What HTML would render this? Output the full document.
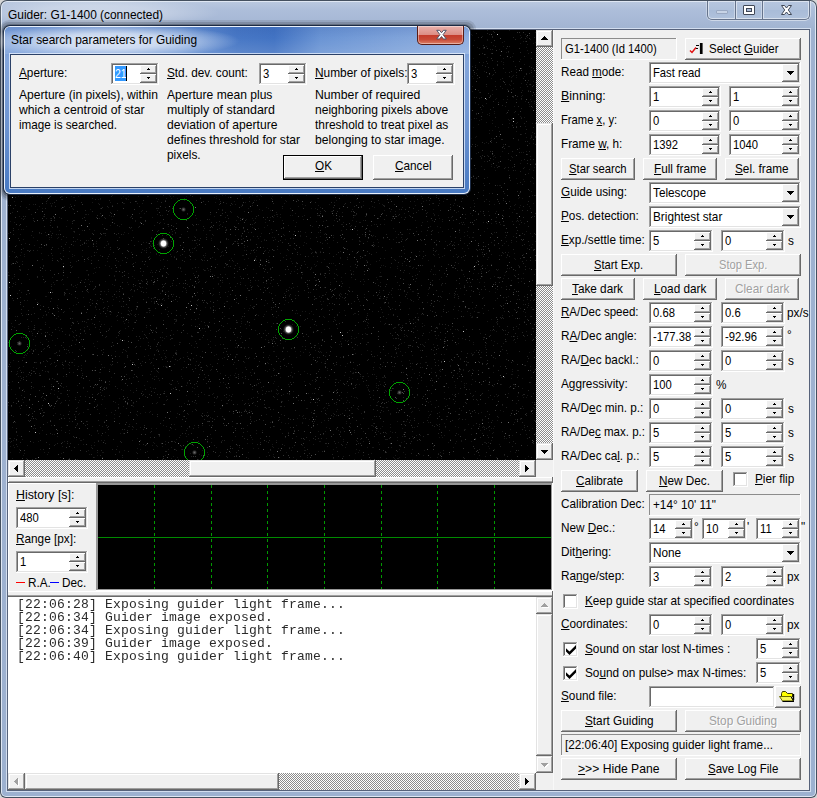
<!DOCTYPE html>
<html><head><meta charset="utf-8"><title>Guider</title>
<style>
html,body{margin:0;padding:0}
body{width:817px;height:798px;position:relative;overflow:hidden;background:#d6d6d6;font-family:"Liberation Sans",sans-serif;font-size:13px}
.a{position:absolute;box-sizing:border-box}
.t{position:absolute;white-space:nowrap;line-height:16px;transform-origin:0 0;font-family:"Liberation Sans",sans-serif}
.t u{text-decoration:underline;text-underline-offset:1px;text-decoration-thickness:1px}
.mono{font-family:"Liberation Mono",monospace}
.btn{background:#f0f0f0;box-shadow:inset -1px -1px #696969,inset 1px 1px #fff,inset -2px -2px #a0a0a0,inset 2px 2px #f0f0f0}
.sbb{background:#f0f0f0;box-shadow:inset -1px -1px #696969,inset 1px 1px #e3e3e3,inset -2px -2px #a0a0a0,inset 2px 2px #fff}
.sbtn{background:#f0f0f0;box-shadow:inset -1px -1px #696969,inset 1px 1px #fff,inset -2px -2px #a0a0a0}
.sunk{background:#fff;box-shadow:inset -1px -1px #fff,inset 1px 1px #a0a0a0,inset -2px -2px #e3e3e3,inset 2px 2px #696969}
.stat{background:#f0f0f0;box-shadow:inset -1px -1px #fff,inset 1px 1px #8c8c8c}
.track{background-color:#fff;background-image:conic-gradient(#8c8c8c 25%,#fff 0 50%,#8c8c8c 0 75%,#fff 0);background-size:2px 2px}
</style></head><body>
<div class="a " style="left:0px;top:0px;width:817px;height:798px;border-radius:7px 7px 6px 6px;background:#44505f"></div>
<div class="a " style="left:1px;top:1px;width:815px;height:796px;border-radius:6px 6px 5px 5px;background:#dfe7f3"></div>
<div class="a " style="left:2px;top:2px;width:813px;height:794px;border-radius:5px 5px 4px 4px;background:linear-gradient(180deg,#b9c8df 0,#adbeda 8px,#a6b8d5 20px,#9fb2d0 30px,#9db1d0 100%)"></div>
<div class="a " style="left:-30px;top:-2px;width:250px;height:30px;border-radius:50%;background:radial-gradient(ellipse closest-side,rgba(255,255,255,.42) 0,rgba(255,255,255,.3) 50%,rgba(255,255,255,0) 100%)"></div>
<div class="t " style="left:8px;top:7px;font-size:13px;color:#000;transform:scaleX(0.9166);">Guider: G1-1400 (connected)</div>
<div class="a " style="left:707px;top:1px;width:103px;height:19px;border:1px solid #66748c;border-top:none;border-radius:0 0 5px 5px;background:linear-gradient(180deg,#b7c7df 0,#afc1db 48%,#a9bcd8 52%,#b0c2dc 100%);box-shadow:inset 0 0 0 1px rgba(255,255,255,.5),0 1px 0 rgba(255,255,255,.45),1px 0 0 rgba(255,255,255,.45),-1px 0 0 rgba(255,255,255,.3)"></div>
<div class="a " style="left:735px;top:1px;width:1px;height:18px;background:#66748c"></div>
<div class="a " style="left:736px;top:2px;width:1px;height:16px;background:rgba(255,255,255,.5)"></div>
<div class="a " style="left:734px;top:2px;width:1px;height:16px;background:rgba(255,255,255,.35)"></div>
<div class="a " style="left:762px;top:1px;width:1px;height:18px;background:#66748c"></div>
<div class="a " style="left:763px;top:2px;width:1px;height:16px;background:rgba(255,255,255,.5)"></div>
<div class="a " style="left:761px;top:2px;width:1px;height:16px;background:rgba(255,255,255,.35)"></div>
<div class="a " style="left:716px;top:10px;width:12px;height:4px;background:#c8d4e6;border:1px solid #9aa9c2;border-radius:1px"></div>
<div class="a " style="left:743px;top:5px;width:12px;height:10px;background:#fff;border:1px solid #3f4756;border-radius:1px"></div>
<div class="a " style="left:746px;top:8px;width:6px;height:4px;background:#a9bad6;border:1px solid #3f4756"></div>
<svg class="a" style="left:780px;top:4px" width="13" height="12" viewBox="0 0 13 12"><path d="M1.5 1.5h3L6.5 4l2-2.5h3L8.3 6l3.2 4.5h-3L6.5 8l-2 2.5h-3L4.7 6z" fill="#fff" stroke="#3f4756" stroke-width="1" stroke-linejoin="round"/></svg>
<div class="a " style="left:6px;top:28px;width:805px;height:764px;background:#d3deef"></div>
<div class="a " style="left:7px;top:29px;width:803px;height:762px;background:#56627a"></div>
<div class="a " style="left:8px;top:30px;width:801px;height:760px;background:#f0f0f0"></div>
<div class="a " style="left:553px;top:30px;width:1px;height:760px;background:#f8f8f8"></div>
<div class="a " style="left:554px;top:30px;width:1px;height:760px;background:#f0f0f0"></div>
<div class="a stat" style="left:561px;top:38px;width:116px;height:22px;"></div>
<div class="t " style="left:565px;top:41px;font-size:13px;color:#000;transform:scaleX(0.8641);">G1-1400 (Id 1400)</div>
<div class="a btn" style="left:685px;top:38px;width:116px;height:22px;"></div>
<div class="t " style="left:709px;top:41px;font-size:13px;color:#000;transform:scaleX(0.8824);">Select <u>G</u>uider</div>
<svg class="a" style="left:689px;top:42px" width="16" height="14" viewBox="0 0 16 14"><path d="M1 8.5l2 2 4-5" stroke="#e01010" stroke-width="1.5" fill="none"/><path d="M7 3.5h3M7 6.5h2" stroke="#000" stroke-width="1"/><rect x="10" y="1" width="1" height="11" fill="#d8d8d8"/><rect x="11" y="1" width="2.6" height="11" fill="#000"/></svg>
<div class="t " style="left:561px;top:64px;font-size:13px;color:#000;transform:scaleX(0.8966);">Read <u>m</u>ode:</div>
<div class="a sunk" style="left:649px;top:62px;width:152px;height:22px;"></div>
<div class="a btn" style="left:782px;top:64px;width:17px;height:18px;"></div>
<div class="a " style="left:787px;top:71px;width:7px;height:1px;background:#000"></div>
<div class="a " style="left:788px;top:72px;width:5px;height:1px;background:#000"></div>
<div class="a " style="left:789px;top:73px;width:3px;height:1px;background:#000"></div>
<div class="a " style="left:790px;top:74px;width:1px;height:1px;background:#000"></div>
<div class="t " style="left:653px;top:65px;font-size:13px;color:#000;transform:scaleX(0.8650);">Fast read</div>
<div class="t " style="left:561px;top:88px;font-size:13px;color:#000;transform:scaleX(0.9515);"><u>B</u>inning:</div>
<div class="a sunk" style="left:649px;top:86px;width:72px;height:22px;"></div>
<div class="a sbtn" style="left:702px;top:88px;width:17px;height:9px;"></div>
<div class="a sbtn" style="left:702px;top:97px;width:17px;height:9px;"></div>
<div class="a " style="left:710px;top:91px;width:1px;height:1px;background:#000"></div>
<div class="a " style="left:709px;top:92px;width:3px;height:1px;background:#000"></div>
<div class="a " style="left:709px;top:100px;width:3px;height:1px;background:#000"></div>
<div class="a " style="left:710px;top:101px;width:1px;height:1px;background:#000"></div>
<div class="t " style="left:652.5px;top:89px;font-size:13px;color:#000;transform:scaleX(0.8650);">1</div>
<div class="a sunk" style="left:729px;top:86px;width:72px;height:22px;"></div>
<div class="a sbtn" style="left:782px;top:88px;width:17px;height:9px;"></div>
<div class="a sbtn" style="left:782px;top:97px;width:17px;height:9px;"></div>
<div class="a " style="left:790px;top:91px;width:1px;height:1px;background:#000"></div>
<div class="a " style="left:789px;top:92px;width:3px;height:1px;background:#000"></div>
<div class="a " style="left:789px;top:100px;width:3px;height:1px;background:#000"></div>
<div class="a " style="left:790px;top:101px;width:1px;height:1px;background:#000"></div>
<div class="t " style="left:732.5px;top:89px;font-size:13px;color:#000;transform:scaleX(0.8650);">1</div>
<div class="t " style="left:561px;top:112px;font-size:13px;color:#000;transform:scaleX(0.8645);">Frame <u>x</u>, y:</div>
<div class="a sunk" style="left:649px;top:110px;width:72px;height:22px;"></div>
<div class="a sbtn" style="left:702px;top:112px;width:17px;height:9px;"></div>
<div class="a sbtn" style="left:702px;top:121px;width:17px;height:9px;"></div>
<div class="a " style="left:710px;top:115px;width:1px;height:1px;background:#000"></div>
<div class="a " style="left:709px;top:116px;width:3px;height:1px;background:#000"></div>
<div class="a " style="left:709px;top:124px;width:3px;height:1px;background:#000"></div>
<div class="a " style="left:710px;top:125px;width:1px;height:1px;background:#000"></div>
<div class="t " style="left:652.5px;top:113px;font-size:13px;color:#000;transform:scaleX(0.8650);">0</div>
<div class="a sunk" style="left:729px;top:110px;width:72px;height:22px;"></div>
<div class="a sbtn" style="left:782px;top:112px;width:17px;height:9px;"></div>
<div class="a sbtn" style="left:782px;top:121px;width:17px;height:9px;"></div>
<div class="a " style="left:790px;top:115px;width:1px;height:1px;background:#000"></div>
<div class="a " style="left:789px;top:116px;width:3px;height:1px;background:#000"></div>
<div class="a " style="left:789px;top:124px;width:3px;height:1px;background:#000"></div>
<div class="a " style="left:790px;top:125px;width:1px;height:1px;background:#000"></div>
<div class="t " style="left:732.5px;top:113px;font-size:13px;color:#000;transform:scaleX(0.8650);">0</div>
<div class="t " style="left:561px;top:136px;font-size:13px;color:#000;transform:scaleX(0.9027);">Frame <u>w</u>, h:</div>
<div class="a sunk" style="left:649px;top:134px;width:72px;height:22px;"></div>
<div class="a sbtn" style="left:702px;top:136px;width:17px;height:9px;"></div>
<div class="a sbtn" style="left:702px;top:145px;width:17px;height:9px;"></div>
<div class="a " style="left:710px;top:139px;width:1px;height:1px;background:#000"></div>
<div class="a " style="left:709px;top:140px;width:3px;height:1px;background:#000"></div>
<div class="a " style="left:709px;top:148px;width:3px;height:1px;background:#000"></div>
<div class="a " style="left:710px;top:149px;width:1px;height:1px;background:#000"></div>
<div class="t " style="left:652.5px;top:137px;font-size:13px;color:#000;transform:scaleX(0.8650);">1392</div>
<div class="a sunk" style="left:729px;top:134px;width:72px;height:22px;"></div>
<div class="a sbtn" style="left:782px;top:136px;width:17px;height:9px;"></div>
<div class="a sbtn" style="left:782px;top:145px;width:17px;height:9px;"></div>
<div class="a " style="left:790px;top:139px;width:1px;height:1px;background:#000"></div>
<div class="a " style="left:789px;top:140px;width:3px;height:1px;background:#000"></div>
<div class="a " style="left:789px;top:148px;width:3px;height:1px;background:#000"></div>
<div class="a " style="left:790px;top:149px;width:1px;height:1px;background:#000"></div>
<div class="t " style="left:732.5px;top:137px;font-size:13px;color:#000;transform:scaleX(0.8650);">1040</div>
<div class="a btn" style="left:561px;top:158px;width:74px;height:22px;"></div>
<div class="t " style="left:569px;top:161px;font-size:13px;color:#000;transform:scaleX(0.8665);"><u>S</u>tar search</div>
<div class="a btn" style="left:643px;top:158px;width:74px;height:22px;"></div>
<div class="t " style="left:654px;top:161px;font-size:13px;color:#000;transform:scaleX(0.9050);"><u>F</u>ull frame</div>
<div class="a btn" style="left:725px;top:158px;width:74px;height:22px;"></div>
<div class="t " style="left:735px;top:161px;font-size:13px;color:#000;transform:scaleX(0.9050);"><u>S</u>el. frame</div>
<div class="t " style="left:561px;top:184px;font-size:13px;color:#000;transform:scaleX(0.9050);"><u>G</u>uide using:</div>
<div class="a sunk" style="left:649px;top:182px;width:152px;height:22px;"></div>
<div class="a btn" style="left:782px;top:184px;width:17px;height:18px;"></div>
<div class="a " style="left:787px;top:191px;width:7px;height:1px;background:#000"></div>
<div class="a " style="left:788px;top:192px;width:5px;height:1px;background:#000"></div>
<div class="a " style="left:789px;top:193px;width:3px;height:1px;background:#000"></div>
<div class="a " style="left:790px;top:194px;width:1px;height:1px;background:#000"></div>
<div class="t " style="left:653px;top:185px;font-size:13px;color:#000;transform:scaleX(0.9050);">Telescope</div>
<div class="t " style="left:561px;top:208px;font-size:13px;color:#000;transform:scaleX(0.9050);"><u>P</u>os. detection:</div>
<div class="a sunk" style="left:649px;top:206px;width:152px;height:22px;"></div>
<div class="a btn" style="left:782px;top:208px;width:17px;height:18px;"></div>
<div class="a " style="left:787px;top:215px;width:7px;height:1px;background:#000"></div>
<div class="a " style="left:788px;top:216px;width:5px;height:1px;background:#000"></div>
<div class="a " style="left:789px;top:217px;width:3px;height:1px;background:#000"></div>
<div class="a " style="left:790px;top:218px;width:1px;height:1px;background:#000"></div>
<div class="t " style="left:653px;top:209px;font-size:13px;color:#000;transform:scaleX(0.9050);">Brightest star</div>
<div class="t " style="left:561px;top:232px;font-size:13px;color:#000;transform:scaleX(0.9050);"><u>E</u>xp./settle time:</div>
<div class="a sunk" style="left:649px;top:230px;width:64px;height:22px;"></div>
<div class="a sbtn" style="left:694px;top:232px;width:17px;height:9px;"></div>
<div class="a sbtn" style="left:694px;top:241px;width:17px;height:9px;"></div>
<div class="a " style="left:702px;top:235px;width:1px;height:1px;background:#000"></div>
<div class="a " style="left:701px;top:236px;width:3px;height:1px;background:#000"></div>
<div class="a " style="left:701px;top:244px;width:3px;height:1px;background:#000"></div>
<div class="a " style="left:702px;top:245px;width:1px;height:1px;background:#000"></div>
<div class="t " style="left:652.5px;top:233px;font-size:13px;color:#000;transform:scaleX(0.8650);">5</div>
<div class="a sunk" style="left:721px;top:230px;width:64px;height:22px;"></div>
<div class="a sbtn" style="left:766px;top:232px;width:17px;height:9px;"></div>
<div class="a sbtn" style="left:766px;top:241px;width:17px;height:9px;"></div>
<div class="a " style="left:774px;top:235px;width:1px;height:1px;background:#000"></div>
<div class="a " style="left:773px;top:236px;width:3px;height:1px;background:#000"></div>
<div class="a " style="left:773px;top:244px;width:3px;height:1px;background:#000"></div>
<div class="a " style="left:774px;top:245px;width:1px;height:1px;background:#000"></div>
<div class="t " style="left:724.5px;top:233px;font-size:13px;color:#000;transform:scaleX(0.8650);">0</div>
<div class="t " style="left:788px;top:233px;font-size:13px;color:#000;transform:scaleX(0.9050);">s</div>
<div class="a btn" style="left:561px;top:254px;width:116px;height:22px;"></div>
<div class="t " style="left:594px;top:257px;font-size:13px;color:#000;transform:scaleX(0.8584);"><u>S</u>tart Exp.</div>
<div class="a btn" style="left:685px;top:254px;width:116px;height:22px;"></div>
<div class="t " style="left:720px;top:258px;font-size:13px;color:#fff;transform:scaleX(0.8569);">Stop Exp.</div>
<div class="t " style="left:719px;top:257px;font-size:13px;color:#a0a0a0;transform:scaleX(0.8569);">Stop Exp.</div>
<div class="a btn" style="left:561px;top:278px;width:74px;height:22px;"></div>
<div class="t " style="left:572px;top:281px;font-size:13px;color:#000;transform:scaleX(0.9050);"><u>T</u>ake dark</div>
<div class="a btn" style="left:643px;top:278px;width:74px;height:22px;"></div>
<div class="t " style="left:654px;top:281px;font-size:13px;color:#000;transform:scaleX(0.9050);"><u>L</u>oad dark</div>
<div class="a btn" style="left:725px;top:278px;width:74px;height:22px;"></div>
<div class="t " style="left:736px;top:282px;font-size:13px;color:#fff;transform:scaleX(0.9050);">Clear dark</div>
<div class="t " style="left:735px;top:281px;font-size:13px;color:#a0a0a0;transform:scaleX(0.9050);">Clear dark</div>
<div class="t " style="left:561px;top:304px;font-size:13px;color:#000;transform:scaleX(0.8864);"><u>R</u>A/Dec speed:</div>
<div class="a sunk" style="left:649px;top:302px;width:64px;height:22px;"></div>
<div class="a sbtn" style="left:694px;top:304px;width:17px;height:9px;"></div>
<div class="a sbtn" style="left:694px;top:313px;width:17px;height:9px;"></div>
<div class="a " style="left:702px;top:307px;width:1px;height:1px;background:#000"></div>
<div class="a " style="left:701px;top:308px;width:3px;height:1px;background:#000"></div>
<div class="a " style="left:701px;top:316px;width:3px;height:1px;background:#000"></div>
<div class="a " style="left:702px;top:317px;width:1px;height:1px;background:#000"></div>
<div class="t " style="left:652.5px;top:305px;font-size:13px;color:#000;transform:scaleX(0.8650);">0.68</div>
<div class="a sunk" style="left:721px;top:302px;width:64px;height:22px;"></div>
<div class="a sbtn" style="left:766px;top:304px;width:17px;height:9px;"></div>
<div class="a sbtn" style="left:766px;top:313px;width:17px;height:9px;"></div>
<div class="a " style="left:774px;top:307px;width:1px;height:1px;background:#000"></div>
<div class="a " style="left:773px;top:308px;width:3px;height:1px;background:#000"></div>
<div class="a " style="left:773px;top:316px;width:3px;height:1px;background:#000"></div>
<div class="a " style="left:774px;top:317px;width:1px;height:1px;background:#000"></div>
<div class="t " style="left:724.5px;top:305px;font-size:13px;color:#000;transform:scaleX(0.8650);">0.6</div>
<div class="t " style="left:787px;top:305px;font-size:13px;color:#000;transform:scaleX(0.9050);">px/s</div>
<div class="t " style="left:561px;top:328px;font-size:13px;color:#000;transform:scaleX(0.9050);">R<u>A</u>/Dec angle:</div>
<div class="a sunk" style="left:649px;top:326px;width:64px;height:22px;"></div>
<div class="a sbtn" style="left:694px;top:328px;width:17px;height:9px;"></div>
<div class="a sbtn" style="left:694px;top:337px;width:17px;height:9px;"></div>
<div class="a " style="left:702px;top:331px;width:1px;height:1px;background:#000"></div>
<div class="a " style="left:701px;top:332px;width:3px;height:1px;background:#000"></div>
<div class="a " style="left:701px;top:340px;width:3px;height:1px;background:#000"></div>
<div class="a " style="left:702px;top:341px;width:1px;height:1px;background:#000"></div>
<div class="t " style="left:652.5px;top:329px;font-size:13px;color:#000;transform:scaleX(0.8650);">-177.38</div>
<div class="a sunk" style="left:721px;top:326px;width:64px;height:22px;"></div>
<div class="a sbtn" style="left:766px;top:328px;width:17px;height:9px;"></div>
<div class="a sbtn" style="left:766px;top:337px;width:17px;height:9px;"></div>
<div class="a " style="left:774px;top:331px;width:1px;height:1px;background:#000"></div>
<div class="a " style="left:773px;top:332px;width:3px;height:1px;background:#000"></div>
<div class="a " style="left:773px;top:340px;width:3px;height:1px;background:#000"></div>
<div class="a " style="left:774px;top:341px;width:1px;height:1px;background:#000"></div>
<div class="t " style="left:724.5px;top:329px;font-size:13px;color:#000;transform:scaleX(0.8650);">-92.96</div>
<div class="t " style="left:787px;top:327px;font-size:13px;color:#000;transform:scaleX(0.9050);">°</div>
<div class="t " style="left:561px;top:352px;font-size:13px;color:#000;transform:scaleX(0.9050);">RA/<u>D</u>ec backl.:</div>
<div class="a sunk" style="left:649px;top:350px;width:64px;height:22px;"></div>
<div class="a sbtn" style="left:694px;top:352px;width:17px;height:9px;"></div>
<div class="a sbtn" style="left:694px;top:361px;width:17px;height:9px;"></div>
<div class="a " style="left:702px;top:355px;width:1px;height:1px;background:#000"></div>
<div class="a " style="left:701px;top:356px;width:3px;height:1px;background:#000"></div>
<div class="a " style="left:701px;top:364px;width:3px;height:1px;background:#000"></div>
<div class="a " style="left:702px;top:365px;width:1px;height:1px;background:#000"></div>
<div class="t " style="left:652.5px;top:353px;font-size:13px;color:#000;transform:scaleX(0.8650);">0</div>
<div class="a sunk" style="left:721px;top:350px;width:64px;height:22px;"></div>
<div class="a sbtn" style="left:766px;top:352px;width:17px;height:9px;"></div>
<div class="a sbtn" style="left:766px;top:361px;width:17px;height:9px;"></div>
<div class="a " style="left:774px;top:355px;width:1px;height:1px;background:#000"></div>
<div class="a " style="left:773px;top:356px;width:3px;height:1px;background:#000"></div>
<div class="a " style="left:773px;top:364px;width:3px;height:1px;background:#000"></div>
<div class="a " style="left:774px;top:365px;width:1px;height:1px;background:#000"></div>
<div class="t " style="left:724.5px;top:353px;font-size:13px;color:#000;transform:scaleX(0.8650);">0</div>
<div class="t " style="left:788px;top:353px;font-size:13px;color:#000;transform:scaleX(0.9050);">s</div>
<div class="t " style="left:561px;top:376px;font-size:13px;color:#000;transform:scaleX(0.9050);">A<u>g</u>gressivity:</div>
<div class="a sunk" style="left:649px;top:374px;width:64px;height:22px;"></div>
<div class="a sbtn" style="left:694px;top:376px;width:17px;height:9px;"></div>
<div class="a sbtn" style="left:694px;top:385px;width:17px;height:9px;"></div>
<div class="a " style="left:702px;top:379px;width:1px;height:1px;background:#000"></div>
<div class="a " style="left:701px;top:380px;width:3px;height:1px;background:#000"></div>
<div class="a " style="left:701px;top:388px;width:3px;height:1px;background:#000"></div>
<div class="a " style="left:702px;top:389px;width:1px;height:1px;background:#000"></div>
<div class="t " style="left:652.5px;top:377px;font-size:13px;color:#000;transform:scaleX(0.8650);">100</div>
<div class="t " style="left:716px;top:377px;font-size:13px;color:#000;transform:scaleX(0.9050);">%</div>
<div class="t " style="left:561px;top:400px;font-size:13px;color:#000;transform:scaleX(0.9050);">RA/D<u>e</u>c min. p.:</div>
<div class="a sunk" style="left:649px;top:398px;width:64px;height:22px;"></div>
<div class="a sbtn" style="left:694px;top:400px;width:17px;height:9px;"></div>
<div class="a sbtn" style="left:694px;top:409px;width:17px;height:9px;"></div>
<div class="a " style="left:702px;top:403px;width:1px;height:1px;background:#000"></div>
<div class="a " style="left:701px;top:404px;width:3px;height:1px;background:#000"></div>
<div class="a " style="left:701px;top:412px;width:3px;height:1px;background:#000"></div>
<div class="a " style="left:702px;top:413px;width:1px;height:1px;background:#000"></div>
<div class="t " style="left:652.5px;top:401px;font-size:13px;color:#000;transform:scaleX(0.8650);">0</div>
<div class="a sunk" style="left:721px;top:398px;width:64px;height:22px;"></div>
<div class="a sbtn" style="left:766px;top:400px;width:17px;height:9px;"></div>
<div class="a sbtn" style="left:766px;top:409px;width:17px;height:9px;"></div>
<div class="a " style="left:774px;top:403px;width:1px;height:1px;background:#000"></div>
<div class="a " style="left:773px;top:404px;width:3px;height:1px;background:#000"></div>
<div class="a " style="left:773px;top:412px;width:3px;height:1px;background:#000"></div>
<div class="a " style="left:774px;top:413px;width:1px;height:1px;background:#000"></div>
<div class="t " style="left:724.5px;top:401px;font-size:13px;color:#000;transform:scaleX(0.8650);">0</div>
<div class="t " style="left:788px;top:401px;font-size:13px;color:#000;transform:scaleX(0.9050);">s</div>
<div class="t " style="left:561px;top:424px;font-size:13px;color:#000;transform:scaleX(0.8876);">RA/De<u>c</u> max. p.:</div>
<div class="a sunk" style="left:649px;top:422px;width:64px;height:22px;"></div>
<div class="a sbtn" style="left:694px;top:424px;width:17px;height:9px;"></div>
<div class="a sbtn" style="left:694px;top:433px;width:17px;height:9px;"></div>
<div class="a " style="left:702px;top:427px;width:1px;height:1px;background:#000"></div>
<div class="a " style="left:701px;top:428px;width:3px;height:1px;background:#000"></div>
<div class="a " style="left:701px;top:436px;width:3px;height:1px;background:#000"></div>
<div class="a " style="left:702px;top:437px;width:1px;height:1px;background:#000"></div>
<div class="t " style="left:652.5px;top:425px;font-size:13px;color:#000;transform:scaleX(0.8650);">5</div>
<div class="a sunk" style="left:721px;top:422px;width:64px;height:22px;"></div>
<div class="a sbtn" style="left:766px;top:424px;width:17px;height:9px;"></div>
<div class="a sbtn" style="left:766px;top:433px;width:17px;height:9px;"></div>
<div class="a " style="left:774px;top:427px;width:1px;height:1px;background:#000"></div>
<div class="a " style="left:773px;top:428px;width:3px;height:1px;background:#000"></div>
<div class="a " style="left:773px;top:436px;width:3px;height:1px;background:#000"></div>
<div class="a " style="left:774px;top:437px;width:1px;height:1px;background:#000"></div>
<div class="t " style="left:724.5px;top:425px;font-size:13px;color:#000;transform:scaleX(0.8650);">5</div>
<div class="t " style="left:788px;top:425px;font-size:13px;color:#000;transform:scaleX(0.9050);">s</div>
<div class="t " style="left:561px;top:448px;font-size:13px;color:#000;transform:scaleX(0.9050);">RA/Dec ca<u>l</u>. p.:</div>
<div class="a sunk" style="left:649px;top:446px;width:64px;height:22px;"></div>
<div class="a sbtn" style="left:694px;top:448px;width:17px;height:9px;"></div>
<div class="a sbtn" style="left:694px;top:457px;width:17px;height:9px;"></div>
<div class="a " style="left:702px;top:451px;width:1px;height:1px;background:#000"></div>
<div class="a " style="left:701px;top:452px;width:3px;height:1px;background:#000"></div>
<div class="a " style="left:701px;top:460px;width:3px;height:1px;background:#000"></div>
<div class="a " style="left:702px;top:461px;width:1px;height:1px;background:#000"></div>
<div class="t " style="left:652.5px;top:449px;font-size:13px;color:#000;transform:scaleX(0.8650);">5</div>
<div class="a sunk" style="left:721px;top:446px;width:64px;height:22px;"></div>
<div class="a sbtn" style="left:766px;top:448px;width:17px;height:9px;"></div>
<div class="a sbtn" style="left:766px;top:457px;width:17px;height:9px;"></div>
<div class="a " style="left:774px;top:451px;width:1px;height:1px;background:#000"></div>
<div class="a " style="left:773px;top:452px;width:3px;height:1px;background:#000"></div>
<div class="a " style="left:773px;top:460px;width:3px;height:1px;background:#000"></div>
<div class="a " style="left:774px;top:461px;width:1px;height:1px;background:#000"></div>
<div class="t " style="left:724.5px;top:449px;font-size:13px;color:#000;transform:scaleX(0.8650);">5</div>
<div class="t " style="left:788px;top:449px;font-size:13px;color:#000;transform:scaleX(0.9050);">s</div>
<div class="a btn" style="left:561px;top:470px;width:77px;height:22px;"></div>
<div class="t " style="left:576px;top:473px;font-size:13px;color:#000;transform:scaleX(0.9050);"><u>C</u>alibrate</div>
<div class="a btn" style="left:646px;top:470px;width:77px;height:22px;"></div>
<div class="t " style="left:659px;top:473px;font-size:13px;color:#000;transform:scaleX(0.9050);"><u>N</u>ew Dec.</div>
<div class="a sunk" style="left:733px;top:472px;width:15px;height:15px;background:#fff"></div>
<div class="t " style="left:755px;top:471px;font-size:13px;color:#000;transform:scaleX(0.9050);"><u>P</u>ier flip</div>
<div class="t " style="left:561px;top:496px;font-size:13px;color:#000;transform:scaleX(0.9050);">Calibration Dec:</div>
<div class="a stat" style="left:649px;top:494px;width:152px;height:22px;"></div>
<div class="t " style="left:653px;top:497px;font-size:13px;color:#000;transform:scaleX(0.9050);">+14° 10' 11"</div>
<div class="t " style="left:561px;top:520px;font-size:13px;color:#000;transform:scaleX(0.9050);">New <u>D</u>ec.:</div>
<div class="a sunk" style="left:649px;top:518px;width:45px;height:22px;"></div>
<div class="a sbtn" style="left:675px;top:520px;width:17px;height:9px;"></div>
<div class="a sbtn" style="left:675px;top:529px;width:17px;height:9px;"></div>
<div class="a " style="left:683px;top:523px;width:1px;height:1px;background:#000"></div>
<div class="a " style="left:682px;top:524px;width:3px;height:1px;background:#000"></div>
<div class="a " style="left:682px;top:532px;width:3px;height:1px;background:#000"></div>
<div class="a " style="left:683px;top:533px;width:1px;height:1px;background:#000"></div>
<div class="t " style="left:652.5px;top:521px;font-size:13px;color:#000;transform:scaleX(0.8650);">14</div>
<div class="t " style="left:694px;top:519px;font-size:13px;color:#000;transform:scaleX(0.9050);">°</div>
<div class="a sunk" style="left:702px;top:518px;width:45px;height:22px;"></div>
<div class="a sbtn" style="left:728px;top:520px;width:17px;height:9px;"></div>
<div class="a sbtn" style="left:728px;top:529px;width:17px;height:9px;"></div>
<div class="a " style="left:736px;top:523px;width:1px;height:1px;background:#000"></div>
<div class="a " style="left:735px;top:524px;width:3px;height:1px;background:#000"></div>
<div class="a " style="left:735px;top:532px;width:3px;height:1px;background:#000"></div>
<div class="a " style="left:736px;top:533px;width:1px;height:1px;background:#000"></div>
<div class="t " style="left:705.5px;top:521px;font-size:13px;color:#000;transform:scaleX(0.8650);">10</div>
<div class="t " style="left:747px;top:519px;font-size:13px;color:#000;transform:scaleX(0.9050);">'</div>
<div class="a sunk" style="left:756px;top:518px;width:45px;height:22px;"></div>
<div class="a sbtn" style="left:782px;top:520px;width:17px;height:9px;"></div>
<div class="a sbtn" style="left:782px;top:529px;width:17px;height:9px;"></div>
<div class="a " style="left:790px;top:523px;width:1px;height:1px;background:#000"></div>
<div class="a " style="left:789px;top:524px;width:3px;height:1px;background:#000"></div>
<div class="a " style="left:789px;top:532px;width:3px;height:1px;background:#000"></div>
<div class="a " style="left:790px;top:533px;width:1px;height:1px;background:#000"></div>
<div class="t " style="left:759.5px;top:521px;font-size:13px;color:#000;transform:scaleX(0.8650);">11</div>
<div class="t " style="left:801px;top:519px;font-size:13px;color:#000;transform:scaleX(0.9050);">"</div>
<div class="t " style="left:561px;top:544px;font-size:13px;color:#000;transform:scaleX(0.9050);">Dit<u>h</u>ering:</div>
<div class="a sunk" style="left:649px;top:542px;width:152px;height:22px;"></div>
<div class="a btn" style="left:782px;top:544px;width:17px;height:18px;"></div>
<div class="a " style="left:787px;top:551px;width:7px;height:1px;background:#000"></div>
<div class="a " style="left:788px;top:552px;width:5px;height:1px;background:#000"></div>
<div class="a " style="left:789px;top:553px;width:3px;height:1px;background:#000"></div>
<div class="a " style="left:790px;top:554px;width:1px;height:1px;background:#000"></div>
<div class="t " style="left:653px;top:545px;font-size:13px;color:#000;transform:scaleX(0.9050);">None</div>
<div class="t " style="left:561px;top:568px;font-size:13px;color:#000;transform:scaleX(0.9050);">Ra<u>n</u>ge/step:</div>
<div class="a sunk" style="left:649px;top:566px;width:64px;height:22px;"></div>
<div class="a sbtn" style="left:694px;top:568px;width:17px;height:9px;"></div>
<div class="a sbtn" style="left:694px;top:577px;width:17px;height:9px;"></div>
<div class="a " style="left:702px;top:571px;width:1px;height:1px;background:#000"></div>
<div class="a " style="left:701px;top:572px;width:3px;height:1px;background:#000"></div>
<div class="a " style="left:701px;top:580px;width:3px;height:1px;background:#000"></div>
<div class="a " style="left:702px;top:581px;width:1px;height:1px;background:#000"></div>
<div class="t " style="left:652.5px;top:569px;font-size:13px;color:#000;transform:scaleX(0.8650);">3</div>
<div class="a sunk" style="left:721px;top:566px;width:64px;height:22px;"></div>
<div class="a sbtn" style="left:766px;top:568px;width:17px;height:9px;"></div>
<div class="a sbtn" style="left:766px;top:577px;width:17px;height:9px;"></div>
<div class="a " style="left:774px;top:571px;width:1px;height:1px;background:#000"></div>
<div class="a " style="left:773px;top:572px;width:3px;height:1px;background:#000"></div>
<div class="a " style="left:773px;top:580px;width:3px;height:1px;background:#000"></div>
<div class="a " style="left:774px;top:581px;width:1px;height:1px;background:#000"></div>
<div class="t " style="left:724.5px;top:569px;font-size:13px;color:#000;transform:scaleX(0.8650);">2</div>
<div class="t " style="left:787px;top:569px;font-size:13px;color:#000;transform:scaleX(0.9050);">px</div>
<div class="a sunk" style="left:563px;top:594px;width:15px;height:15px;background:#fff"></div>
<div class="t " style="left:585px;top:593px;font-size:13px;color:#000;transform:scaleX(0.9038);"><u>K</u>eep guide star at specified coordinates</div>
<div class="t " style="left:561px;top:616px;font-size:13px;color:#000;transform:scaleX(0.9050);"><u>C</u>oordinates:</div>
<div class="a sunk" style="left:649px;top:614px;width:64px;height:22px;"></div>
<div class="a sbtn" style="left:694px;top:616px;width:17px;height:9px;"></div>
<div class="a sbtn" style="left:694px;top:625px;width:17px;height:9px;"></div>
<div class="a " style="left:702px;top:619px;width:1px;height:1px;background:#000"></div>
<div class="a " style="left:701px;top:620px;width:3px;height:1px;background:#000"></div>
<div class="a " style="left:701px;top:628px;width:3px;height:1px;background:#000"></div>
<div class="a " style="left:702px;top:629px;width:1px;height:1px;background:#000"></div>
<div class="t " style="left:652.5px;top:617px;font-size:13px;color:#000;transform:scaleX(0.8650);">0</div>
<div class="a sunk" style="left:721px;top:614px;width:64px;height:22px;"></div>
<div class="a sbtn" style="left:766px;top:616px;width:17px;height:9px;"></div>
<div class="a sbtn" style="left:766px;top:625px;width:17px;height:9px;"></div>
<div class="a " style="left:774px;top:619px;width:1px;height:1px;background:#000"></div>
<div class="a " style="left:773px;top:620px;width:3px;height:1px;background:#000"></div>
<div class="a " style="left:773px;top:628px;width:3px;height:1px;background:#000"></div>
<div class="a " style="left:774px;top:629px;width:1px;height:1px;background:#000"></div>
<div class="t " style="left:724.5px;top:617px;font-size:13px;color:#000;transform:scaleX(0.8650);">0</div>
<div class="t " style="left:787px;top:617px;font-size:13px;color:#000;transform:scaleX(0.9050);">px</div>
<div class="a sunk" style="left:563px;top:642px;width:15px;height:15px;background:#fff"></div>
<svg class="a" style="left:563px;top:642px" width="15" height="15" viewBox="0 0 15 15"><path d="M3 6.2L6.5 9.6 13 3.1V6.5L6.5 13 3 9.6Z" fill="#000"/></svg>
<div class="t " style="left:585px;top:641px;font-size:13px;color:#000;transform:scaleX(0.9050);"><u>S</u>ound on star lost N-times :</div>
<div class="a sunk" style="left:756px;top:638px;width:45px;height:22px;"></div>
<div class="a sbtn" style="left:782px;top:640px;width:17px;height:9px;"></div>
<div class="a sbtn" style="left:782px;top:649px;width:17px;height:9px;"></div>
<div class="a " style="left:790px;top:643px;width:1px;height:1px;background:#000"></div>
<div class="a " style="left:789px;top:644px;width:3px;height:1px;background:#000"></div>
<div class="a " style="left:789px;top:652px;width:3px;height:1px;background:#000"></div>
<div class="a " style="left:790px;top:653px;width:1px;height:1px;background:#000"></div>
<div class="t " style="left:759.5px;top:641px;font-size:13px;color:#000;transform:scaleX(0.8650);">5</div>
<div class="a sunk" style="left:563px;top:666px;width:15px;height:15px;background:#fff"></div>
<svg class="a" style="left:563px;top:666px" width="15" height="15" viewBox="0 0 15 15"><path d="M3 6.2L6.5 9.6 13 3.1V6.5L6.5 13 3 9.6Z" fill="#000"/></svg>
<div class="t " style="left:585px;top:665px;font-size:13px;color:#000;transform:scaleX(0.9050);">So<u>u</u>nd on pulse> max N-times:</div>
<div class="a sunk" style="left:756px;top:662px;width:45px;height:22px;"></div>
<div class="a sbtn" style="left:782px;top:664px;width:17px;height:9px;"></div>
<div class="a sbtn" style="left:782px;top:673px;width:17px;height:9px;"></div>
<div class="a " style="left:790px;top:667px;width:1px;height:1px;background:#000"></div>
<div class="a " style="left:789px;top:668px;width:3px;height:1px;background:#000"></div>
<div class="a " style="left:789px;top:676px;width:3px;height:1px;background:#000"></div>
<div class="a " style="left:790px;top:677px;width:1px;height:1px;background:#000"></div>
<div class="t " style="left:759.5px;top:665px;font-size:13px;color:#000;transform:scaleX(0.8650);">5</div>
<div class="t " style="left:561px;top:688px;font-size:13px;color:#000;transform:scaleX(0.9050);"><u>S</u>ound file:</div>
<div class="a sunk" style="left:649px;top:686px;width:126px;height:22px;"></div>
<div class="a btn" style="left:775px;top:686px;width:26px;height:22px;"></div>
<svg class="a" style="left:779px;top:691px" width="16" height="11" viewBox="0 0 16 11"><path d="M2.5 6V2.5L3.5 0.5H6.5L8.5 2.5H13.5V6" fill="#ff0" stroke="#3a3a00" stroke-width="1"/><path d="M14.5 3V9" stroke="#000" stroke-width="1.4"/><path d="M0.5 5.5H12L14.5 10H3.5Z" fill="#f6f65a" stroke="#6a6a00" stroke-width="1"/><path d="M3.5 10.5H15" stroke="#000" stroke-width="1.2"/><path d="M12 5.5L14.5 10" stroke="#000" stroke-width="1"/></svg>
<div class="a btn" style="left:561px;top:710px;width:116px;height:22px;"></div>
<div class="t " style="left:585px;top:713px;font-size:13px;color:#000;transform:scaleX(0.9050);"><u>S</u>tart Guiding</div>
<div class="a btn" style="left:685px;top:710px;width:116px;height:22px;"></div>
<div class="t " style="left:710px;top:714px;font-size:13px;color:#fff;transform:scaleX(0.9050);">Stop Guiding</div>
<div class="t " style="left:709px;top:713px;font-size:13px;color:#a0a0a0;transform:scaleX(0.9050);">Stop Guiding</div>
<div class="a stat" style="left:561px;top:734px;width:240px;height:22px;"></div>
<div class="t " style="left:565px;top:737px;font-size:13px;color:#000;transform:scaleX(0.9050);">[22:06:40] Exposing guider light frame...</div>
<div class="a btn" style="left:561px;top:758px;width:116px;height:22px;"></div>
<div class="t " style="left:578px;top:761px;font-size:13px;color:#000;transform:scaleX(0.9358);"><u>></u>>> Hide Pane</div>
<div class="a btn" style="left:685px;top:758px;width:116px;height:22px;"></div>
<div class="t " style="left:708px;top:761px;font-size:13px;color:#000;transform:scaleX(0.8844);"><u>S</u>ave Log File</div>
<svg class="a" style="left:8px;top:30px;background:#000" width="528" height="430" viewBox="0 0 528 430" shape-rendering="crispEdges"><defs><radialGradient id="g"><stop offset="0" stop-color="#fff"/><stop offset=".45" stop-color="#aaa"/><stop offset="1" stop-color="#000" stop-opacity="0"/></radialGradient><radialGradient id="f"><stop offset="0" stop-color="#6a6a6a"/><stop offset=".5" stop-color="#333"/><stop offset="1" stop-color="#000" stop-opacity="0"/></radialGradient></defs><g transform="translate(0,.5)" stroke-width="1" fill="none"><path d="M331 77h1M404 333h1M49 37h1M96 187h1M59 259h1M219 19h1M88 222h1M428 35h1M246 46h1M434 30h1M126 114h1M63 295h1M406 25h1M226 23h1M136 148h1M429 73h1M120 292h1M315 286h1M185 52h1M192 190h1M99 280h1M64 288h1M61 316h1M210 254h1M437 397h1M321 238h1M464 185h1M306 127h1M184 357h1M249 41h1M307 268h1M506 175h1M459 147h1M74 60h1M524 214h1M168 387h1M350 77h1M500 215h1M40 342h1M79 391h1M321 174h1M358 304h1M508 296h1M467 35h1M95 138h1M485 356h1M66 31h1M317 331h1M456 145h1M395 342h1M355 11h1M472 181h1M172 312h1M119 252h1M60 111h1M294 66h1M253 203h1M400 254h1M82 85h1M459 205h1M284 70h1M440 281h1M285 361h1M425 183h1M389 118h1M154 42h1M180 77h1M237 337h1M238 6h1M496 425h1M186 134h1M288 2h1M149 214h1M378 312h1M326 64h1M527 316h1M55 233h1M401 203h1M408 201h1M106 246h1M410 31h1M195 34h1M213 225h1M166 56h1M348 307h1M53 52h1M0 290h1M154 274h1M103 186h1M26 36h1M212 314h1M385 76h1M258 177h1M372 242h1M125 59h1M499 238h1M491 247h1M319 43h1M147 52h1M350 379h1M271 245h1M165 264h1M23 105h1M370 75h1M27 388h1M305 329h1M93 356h1M267 265h1M375 85h1M364 395h1M228 272h1M514 168h1M228 313h1M199 412h1M245 418h1M410 378h1M232 102h1M504 182h1M29 14h1M286 241h1M265 99h1M352 228h1M357 186h1M82 112h1M104 116h1M481 100h1M345 104h1M494 319h1M1 245h1M352 409h1M86 427h1M122 198h1M204 244h1M182 222h1M340 44h1M405 237h1M411 380h1M86 371h1M162 87h1M130 14h1M154 302h1M476 412h1M149 313h1M485 336h1M358 79h1M134 10h1M14 409h1M105 269h1M142 222h1M199 422h1M216 14h1M257 108h1M299 256h1M246 391h1M333 132h1M429 427h1M134 31h1M362 234h1M430 423h1M513 66h1M155 268h1M522 9h1M450 397h1M187 311h1M4 397h1M153 88h1M144 242h1M123 284h1M63 166h1M494 401h1M108 286h1M58 127h1M195 141h1M43 395h1M100 259h1M463 287h1M28 389h1M64 226h1M333 313h1M517 310h1M524 102h1M283 231h1M520 273h1M489 259h1M253 357h1M265 286h1M207 229h1M140 213h1M124 200h1M452 161h1M74 343h1M246 219h1M74 108h1M310 401h1M125 397h1M158 366h1M374 73h1M259 70h1M478 112h1M96 203h1M498 83h1M229 82h1M441 263h1M413 173h1M431 100h1M365 163h1M94 369h1M374 9h1M346 283h1M469 225h1M18 196h1M339 264h1M302 262h1M65 57h1M234 53h1M86 135h1M278 20h1M185 138h1M132 419h1M432 346h1M264 207h1M152 274h1M527 292h1M506 358h1M334 45h1M285 29h1M187 217h1M74 137h1M17 324h1M90 410h1M266 42h1M227 34h1M270 62h1M464 5h1M347 283h1M427 137h1M132 22h1M244 56h1M165 134h1M51 92h1M206 159h1M312 271h1M210 148h1M456 256h1M182 138h1M355 411h1M18 128h1M37 7h1M18 375h1M517 282h1M194 263h1M486 125h1M457 54h1M442 336h1M506 279h1M402 259h1M315 352h1M220 117h1M350 101h1M143 207h1M355 27h1M132 7h1M72 320h1M261 220h1M167 28h1M86 340h1M390 259h1M288 306h1M248 354h1M300 23h1M470 94h1M161 137h1M456 1h1M269 186h1M336 280h1M331 125h1M35 158h1M223 182h1M187 0h1M343 195h1M85 243h1M285 257h1M205 127h1M516 397h1M5 46h1M270 418h1M91 73h1M409 300h1M42 201h1M23 153h1M311 322h1M238 43h1M158 336h1M398 391h1M333 368h1M506 76h1M290 370h1M148 22h1M525 321h1M439 375h1M517 71h1M516 291h1M16 423h1M235 43h1M31 21h1M136 326h1M369 53h1M385 427h1M462 285h1M51 321h1M19 320h1M250 250h1M270 1h1M467 408h1M71 383h1M515 274h1M94 337h1M67 381h1M485 129h1M76 135h1M240 373h1M210 118h1M471 252h1M391 39h1M490 350h1M294 392h1M47 315h1M203 39h1M150 169h1M260 333h1M311 318h1M136 6h1M493 31h1M497 137h1M101 354h1M222 345h1M501 148h1M292 237h1M477 238h1M121 281h1M204 159h1M87 242h1M17 148h1M469 39h1M518 230h1M275 198h1M214 107h1M76 297h1M92 72h1M268 184h1M135 308h1M520 143h1M115 360h1M373 118h1M509 248h1M403 12h1M162 1h1M503 348h1M461 207h1M309 372h1M144 213h1M352 192h1M323 61h1M339 0h1M332 384h1M346 429h1M407 61h1M200 365h1M12 378h1M296 129h1M381 33h1M402 199h1M78 184h1M438 386h1M281 24h1M287 52h1M52 427h1M292 325h1M152 127h1M272 223h1M523 161h1M194 395h1M382 401h1M438 14h1M409 283h1M208 368h1M82 25h1M420 230h1M141 329h1M293 248h1M50 281h1M130 87h1M483 212h1M351 144h1M304 130h1M266 207h1M244 154h1M494 285h1M403 61h1M171 329h1M165 38h1M212 256h1M509 281h1M225 231h1M340 388h1M460 218h1M142 280h1M197 124h1M92 89h1M350 284h1M93 163h1M244 188h1M264 414h1M206 10h1M422 196h1M423 381h1M215 192h1M276 173h1M63 255h1M284 294h1M368 64h1M515 270h1M221 47h1M277 127h1M393 204h1M456 221h1M319 416h1M22 65h1M33 217h1M484 300h1M501 0h1M74 200h1M479 229h1M254 400h1M111 114h1M158 77h1M111 422h1M468 43h1M40 0h1M128 119h1M38 330h1M311 65h1M257 270h1M447 357h1M114 50h1M72 153h1M196 198h1M267 114h1M1 5h1M308 235h1M285 161h1M248 243h1M240 280h1M252 14h1M421 360h1M314 28h1M22 99h1M510 345h1M430 41h1M263 116h1M434 189h1M232 252h1M34 356h1M346 367h1M430 185h1M405 101h1M6 408h1M299 378h1M516 34h1M210 253h1M205 159h1M198 118h1M476 113h1M271 389h1M302 55h1M507 312h1M191 114h1M496 213h1M57 304h1M149 201h1M55 109h1M24 305h1M145 212h1M53 363h1M61 94h1M402 230h1M321 375h1M115 40h1M169 168h1M195 94h1M478 16h1M319 340h1M387 429h1M382 169h1M453 86h1M111 1h1M80 143h1M82 179h1M430 63h1M212 194h1M365 393h1M316 420h1M442 44h1M50 361h1M484 100h1M381 277h1M457 98h1M331 186h1M485 15h1M420 126h1M414 20h1M384 17h1M475 32h1M63 131h1M199 382h1M64 310h1M347 185h1M278 171h1M44 134h1M324 141h1M304 1h1M66 12h1M239 54h1M486 366h1M476 397h1M395 404h1M257 220h1M505 67h1M508 93h1M8 410h1M310 421h1M154 310h1M241 167h1M327 235h1M370 401h1M80 262h1M202 200h1M163 126h1M417 33h1M34 246h1M333 82h1M436 53h1M73 135h1M86 106h1M98 215h1M510 363h1M457 88h1M239 68h1M426 235h1M240 382h1M124 399h1M300 150h1M286 290h1M274 190h1M260 377h1M266 101h1M449 126h1M190 125h1M241 78h1M288 296h1M192 167h1M66 202h1M257 125h1M519 269h1M236 332h1M102 334h1M475 18h1M104 2h1M486 419h1M236 229h1M382 20h1M300 119h1M122 25h1M194 307h1M198 38h1M381 262h1M182 229h1M266 396h1M6 54h1M358 111h1M38 188h1M348 72h1M45 104h1M261 19h1M208 417h1M11 419h1M335 209h1M380 94h1M319 39h1M208 16h1M507 280h1M495 32h1M417 51h1M404 339h1M158 327h1M93 334h1M167 203h1M277 209h1M290 341h1M314 213h1M52 159h1M365 212h1M426 9h1M372 329h1M201 200h1M414 104h1M6 222h1M160 216h1M116 420h1M92 207h1M373 235h1M166 66h1M15 26h1M145 328h1M406 45h1M379 377h1M516 87h1M149 178h1M290 82h1M175 34h1M111 196h1M502 385h1M202 154h1M129 428h1M44 247h1M322 27h1M397 44h1M164 327h1M227 317h1M414 314h1M200 424h1M484 93h1M223 21h1M409 265h1M160 196h1M367 63h1M153 126h1M197 21h1M39 341h1M331 60h1M399 306h1M466 281h1M313 332h1M430 157h1M255 217h1M398 337h1M376 228h1M515 224h1M183 11h1M3 316h1M501 238h1M240 228h1M469 428h1M183 414h1M484 204h1M109 34h1M131 183h1M440 187h1M93 410h1M452 258h1M522 336h1M41 20h1M133 42h1M321 398h1M523 40h1M55 385h1M516 193h1M139 13h1M67 314h1M112 99h1M134 251h1M294 415h1M169 351h1M226 33h1M359 312h1M258 81h1M331 314h1M281 417h1M467 73h1M260 257h1M491 106h1M269 315h1M518 121h1M326 190h1M37 101h1M186 206h1M165 325h1M284 347h1M335 192h1M172 405h1M270 58h1M49 325h1M368 231h1M107 129h1M403 377h1M380 135h1M384 188h1M149 184h1M338 391h1M83 226h1M235 90h1M49 151h1M259 158h1M320 375h1M1 382h1M34 113h1M152 148h1M442 213h1M524 186h1M48 67h1M500 116h1M46 11h1M55 1h1M363 155h1M108 267h1M365 273h1M229 211h1M308 301h1M136 104h1M375 319h1M486 81h1M137 7h1M249 362h1M152 230h1M98 32h1M148 340h1M276 205h1M270 5h1M57 330h1M454 308h1M504 127h1M169 0h1M45 31h1M25 207h1M190 121h1M163 29h1M107 6h1M201 72h1M423 102h1M519 331h1M425 416h1M178 260h1M316 32h1M307 320h1M49 370h1M489 366h1M6 192h1M447 381h1M476 41h1M463 89h1M231 53h1M267 118h1M39 63h1M343 383h1M269 364h1M53 136h1M446 351h1M271 151h1M222 43h1M519 7h1M173 133h1M241 380h1M207 81h1M334 98h1M398 168h1M244 194h1M480 241h1M6 13h1M447 371h1M239 292h1M315 404h1M217 200h1M79 289h1M175 74h1M33 13h1M114 54h1M165 176h1M145 358h1M29 15h1M42 70h1M43 356h1M69 377h1M47 33h1M372 102h1M67 386h1M393 54h1M252 105h1M208 57h1M34 17h1M89 422h1M294 244h1M102 67h1M100 405h1M209 150h1M326 172h1M433 133h1M21 179h1M262 144h1M49 366h1M376 164h1M515 243h1M294 316h1M31 403h1M422 15h1M446 265h1M100 177h1M480 360h1M49 275h1M221 365h1M93 294h1M294 87h1M446 0h1M206 147h1M55 2h1M356 251h1M97 251h1M188 253h1M355 425h1M527 133h1M162 145h1M219 358h1M237 255h1M169 56h1M82 251h1M107 321h1M334 182h1M97 205h1M404 381h1M88 216h1M25 190h1M211 155h1M269 219h1M513 87h1M388 322h1M239 235h1M129 272h1M34 178h1M334 267h1M159 230h1M331 86h1M474 224h1M263 296h1M236 64h1M342 236h1M243 259h1M196 136h1M308 386h1M158 370h1M159 126h1M334 308h1M356 82h1M193 132h1M104 84h1M104 100h1M393 77h1M151 406h1M309 375h1M304 222h1M280 100h1M111 326h1M109 143h1M211 198h1M475 17h1M12 204h1M447 355h1M227 256h1M303 237h1M22 72h1M263 309h1M414 2h1M248 220h1M431 117h1M234 347h1M185 328h1M127 232h1M442 160h1M266 321h1M100 214h1M248 400h1M409 365h1M160 128h1M433 247h1M466 10h1M419 265h1M187 335h1M335 398h1M10 199h1M501 54h1M39 128h1M223 82h1M204 265h1M356 51h1M467 277h1M209 367h1M487 262h1M16 327h1M378 267h1M351 210h1M467 107h1M188 200h1M526 390h1M125 373h1M364 326h1M57 129h1M280 195h1M409 31h1M13 38h1M428 215h1M360 297h1M271 55h1M229 155h1M410 269h1M224 410h1M401 236h1M217 84h1M132 397h1M70 414h1M197 240h1M231 417h1M149 180h1M423 239h1M301 389h1M128 399h1M480 181h1M235 136h1M385 351h1M259 218h1M190 246h1M2 412h1M287 183h1M250 335h1M309 164h1M491 248h1M438 319h1M87 337h1M371 78h1M310 197h1M58 43h1M332 401h1M143 271h1M353 324h1M15 336h1M11 107h1M73 335h1M300 128h1M103 296h1M146 119h1M190 397h1M462 177h1M156 106h1M412 405h1M171 312h1M92 342h1M304 101h1M506 354h1M218 271h1M80 379h1M449 343h1M119 284h1M121 135h1M429 119h1M142 242h1M504 285h1M59 247h1M478 73h1M503 126h1M510 84h1M6 82h1M328 239h1M509 340h1M303 238h1M383 218h1M428 346h1M77 92h1M369 325h1M29 10h1M46 349h1M338 414h1M96 261h1M495 248h1M147 17h1M218 367h1M425 320h1M129 173h1M96 337h1M374 174h1M485 398h1M215 145h1M445 175h1M432 128h1M53 423h1M296 149h1M363 423h1M505 206h1M341 257h1M278 259h1M353 104h1M504 405h1M120 169h1M196 162h1M306 65h1M89 401h1M41 204h1M415 279h1M50 204h1M307 55h1M6 23h1M194 420h1M486 311h1M61 403h1M512 278h1M385 315h1M150 320h1M84 108h1M40 341h1M468 320h1M178 51h1M185 18h1M431 396h1M103 335h1M13 188h1M142 402h1M316 287h1M264 154h1M189 215h1M35 163h1M20 220h1M55 254h1M40 422h1M121 396h1M431 294h1M414 228h1M68 7h1M396 304h1M159 243h1M422 280h1M104 42h1M483 108h1M155 320h1M15 218h1M4 4h1M124 45h1M223 62h1M132 241h1M18 141h1M248 230h1M191 25h1M374 396h1M148 373h1M86 150h1M510 235h1M260 26h1M32 5h1M62 7h1M81 199h1M318 159h1M169 427h1M498 311h1M61 161h1M376 294h1M449 240h1M170 74h1M119 185h1M167 322h1M427 244h1M394 398h1M463 139h1M341 149h1M286 31h1M340 310h1M15 425h1M154 307h1M316 299h1M438 126h1M385 198h1M385 308h1M239 413h1M462 145h1M1 164h1M269 137h1M432 80h1M43 147h1M144 415h1M150 140h1M511 177h1M87 276h1M496 408h1M390 102h1M239 158h1M58 346h1M404 238h1M211 130h1M9 405h1M394 235h1M89 274h1M363 395h1M64 119h1M407 296h1M265 426h1M328 244h1M518 301h1M206 96h1M217 98h1M94 92h1M296 185h1M367 206h1M152 126h1M45 252h1M383 54h1M380 323h1M474 403h1M83 79h1M323 305h1M31 176h1M287 265h1M21 48h1M34 104h1M497 300h1M218 133h1M286 218h1M99 228h1M134 130h1M38 173h1M205 92h1M387 42h1M28 26h1M35 285h1M378 361h1M469 249h1M65 306h1M406 61h1M92 131h1M326 289h1M238 328h1M91 342h1M518 201h1M187 229h1M163 189h1M240 369h1M227 88h1M39 131h1M360 30h1M28 428h1M48 132h1M525 363h1M495 28h1M103 74h1M325 386h1M5 101h1M305 301h1M451 388h1M107 241h1M331 190h1M263 199h1M127 191h1M492 194h1M172 225h1M244 413h1M146 346h1M12 239h1M199 409h1M36 80h1M225 39h1M382 383h1M143 398h1M457 49h1M394 11h1M76 231h1M347 165h1M239 244h1M118 321h1M339 113h1M58 92h1M462 283h1M148 224h1M152 136h1M428 210h1M252 79h1M26 138h1M303 171h1M171 133h1M502 55h1M325 233h1M494 58h1M157 262h1M58 323h1M216 286h1M488 427h1M293 61h1M263 386h1M206 186h1M442 133h1M244 121h1M99 199h1M296 212h1M166 29h1M300 73h1M16 226h1M519 174h1M523 71h1M453 0h1M293 95h1M368 222h1M41 209h1M223 141h1M185 70h1M184 267h1M235 364h1M179 100h1M81 424h1M89 311h1M507 389h1M280 89h1M210 70h1M196 298h1M315 103h1M10 33h1M417 369h1M56 265h1M355 171h1M288 327h1M504 46h1M15 209h1M488 68h1M272 127h1M190 288h1M375 18h1M167 359h1M380 294h1M4 182h1M456 264h1M73 61h1M365 365h1M250 418h1M328 398h1M390 295h1M62 149h1M110 374h1M506 228h1M525 13h1M137 10h1M249 45h1M229 316h1M186 85h1M105 159h1M256 284h1M30 9h1M98 357h1M199 133h1M18 428h1M475 267h1M244 359h1M454 52h1M359 48h1M183 23h1M279 63h1M476 252h1M512 389h1M286 56h1M124 62h1M415 70h1M232 116h1M150 342h1M473 382h1M406 84h1M18 325h1M398 355h1M430 305h1M37 202h1M53 397h1M371 173h1M410 123h1M343 366h1M446 288h1M328 417h1M410 287h1M54 166h1M150 348h1M361 127h1M432 339h1M11 186h1M111 271h1M191 35h1M332 221h1M205 258h1M21 115h1M142 215h1M406 397h1M464 324h1M47 414h1M41 17h1M272 347h1M279 321h1M36 318h1M102 128h1M124 266h1M13 222h1M242 20h1M294 57h1M312 177h1M170 61h1M61 304h1M526 137h1M86 238h1M151 225h1M126 261h1M134 150h1M416 295h1M295 140h1M249 376h1M89 379h1M294 429h1M465 312h1M226 332h1M395 103h1M375 235h1M310 313h1M489 240h1M317 15h1M248 170h1M226 96h1M524 279h1M392 299h1M405 6h1M361 83h1M244 165h1M333 251h1M276 145h1M221 151h1M58 395h1M22 81h1M68 310h1M356 225h1M63 264h1M397 427h1M450 181h1M111 266h1M230 346h1M158 213h1M345 342h1M360 71h1M207 315h1M283 420h1M97 378h1M486 137h1M130 211h1M105 2h1M420 392h1M120 254h1M407 292h1M153 213h1M286 318h1M113 194h1M463 354h1M468 147h1M361 149h1M361 200h1M393 331h1M329 3h1M511 194h1M454 153h1M188 274h1M311 411h1M148 223h1M386 297h1M237 45h1M338 165h1M248 166h1M209 218h1M10 13h1M48 131h1M509 153h1M319 275h1M447 264h1M440 199h1M475 183h1M41 304h1M359 231h1M10 346h1M69 268h1M234 50h1M419 191h1M512 205h1M157 96h1M431 249h1M411 225h1M351 354h1M94 87h1M371 162h1M375 38h1M318 262h1M179 56h1M301 353h1M351 420h1M521 215h1M160 268h1M296 417h1M523 106h1M517 96h1M422 93h1M61 322h1M109 180h1M43 354h1M421 5h1M2 157h1M4 155h1M407 50h1M15 342h1M30 100h1M179 254h1M272 331h1M526 73h1M203 210h1M124 74h1M160 265h1M521 54h1M29 51h1M77 87h1M502 421h1M478 313h1M440 412h1M63 332h1M12 350h1M330 73h1M243 181h1M282 86h1M33 136h1M101 298h1M64 178h1M196 230h1M394 10h1M55 112h1M405 298h1M44 225h1M55 317h1M244 127h1M228 22h1M163 300h1M177 161h1M6 417h1M466 155h1M428 308h1M258 253h1M69 124h1M399 345h1M226 211h1M316 204h1M496 11h1M249 44h1M177 87h1M366 194h1M191 3h1M297 202h1M371 58h1M343 273h1M394 171h1M412 333h1M67 63h1M432 422h1M359 283h1M250 198h1M195 239h1M290 176h1M242 223h1M35 142h1M25 174h1M159 123h1M132 47h1M201 138h1M130 284h1M453 239h1M245 81h1M376 180h1M221 369h1M414 192h1M213 152h1M487 258h1M209 116h1M463 345h1M134 361h1M267 305h1M450 300h1M376 273h1M252 206h1M522 108h1M128 384h1M125 347h1M525 46h1M276 376h1M394 14h1M148 159h1M15 199h1M88 355h1M181 397h1M237 164h1M192 339h1M111 34h1M370 412h1M512 388h1M304 98h1M67 367h1M318 45h1M231 147h1M129 418h1M408 144h1M364 206h1M475 396h1M135 141h1M180 15h1M375 347h1M359 211h1M25 337h1M473 127h1M410 180h1M100 93h1M298 58h1M277 311h1M224 364h1M41 207h1M40 311h1M165 220h1M202 387h1M310 79h1M389 378h1M40 282h1M318 322h1M183 289h1M233 291h1M509 366h1M260 222h1M357 0h1M114 427h1M293 21h1M48 125h1M113 19h1M326 107h1M353 383h1M88 213h1M403 382h1M226 143h1M92 178h1M434 226h1M348 354h1M515 378h1M463 260h1M55 346h1M210 219h1M524 398h1M130 250h1M193 22h1M267 89h1M167 399h1M241 278h1M266 127h1M60 86h1M366 177h1M421 47h1M206 325h1M318 70h1M139 351h1M498 343h1M494 121h1M247 3h1M527 354h1M455 68h1M359 357h1M306 68h1M145 300h1M246 170h1M120 280h1M434 389h1M173 346h1M158 306h1M472 429h1M415 425h1M211 58h1M296 6h1M369 249h1M211 22h1M61 143h1M311 100h1M113 359h1M316 229h1M115 82h1M332 227h1M479 291h1M371 148h1M172 285h1M73 23h1M11 239h1M497 42h1M339 378h1M270 55h1M500 222h1M500 97h1M329 4h1M367 46h1M292 321h1M257 334h1M251 40h1M141 382h1M28 12h1M404 429h1M148 151h1M376 95h1M172 52h1M317 380h1M334 194h1M188 331h1M364 163h1M235 188h1M139 282h1M378 428h1M259 122h1M59 21h1M109 290h1M412 25h1M221 253h1M433 255h1M161 153h1M82 72h1M232 83h1M141 226h1M411 45h1M40 225h1M490 97h1M223 370h1M381 1h1M32 312h1M523 217h1M146 145h1M73 338h1M56 263h1M431 173h1M64 224h1M9 341h1M180 371h1M168 193h1M302 2h1M453 411h1M356 290h1M200 240h1M87 277h1M331 264h1M471 219h1M158 205h1M83 415h1M61 370h1M339 311h1M304 289h1M431 188h1M492 336h1M140 153h1M351 271h1M28 96h1M227 347h1M458 353h1M87 75h1M380 284h1M426 184h1M246 289h1M451 202h1M267 58h1M232 92h1M207 280h1M114 113h1M259 332h1M97 96h1M257 363h1M501 116h1M469 115h1M115 376h1M525 301h1M82 208h1M75 409h1M450 68h1M515 281h1M519 365h1M117 320h1M527 52h1M471 425h1M401 278h1M175 98h1M486 396h1M95 70h1M382 397h1M58 207h1M242 24h1M381 21h1M15 359h1M218 235h1M307 61h1M138 218h1M89 318h1M206 288h1M117 372h1M363 86h1M375 381h1M349 411h1M11 422h1M261 62h1M245 190h1M525 377h1M365 369h1M500 22h1M361 51h1M364 281h1M335 411h1M115 17h1M248 130h1M362 98h1M457 10h1M450 58h1M21 249h1M113 37h1M264 94h1M153 283h1M296 351h1M389 428h1M147 301h1M256 275h1M275 227h1M14 12h1M498 256h1M495 16h1M36 38h1M186 317h1M401 243h1M162 354h1M459 201h1M234 312h1M77 184h1M337 270h1M221 159h1M134 301h1M44 108h1M173 419h1M369 372h1M478 169h1M479 198h1M362 160h1M6 171h1M495 170h1M232 10h1M254 235h1M46 323h1M149 372h1M147 139h1M393 139h1M65 256h1M268 182h1M142 357h1M34 287h1M97 102h1M436 324h1M101 185h1M288 406h1M243 407h1M144 348h1M73 155h1M349 378h1M371 260h1M251 179h1M415 171h1M61 360h1M345 343h1M330 400h1M493 257h1M376 124h1M240 178h1M154 69h1M210 3h1M464 207h1M456 202h1M309 86h1M67 73h1M308 368h1M315 129h1M348 37h1M194 298h1M81 299h1M183 155h1M361 239h1M365 396h1M438 369h1M69 429h1M496 163h1M179 141h1M263 279h1M23 388h1M168 320h1M274 121h1M20 111h1M48 204h1M458 102h1M289 256h1M101 100h1M247 375h1M58 66h1M49 40h1M75 414h1M349 368h1M139 2h1M192 138h1M15 327h1M330 14h1M217 164h1M334 383h1M27 332h1M497 207h1M345 89h1M58 212h1M46 44h1M342 397h1M506 306h1M409 131h1M474 6h1M26 162h1M320 28h1M425 314h1M337 80h1M95 9h1M159 107h1M146 271h1M92 183h1M370 216h1M352 275h1M157 336h1M338 117h1M264 416h1M489 390h1M32 397h1M316 333h1M464 286h1M284 185h1M280 67h1M258 4h1M487 51h1M371 77h1M233 205h1M92 14h1M137 62h1M61 278h1M513 104h1M186 132h1M374 377h1M152 90h1M165 270h1M29 179h1M248 226h1M510 109h1M398 235h1M217 165h1M27 55h1M15 33h1M411 345h1M359 30h1M233 288h1M385 209h1M384 336h1M229 15h1M257 10h1M268 363h1M444 123h1M236 181h1M208 166h1M435 329h1M285 152h1M510 110h1M160 244h1M273 384h1M139 421h1M307 144h1M90 169h1M4 248h1M255 82h1M327 349h1M463 108h1M53 400h1M214 376h1M369 23h1M449 93h1M445 71h1M304 350h1M25 412h1M114 77h1M9 68h1M309 77h1M514 376h1M360 49h1M172 237h1M406 46h1M424 173h1M406 171h1M33 299h1M240 103h1M15 19h1M138 258h1M237 294h1M440 357h1M107 372h1M20 24h1M324 33h1M112 61h1M499 69h1M438 1h1M183 114h1M151 324h1M512 57h1M362 429h1M508 39h1M357 110h1M229 374h1M74 139h1M181 7h1M270 137h1M70 22h1M201 260h1M49 208h1M371 136h1M10 166h1M42 334h1M464 278h1M288 280h1M338 353h1M420 381h1M275 204h1M432 162h1M429 196h1M154 198h1M394 209h1M146 325h1M5 122h1M513 130h1M386 123h1M203 339h1M118 44h1M34 366h1M50 207h1M332 350h1M453 281h1M323 233h1M0 242h1M481 261h1M350 303h1M389 120h1M387 181h1M65 201h1M272 313h1M329 36h1M271 134h1M484 369h1M356 267h1M488 292h1M226 72h1M67 387h1M372 268h1M209 270h1M173 416h1M374 122h1M176 78h1M471 90h1M44 164h1M390 185h1M438 62h1M419 78h1M257 192h1M105 186h1M365 339h1M309 231h1M90 140h1M405 148h1M456 355h1M114 230h1M489 374h1M178 388h1M153 3h1M133 187h1M500 266h1M243 318h1M379 267h1M348 410h1M390 129h1M18 284h1M205 0h1M265 29h1M182 156h1M281 165h1M261 123h1M271 427h1M448 46h1M505 45h1M206 65h1M433 405h1M297 316h1M380 22h1M453 192h1M375 21h1M302 208h1M441 331h1M262 180h1M244 197h1M132 316h1M196 364h1M381 32h1M208 168h1M72 40h1M456 194h1M402 269h1M424 254h1M26 55h1M473 236h1M446 212h1M484 90h1M66 225h1M407 251h1M138 262h1M9 343h1M237 379h1M205 205h1M41 348h1M301 283h1M338 393h1M396 394h1M470 60h1M92 113h1M78 292h1M15 52h1M508 45h1M220 288h1M465 28h1M204 364h1M343 247h1M56 281h1M427 298h1M143 208h1M51 320h1M149 164h1M342 97h1M6 95h1M281 266h1M268 44h1M320 196h1M261 339h1M305 284h1M404 261h1M430 348h1M52 157h1M311 127h1M389 410h1M446 276h1M263 156h1M206 67h1M53 106h1M382 237h1M500 363h1M144 187h1M349 102h1M467 361h1M52 373h1M321 4h1M69 209h1M331 18h1M280 112h1M449 149h1M205 363h1M214 410h1M465 207h1M455 104h1M208 29h1M184 222h1M127 25h1M140 36h1M509 92h1M14 369h1M168 255h1M226 345h1M301 410h1M216 273h1M162 74h1M211 264h1M103 238h1M97 103h1M93 25h1M424 114h1M263 361h1M453 351h1M434 79h1M58 356h1M136 21h1M163 428h1M457 150h1M238 298h1M326 361h1M157 158h1M264 166h1M219 77h1M236 200h1M33 167h1M389 79h1M298 114h1M95 101h1M475 76h1M188 220h1M341 347h1M411 58h1M39 424h1M360 62h1M215 335h1M74 148h1M501 178h1M18 384h1M508 47h1M205 248h1M286 155h1M90 103h1M143 240h1M277 393h1M232 296h1M307 16h1M103 0h1M352 99h1M155 336h1M307 25h1M176 170h1M358 230h1M492 126h1M337 380h1M372 91h1M112 403h1M305 414h1M71 370h1M465 48h1M115 403h1M165 304h1M402 236h1M36 17h1M40 262h1M99 211h1M135 212h1M361 39h1M383 372h1M167 184h1M173 339h1M92 169h1M5 330h1M491 155h1M152 133h1M96 54h1M244 59h1M156 254h1M276 274h1M120 166h1M479 125h1M167 291h1M43 259h1M262 187h1M202 145h1M413 284h1M208 65h1M245 372h1M513 122h1M97 7h1M108 27h1M500 405h1M215 352h1M234 44h1M175 78h1M270 15h1M434 201h1M112 149h1M123 43h1M222 119h1M249 304h1M63 420h1M251 37h1M345 50h1M42 110h1M178 417h1M310 175h1M86 415h1M472 303h1M187 5h1M325 210h1M416 16h1M90 403h1M250 75h1M523 347h1M171 77h1M352 394h1M143 104h1M202 112h1M339 362h1M68 1h1M491 19h1M509 269h1M337 35h1M64 101h1M51 187h1M357 298h1M166 411h1M504 344h1M508 69h1M265 424h1M310 27h1M477 426h1M168 222h1M395 422h1M525 153h1M118 34h1M258 384h1M237 122h1M202 300h1M468 287h1M242 252h1M51 200h1M404 406h1M350 422h1M388 207h1M89 116h1M347 339h1M436 405h1M312 2h1M307 250h1M16 56h1M486 214h1M420 309h1M306 234h1M149 171h1M218 42h1M362 201h1M477 317h1M33 149h1M343 45h1M277 95h1M452 208h1M247 61h1M221 349h1M42 192h1M188 199h1M277 170h1M154 185h1M171 114h1M359 417h1M403 157h1M511 163h1M518 404h1M193 425h1M166 200h1M9 0h1M179 53h1M251 232h1M256 377h1M360 346h1M103 282h1M526 341h1M385 69h1M259 341h1M426 38h1M526 319h1M339 227h1M272 151h1M370 156h1M384 267h1M61 335h1M510 252h1M372 354h1M18 29h1M121 285h1M386 229h1M318 384h1M524 77h1M469 17h1M333 247h1M140 3h1M277 73h1M192 300h1M520 23h1M401 88h1M287 321h1M247 149h1M26 215h1M417 332h1M86 412h1M389 252h1M368 353h1M284 165h1M165 426h1M507 422h1M49 406h1M355 71h1M205 264h1M63 83h1M315 378h1M174 348h1M319 27h1M304 196h1M368 355h1M191 139h1M316 243h1M202 317h1M328 224h1M412 55h1M266 185h1M403 163h1M394 406h1M483 136h1M115 104h1M461 256h1M418 326h1M163 398h1M322 22h1M155 142h1M481 338h1M421 385h1M78 140h1M401 185h1M405 271h1M295 322h1M124 132h1M460 394h1M12 21h1M312 181h1M368 135h1M249 35h1M98 385h1M422 427h1M113 157h1M169 330h1M180 370h1M120 396h1M413 201h1M349 204h1M401 255h1M344 179h1M190 364h1M146 272h1M423 342h1M295 68h1M218 173h1M67 211h1M68 257h1M3 293h1M241 295h1M442 206h1M219 293h1M280 402h1M135 77h1M227 343h1M244 256h1M127 144h1M34 380h1M390 147h1M134 331h1M393 313h1M281 364h1M68 395h1M521 139h1M218 114h1M316 48h1M368 346h1M80 184h1M23 358h1M73 62h1M332 111h1M3 234h1M142 228h1M281 257h1M60 228h1M33 20h1M478 56h1M495 114h1M301 322h1M348 169h1M235 111h1M213 144h1M31 114h1M177 14h1M516 137h1M434 191h1M64 322h1M280 370h1M91 299h1M115 204h1M399 262h1M418 115h1M56 411h1M380 272h1M337 336h1M257 36h1M489 294h1M136 220h1M464 349h1M465 97h1M349 315h1M194 57h1M412 84h1M289 388h1M198 39h1M16 224h1M202 404h1M201 395h1M271 103h1M303 382h1M23 378h1M16 32h1M362 105h1M427 6h1M270 285h1M363 321h1M167 289h1M323 181h1M313 53h1M45 378h1M179 353h1M363 215h1M30 411h1M465 395h1M104 175h1M109 78h1M372 398h1M482 248h1M84 172h1M326 243h1M131 55h1M257 260h1M398 107h1M362 128h1M21 98h1M284 417h1M447 396h1M393 82h1M447 68h1M141 6h1M113 109h1M388 14h1M9 416h1M88 237h1M44 104h1M72 165h1M346 319h1M472 248h1M249 104h1M363 195h1M106 50h1M129 102h1M450 233h1M450 389h1M69 291h1M55 240h1M173 204h1M245 367h1M480 354h1M483 310h1M145 60h1M509 306h1M390 32h1M244 409h1M234 2h1M401 289h1M229 324h1M39 124h1M96 102h1M0 19h1M477 24h1M411 123h1M224 396h1M45 284h1M423 134h1M42 78h1M479 9h1M490 387h1M106 388h1M98 95h1M146 413h1M166 315h1M524 165h1M108 261h1M390 1h1M73 15h1M87 257h1M79 361h1M55 338h1M297 234h1M406 343h1M7 286h1M213 12h1M191 424h1M519 415h1M468 106h1M125 362h1M212 343h1M439 56h1M88 279h1M96 44h1M244 51h1M91 188h1M280 154h1M316 390h1M302 75h1M505 310h1M342 393h1M196 3h1M80 38h1M44 58h1M219 266h1M394 233h1M417 312h1M215 388h1M81 11h1M60 366h1M31 343h1M138 220h1M56 92h1M300 226h1M261 361h1M137 129h1M307 178h1M29 166h1M391 48h1M166 226h1M166 334h1M484 390h1M333 140h1M255 6h1M422 275h1M21 174h1M236 278h1M365 417h1M336 0h1M244 175h1M81 272h1M165 53h1M36 422h1M321 217h1M345 187h1M65 275h1M124 234h1M164 108h1M54 332h1M250 208h1M91 331h1M217 111h1M294 386h1M13 365h1M266 220h1M121 90h1M448 314h1M170 353h1M291 385h1M400 127h1M349 131h1M28 46h1M214 328h1M265 316h1M145 335h1M71 306h1M69 355h1M400 155h1M79 32h1M68 274h1M14 37h1M370 38h1M145 285h1M115 369h1M505 331h1M522 352h1M280 393h1M460 91h1M102 130h1M310 202h1M418 356h1M177 227h1M97 235h1M350 165h1M210 15h1M397 424h1M231 54h1M213 411h1M359 343h1M343 142h1M10 97h1M74 45h1M161 400h1M319 338h1M269 92h1M46 73h1M492 49h1M58 196h1M91 291h1M228 31h1M66 151h1M15 137h1M133 181h1M372 277h1M180 70h1M378 403h1M257 189h1M114 127h1M169 146h1M389 391h1M30 114h1M198 112h1M393 187h1M246 328h1M483 134h1M7 25h1M101 339h1M386 428h1M378 120h1M288 15h1M483 224h1M499 59h1M112 235h1M503 47h1M414 60h1M496 245h1M177 118h1M436 225h1M62 60h1M272 184h1M454 240h1M244 173h1M58 36h1M521 113h1M495 381h1M221 288h1M385 56h1M61 221h1M57 122h1M174 261h1M323 108h1M103 42h1M488 135h1M479 235h1M134 38h1M463 323h1M325 50h1M210 143h1M369 34h1M122 360h1M486 246h1M263 92h1M521 5h1M527 12h1M481 351h1M32 275h1M239 395h1M510 340h1M142 333h1M373 74h1M396 411h1M329 379h1M42 188h1M186 358h1M232 8h1M469 370h1M83 230h1M222 18h1M292 224h1M143 429h1M196 155h1M321 298h1M204 33h1M411 12h1M169 6h1M368 247h1M238 33h1M488 191h1M523 380h1M503 344h1M217 318h1M221 98h1M481 103h1M317 401h1M467 138h1M231 386h1M329 16h1M416 90h1M351 211h1M23 291h1M382 394h1M165 122h1M0 79h1M264 310h1M465 243h1M395 70h1M267 123h1M123 140h1M426 76h1M140 267h1M138 297h1M328 385h1M58 85h1M239 216h1M171 41h1M463 404h1M418 129h1M228 77h1M275 364h1M417 48h1M52 223h1M106 8h1M296 36h1M295 385h1M179 70h1M430 37h1M385 153h1M525 298h1M119 228h1M249 255h1M197 223h1M77 303h1M259 292h1M391 92h1M261 329h1M242 210h1M375 268h1M263 346h1M75 358h1M58 319h1M335 409h1M9 227h1M486 174h1M184 238h1M332 402h1M238 220h1M91 106h1M418 205h1M137 382h1M238 189h1M368 194h1M506 392h1M373 65h1M227 327h1M220 136h1M115 18h1M522 69h1M415 315h1M430 330h1M79 240h1M465 170h1M364 176h1M447 161h1M179 415h1M493 354h1M18 346h1M164 201h1M378 59h1M299 427h1M208 324h1M254 360h1M201 189h1M308 332h1M261 83h1M66 307h1M465 340h1M46 101h1M15 304h1M422 371h1M278 14h1M71 408h1M4 428h1M177 43h1M254 2h1M177 117h1M178 135h1M242 9h1M24 58h1M84 45h1M203 76h1M481 171h1M75 267h1M357 163h1M298 213h1M490 132h1M341 28h1M85 135h1M166 135h1M93 32h1M53 356h1M269 67h1M336 174h1M513 251h1M144 96h1M52 384h1M157 429h1M432 197h1M302 367h1M17 117h1M318 408h1M73 410h1M483 48h1M67 300h1M155 97h1M463 411h1M479 405h1M236 318h1M95 422h1M483 289h1M445 70h1M13 98h1M220 55h1M468 123h1M264 256h1M433 267h1M339 370h1M58 15h1M234 370h1M24 113h1M525 148h1M216 327h1M465 314h1M196 94h1M209 159h1M267 67h1M161 31h1M231 237h1M347 423h1M317 203h1M323 267h1M313 28h1M323 45h1M300 25h1M332 263h1M242 77h1M179 322h1M251 236h1M30 101h1M328 61h1M518 367h1M371 351h1M487 270h1M318 397h1M76 54h1M71 319h1M396 223h1M495 34h1M258 411h1M525 113h1M460 162h1M488 364h1M428 394h1M380 273h1M457 399h1M322 316h1M52 53h1M466 44h1M285 68h1M38 285h1M132 32h1M477 350h1M35 153h1M70 384h1M348 223h1M87 74h1M403 357h1M96 366h1M52 16h1M294 393h1M138 271h1M109 358h1M72 161h1M167 419h1M416 86h1M245 88h1M396 391h1M436 362h1M346 185h1M126 124h1M469 282h1M119 46h1M265 379h1M395 242h1M231 94h1M295 388h1M476 201h1M206 375h1M132 383h1M198 251h1M109 416h1M525 173h1M253 14h1M261 262h1M480 416h1M152 315h1M328 160h1M176 373h1M349 349h1M192 337h1M428 28h1M0 118h1M352 5h1M260 310h1M40 19h1M334 116h1M325 419h1M272 187h1M308 191h1M361 201h1M387 145h1M112 116h1M12 346h1M420 387h1M53 372h1M175 386h1M154 416h1M314 129h1M516 335h1M333 194h1M447 429h1M314 68h1M245 276h1M344 343h1M56 176h1M176 163h1M142 381h1M466 173h1M481 400h1M472 400h1M219 373h1M348 184h1M255 32h1M102 60h1M334 13h1M26 116h1M378 36h1M69 254h1M53 101h1M473 327h1M411 159h1M488 193h1M317 326h1M481 163h1M353 375h1M319 378h1M360 293h1M108 307h1M70 247h1M456 213h1M12 340h1M232 106h1M213 185h1M371 337h1M127 335h1M35 236h1M442 12h1M134 219h1M94 94h1M297 420h1M527 403h1M365 51h1M227 406h1M59 112h1M375 377h1M443 80h1M389 326h1M78 213h1M206 167h1M309 168h1M527 374h1M191 251h1M512 5h1M146 309h1M387 425h1M168 93h1M17 332h1M115 291h1M370 27h1M56 106h1M517 11h1M514 365h1M220 261h1M473 79h1M218 73h1M156 323h1M448 411h1M31 217h1M139 308h1M265 309h1M282 119h1M430 110h1M479 27h1M94 396h1M5 410h1M348 367h1M169 383h1M242 275h1M261 118h1M179 118h1M179 103h1M112 383h1M473 364h1M221 139h1M434 261h1M53 250h1M1 226h1M88 35h1M425 72h1M175 327h1M221 278h1M344 209h1M251 101h1M233 82h1M419 182h1M446 155h1M317 82h1M223 228h1M87 72h1M197 301h1M323 63h1M516 151h1M188 213h1M491 225h1M497 242h1M283 241h1M202 241h1M521 74h1M512 86h1M238 37h1M360 359h1M392 35h1M413 51h1M362 375h1M435 171h1M360 360h1M401 330h1M155 238h1M6 21h1M488 181h1M521 322h1M411 221h1M305 80h1M4 351h1M148 320h1M374 347h1M408 405h1M334 302h1M224 174h1M160 281h1M186 146h1M118 69h1M27 315h1M330 412h1M507 140h1M372 266h1M20 179h1M332 327h1M488 59h1M340 130h1M396 312h1M266 8h1M379 409h1M397 34h1M371 414h1M12 141h1M340 147h1M506 82h1M386 11h1M77 98h1M214 30h1M143 75h1M318 116h1M224 29h1M447 135h1M124 375h1M109 73h1M91 395h1M152 222h1M197 20h1M508 373h1M395 216h1M95 322h1M183 305h1M129 154h1M39 43h1M57 82h1M127 19h1M22 167h1M172 57h1M474 82h1M109 92h1M202 311h1M366 344h1M202 184h1M123 222h1M333 200h1M456 119h1M494 12h1M179 84h1M184 77h1M359 320h1M34 400h1M450 280h1M14 231h1M449 11h1M345 338h1M405 261h1M151 24h1M145 254h1M179 352h1M392 80h1M4 256h1M527 2h1M370 212h1M193 291h1M389 372h1M418 170h1M491 296h1M165 161h1M385 97h1M275 108h1M4 296h1M334 162h1M268 410h1M344 81h1M500 140h1M84 251h1M47 76h1M438 389h1M84 293h1M424 150h1M519 218h1M4 44h1M136 52h1M385 141h1M116 310h1M445 226h1M262 41h1M459 332h1M377 49h1M36 252h1M306 109h1M66 335h1M264 142h1M379 105h1M520 256h1M436 393h1M284 233h1M325 205h1M484 60h1M47 383h1M148 415h1M302 27h1M134 180h1M385 127h1M265 417h1M518 17h1M455 244h1M26 44h1M83 405h1M35 110h1M475 307h1M480 367h1M82 373h1M297 175h1M189 69h1M122 330h1M190 429h1M512 133h1M344 84h1M167 114h1M485 402h1M229 128h1M265 31h1M226 82h1M309 394h1M392 272h1M454 108h1M100 213h1M480 412h1M320 349h1M61 381h1M392 118h1M474 246h1M200 132h1M164 266h1M122 283h1M325 207h1M171 70h1M481 240h1M504 137h1M376 50h1M509 390h1M336 83h1M351 48h1M376 194h1M114 71h1M510 298h1M289 169h1M394 295h1M182 160h1M29 162h1M209 234h1M126 145h1M466 322h1M378 288h1M371 246h1M202 278h1M179 184h1M192 309h1M194 153h1M300 363h1M250 363h1M65 215h1M10 107h1M72 105h1M527 259h1M120 385h1M242 342h1M113 350h1M293 51h1M197 347h1M1 136h1M50 218h1M89 143h1M320 291h1M9 263h1M425 179h1M185 6h1M207 91h1M229 52h1M215 62h1M273 299h1M527 165h1M393 207h1M27 34h1M434 56h1M276 263h1M151 219h1M372 338h1M22 13h1M55 218h1M394 82h1M380 371h1M374 282h1M136 183h1M378 130h1M145 83h1M161 77h1M152 56h1M127 81h1M316 257h1M98 286h1M508 211h1M474 278h1M15 372h1M59 120h1M432 71h1M242 387h1M5 123h1M365 123h1M94 427h1M488 301h1M396 219h1M343 243h1M42 113h1M50 231h1M515 122h1M38 309h1M185 101h1M71 133h1M84 396h1M339 386h1M90 173h1M80 216h1M315 37h1M457 125h1M158 88h1M312 221h1M332 54h1M525 219h1M169 300h1M46 254h1M125 376h1M160 419h1M59 145h1M519 20h1M343 24h1M104 266h1M195 261h1M414 86h1M234 342h1M214 221h1M265 338h1M464 46h1M245 239h1M3 359h1M228 338h1M407 51h1M203 208h1M294 186h1M343 127h1M272 338h1M338 113h1M38 205h1M426 352h1M441 35h1M159 43h1M72 29h1M196 134h1M102 195h1M514 348h1M500 129h1M198 50h1M507 288h1M458 149h1M64 301h1M484 64h1M144 34h1M495 223h1M130 337h1M25 357h1M189 296h1M46 404h1M76 57h1M329 122h1M55 113h1M274 178h1M174 356h1M375 208h1M283 82h1M448 224h1M183 1h1M135 46h1M441 120h1M159 337h1M266 367h1M119 58h1M389 47h1M226 1h1M156 21h1M362 43h1M313 302h1M325 383h1M452 329h1M201 159h1M209 247h1M345 64h1M382 181h1M522 286h1M284 337h1M514 65h1M515 11h1M428 220h1M189 22h1M300 141h1M121 394h1M456 399h1M383 264h1M487 127h1M523 277h1M384 278h1M297 150h1M411 424h1M32 419h1M262 247h1M328 374h1M218 373h1M462 183h1M313 232h1M368 44h1M369 375h1M212 422h1M239 401h1M442 335h1M261 325h1M375 355h1M17 139h1M62 174h1M369 209h1M33 223h1M312 411h1M234 174h1M345 241h1M111 368h1M190 249h1M104 189h1M498 22h1M134 173h1M430 224h1M295 215h1M159 160h1M157 328h1M187 364h1M161 180h1M287 31h1M251 169h1M37 88h1M434 98h1M155 395h1M383 260h1M122 57h1M278 225h1M522 203h1M261 10h1M401 199h1M190 194h1M11 376h1M380 58h1M328 170h1M129 347h1M35 319h1M192 105h1M20 296h1M237 150h1M100 102h1M246 119h1M482 300h1M329 62h1M37 292h1M333 264h1M92 261h1M471 62h1M243 108h1M451 159h1M426 185h1M15 116h1M118 169h1M409 123h1M432 124h1M341 300h1M246 193h1M38 266h1M311 137h1M480 397h1M490 239h1M13 27h1M389 236h1M233 306h1M179 398h1M480 280h1M396 81h1M107 133h1M450 46h1M318 236h1M217 354h1M2 34h1M95 46h1M188 188h1M4 221h1M420 259h1M466 148h1M356 264h1M377 365h1M173 51h1M522 270h1M505 58h1M380 148h1M214 112h1M396 183h1M343 308h1M280 145h1M86 316h1M378 58h1M374 336h1M335 70h1M336 345h1M116 173h1M165 213h1M23 184h1M227 205h1M3 82h1M202 340h1M457 184h1M415 132h1M238 88h1M468 84h1M383 417h1M59 14h1M385 112h1M328 349h1M43 254h1M483 410h1M202 277h1M177 34h1M178 355h1M190 132h1M513 69h1M175 337h1M521 160h1M297 281h1M137 366h1M494 375h1M113 68h1M280 158h1M308 347h1M205 279h1M453 380h1M327 290h1M129 385h1M372 252h1M459 281h1M168 420h1M60 334h1M109 41h1M33 303h1M524 372h1M151 136h1M71 90h1M23 8h1M235 225h1M89 425h1M464 272h1M244 93h1M207 160h1M346 308h1M26 67h1M344 190h1M67 36h1M23 319h1M123 25h1M163 359h1M299 343h1M285 153h1M89 104h1M450 308h1M287 283h1M5 415h1M60 374h1M293 116h1M315 46h1M495 313h1M146 195h1M475 192h1M466 424h1M201 112h1M287 138h1M522 126h1M136 355h1M312 202h1M46 114h1M97 111h1M450 404h1M377 236h1M522 178h1M513 248h1M27 319h1M365 205h1M214 81h1M355 254h1M415 80h1M157 217h1M188 241h1M518 107h1M202 334h1M254 180h1M96 135h1M282 178h1M124 246h1M288 192h1M222 161h1M447 413h1M1 408h1M309 130h1M141 282h1M128 358h1M174 149h1M97 402h1M445 417h1M478 223h1M447 96h1M103 79h1M421 88h1M521 76h1M325 113h1M444 198h1M284 76h1M102 93h1M194 82h1M486 300h1M197 225h1M515 248h1M101 8h1M204 227h1M39 392h1M104 275h1M445 111h1M313 322h1M233 293h1M176 331h1M355 190h1M106 245h1M66 329h1M161 353h1M314 78h1M258 281h1M103 30h1M51 101h1M254 105h1M86 130h1M258 426h1M88 134h1M501 93h1M256 0h1M307 236h1M228 190h1M248 403h1M423 58h1M228 4h1M117 168h1M110 231h1M502 399h1M23 115h1M214 179h1M37 160h1M397 210h1M401 114h1M319 213h1M74 316h1M524 383h1M451 346h1M447 299h1M487 140h1M182 423h1M416 420h1M417 108h1M50 286h1M220 236h1M250 285h1M520 60h1M81 350h1M377 220h1M9 6h1M265 321h1M499 323h1M161 98h1M481 418h1M134 153h1M444 364h1M209 73h1M402 336h1M2 336h1M303 11h1M391 226h1M332 266h1M237 172h1M69 65h1M49 343h1M80 146h1M44 404h1M302 156h1M166 59h1M93 374h1M69 153h1M25 398h1M377 360h1M183 315h1M404 325h1M513 378h1M424 62h1M120 267h1M475 153h1M498 227h1M392 54h1M445 116h1M389 102h1M329 245h1M387 201h1M285 427h1M112 300h1M43 333h1M459 134h1M207 78h1M451 199h1M282 185h1M156 308h1M175 217h1M152 139h1M243 62h1M17 213h1M83 17h1M455 339h1M310 300h1M450 363h1M64 52h1M111 207h1M308 259h1M19 415h1M384 186h1M129 408h1M484 45h1M16 13h1M154 257h1M227 326h1M83 417h1M92 283h1M199 309h1M72 70h1M296 420h1M426 225h1M257 300h1M246 160h1M48 288h1M99 278h1M418 156h1M59 57h1M102 219h1M65 292h1M220 300h1M284 346h1M508 148h1M191 294h1M447 10h1M288 233h1M333 153h1M281 326h1M521 43h1M96 410h1M507 174h1M234 188h1M117 162h1M520 426h1M515 149h1M315 191h1M253 211h1M525 140h1M246 222h1M476 131h1M208 69h1M131 414h1M15 40h1M263 360h1M265 353h1M198 204h1M473 89h1M98 153h1M106 94h1M487 328h1M429 22h1M195 200h1M400 350h1M435 100h1M383 341h1M292 206h1M409 263h1M405 96h1M399 72h1M345 284h1M476 18h1M83 123h1M77 366h1M176 426h1M368 400h1M274 403h1M470 243h1M340 159h1M377 409h1M188 279h1M181 87h1M90 79h1M217 244h1M344 52h1M158 73h1M229 415h1M336 147h1M309 42h1M273 105h1M404 6h1M445 112h1M389 238h1M12 225h1M384 402h1M0 48h1M233 206h1M259 123h1M24 303h1M101 236h1M429 297h1M516 46h1M252 229h1M293 109h1M59 190h1M32 63h1M21 321h1M496 281h1M149 416h1M408 79h1M473 136h1M354 204h1M164 97h1M92 362h1M343 306h1M444 99h1M296 290h1M333 24h1M512 190h1M519 52h1M39 170h1M260 361h1M266 339h1M280 220h1M456 230h1M472 239h1M325 56h1M179 414h1M116 127h1M130 107h1M138 107h1M504 341h1M342 96h1M341 372h1M456 246h1M47 323h1M177 416h1M59 89h1M456 38h1M68 231h1M31 9h1M492 380h1M421 258h1M88 211h1M237 70h1M51 300h1M420 121h1M347 156h1M503 212h1M404 29h1M517 4h1M330 19h1M441 103h1M226 171h1M12 13h1M96 28h1M433 428h1M501 357h1M504 191h1M101 299h1M387 297h1M323 6h1M392 321h1M267 209h1M67 255h1M384 53h1M503 50h1M414 337h1M104 254h1M442 409h1M516 306h1M25 59h1M480 392h1M311 23h1M431 340h1M283 342h1M2 422h1M485 126h1M359 295h1M479 193h1M105 151h1M53 169h1M314 278h1M240 422h1M409 289h1M29 220h1M471 282h1M149 319h1M489 155h1M46 360h1M296 341h1M14 75h1M328 363h1M61 391h1M250 15h1M168 409h1M268 121h1M390 428h1M231 381h1M333 314h1M145 412h1M103 126h1M449 264h1M394 177h1M157 411h1M459 89h1M295 189h1M19 270h1M277 407h1M504 26h1M125 83h1M0 203h1M65 167h1M337 36h1M159 194h1M137 155h1M41 297h1M124 410h1M470 259h1M146 249h1M123 110h1M157 414h1M314 117h1M1 27h1M264 49h1M186 395h1M448 324h1M335 426h1M132 94h1M321 361h1M402 350h1M148 346h1M458 141h1M257 309h1M187 69h1M380 77h1M248 355h1M20 344h1M124 103h1M313 392h1M6 156h1M330 50h1M288 395h1M477 412h1M163 226h1M109 47h1M357 205h1M184 82h1M212 37h1M6 46h1M410 42h1M128 126h1M464 339h1M53 209h1M460 59h1M31 203h1M348 102h1M247 300h1M446 365h1M355 401h1M370 358h1M130 197h1M68 149h1M428 144h1M298 378h1M120 109h1M447 166h1M455 144h1M192 326h1M492 155h1M388 318h1M91 60h1M460 32h1M454 218h1M262 253h1M264 202h1M105 118h1M514 358h1M160 261h1M442 97h1M6 246h1M391 427h1M351 192h1M126 285h1M86 200h1M159 157h1M420 263h1M131 147h1M332 228h1M479 147h1M489 313h1M142 88h1M260 327h1M512 8h1M423 363h1M25 140h1M508 191h1M218 218h1M20 239h1M420 372h1M201 357h1M94 45h1M226 158h1M384 103h1M424 190h1M465 324h1M443 187h1M398 55h1M231 35h1M315 265h1M117 298h1M457 389h1M423 338h1M359 292h1M428 323h1M175 122h1M519 277h1M436 168h1M256 197h1M322 252h1M456 19h1M511 288h1M523 105h1M54 416h1M162 28h1M354 152h1M80 110h1M242 255h1M305 226h1M419 272h1M78 21h1M67 88h1M212 352h1M94 194h1M156 270h1M309 185h1M68 72h1M332 335h1M438 114h1M127 22h1M80 249h1M332 17h1M412 320h1M285 190h1M273 95h1M478 92h1M163 417h1M464 366h1M355 388h1M137 305h1M402 390h1M66 97h1M310 185h1M280 272h1M241 327h1M102 284h1M342 196h1M236 317h1M326 6h1M441 400h1M380 154h1M511 118h1M225 152h1M213 370h1M358 287h1M489 293h1M364 417h1M10 294h1M30 301h1M397 322h1M322 254h1M213 222h1M214 250h1M37 240h1M223 167h1M483 398h1M0 355h1M265 149h1M140 325h1M453 410h1M210 145h1M503 306h1M188 373h1M202 159h1M407 175h1M22 49h1M303 178h1M197 295h1M150 88h1M423 374h1M292 59h1M382 384h1M151 49h1M310 128h1M527 211h1M276 328h1M465 145h1M351 130h1M13 113h1M328 399h1M203 408h1M440 134h1M350 12h1M316 144h1M13 262h1M278 70h1M217 187h1M119 326h1M376 175h1M122 260h1M184 218h1M256 44h1M456 255h1M312 187h1M43 175h1M430 318h1M268 287h1M185 243h1M510 168h1M137 125h1M264 311h1M100 120h1M253 126h1M34 100h1M243 66h1M506 179h1M510 191h1M59 98h1M236 217h1M487 96h1M46 364h1M351 21h1M87 140h1M357 60h1M497 76h1M525 270h1M178 406h1M98 264h1M152 192h1M129 155h1M222 298h1M342 240h1M80 245h1M346 402h1M407 106h1M352 10h1M503 250h1M205 101h1M514 60h1M471 396h1M229 307h1M102 172h1M153 52h1M195 401h1M325 185h1M80 210h1M106 384h1M44 152h1M393 412h1M473 241h1M276 415h1M350 154h1M25 96h1M501 90h1M81 104h1M352 346h1M435 96h1M65 342h1M84 270h1M44 310h1M129 8h1M499 224h1M259 140h1M29 210h1M277 270h1M42 138h1M139 236h1M212 378h1M214 124h1M150 14h1M276 67h1M498 211h1M370 1h1M445 214h1M58 259h1M106 255h1M43 207h1M139 252h1M503 89h1M148 398h1M524 206h1M134 257h1M430 142h1M272 43h1M470 331h1M372 291h1M100 261h1M524 93h1M220 70h1M16 47h1M336 118h1M320 116h1M126 24h1M428 92h1M35 47h1M489 247h1M216 388h1M417 154h1M211 73h1M474 397h1M481 85h1M43 176h1M342 60h1M215 225h1M109 60h1M342 331h1M151 350h1M48 335h1M275 301h1M7 252h1M431 293h1M54 66h1M337 218h1M431 34h1M442 122h1M370 264h1M400 75h1M437 133h1M380 152h1M92 225h1M17 165h1M116 202h1M507 229h1M179 303h1M122 187h1M37 122h1M15 77h1M52 363h1M292 238h1M331 29h1M240 428h1M246 229h1M260 422h1M480 227h1M396 59h1M239 95h1M374 58h1M357 303h1M470 74h1M61 217h1M220 35h1M455 340h1M484 403h1M133 51h1M8 215h1M418 127h1M515 367h1M124 300h1M234 225h1M350 111h1M332 46h1M450 313h1M186 372h1M338 372h1M66 167h1M19 56h1M256 210h1M179 326h1M512 175h1M34 229h1M127 164h1M210 87h1M313 274h1M152 263h1M273 130h1M282 228h1M159 150h1M268 359h1M449 108h1M196 227h1M134 109h1M340 88h1M404 419h1M312 206h1M486 202h1M158 396h1M373 24h1M435 423h1M256 90h1M341 349h1M211 195h1M278 422h1M138 65h1M368 357h1M471 262h1M211 70h1M181 329h1M344 348h1M271 1h1M443 95h1M70 133h1M93 108h1M111 421h1M303 281h1M511 167h1M254 149h1M286 403h1M354 346h1M55 357h1M116 293h1M45 11h1M168 289h1M264 270h1M80 420h1M440 98h1M247 250h1M349 232h1M47 156h1M262 392h1M120 203h1M364 400h1M304 363h1M103 382h1M203 412h1M331 144h1M280 139h1M88 119h1M44 43h1M391 179h1M191 334h1M446 173h1M275 126h1M168 322h1M522 151h1M183 295h1M113 283h1M178 15h1M247 188h1M526 263h1M487 69h1M479 84h1M42 190h1M88 9h1M325 428h1M146 13h1M61 400h1M188 65h1M311 150h1M111 259h1M161 406h1M418 332h1M159 277h1M302 163h1M179 68h1M459 84h1M456 206h1M184 64h1M138 282h1M331 282h1M245 206h1M378 409h1M89 270h1M337 310h1M467 382h1M96 391h1M120 290h1M261 312h1M99 77h1M336 164h1M417 9h1M100 51h1M184 361h1M431 407h1M266 162h1M56 74h1M280 354h1M127 190h1M355 175h1M157 425h1M467 235h1M44 173h1M311 164h1M525 51h1M322 28h1M361 364h1M413 350h1M364 389h1M371 230h1M280 70h1M72 410h1M312 321h1M86 355h1M199 336h1M440 20h1M41 414h1M289 283h1M184 210h1M92 68h1M255 52h1M142 344h1M452 328h1M1 121h1M52 115h1M10 370h1M242 386h1M156 193h1M152 80h1M407 245h1M284 2h1M237 348h1M323 155h1M498 408h1M35 186h1M446 64h1M461 66h1M339 333h1M7 364h1M501 282h1M152 4h1M345 244h1M407 190h1M28 332h1M505 23h1M126 240h1M78 45h1M409 164h1M238 133h1M458 331h1M80 227h1M455 296h1M315 271h1M355 249h1M222 422h1M441 38h1M423 63h1M521 176h1M129 277h1M432 341h1M213 122h1M226 123h1M227 174h1M23 205h1M280 146h1M57 7h1M428 153h1M398 305h1M307 389h1M173 241h1M465 237h1M292 205h1M41 49h1M477 315h1M330 95h1M519 14h1M500 89h1M236 138h1M378 377h1M113 168h1M6 297h1M361 178h1M396 306h1M115 173h1M338 367h1M337 417h1M312 72h1M180 404h1M23 301h1M64 236h1M321 112h1M513 53h1M2 191h1M220 209h1M264 169h1M259 273h1M26 38h1M270 356h1M369 37h1M391 294h1M262 420h1M18 177h1M426 12h1M302 130h1M16 188h1M50 297h1M60 121h1M469 48h1M346 36h1M260 178h1M100 73h1M79 379h1M469 230h1M241 91h1M281 265h1M348 419h1M485 342h1M256 209h1M203 43h1M25 277h1M58 74h1M449 175h1M189 209h1M421 302h1M303 219h1M197 1h1M94 422h1M135 65h1M261 226h1M178 365h1M5 386h1M27 306h1M373 163h1M18 30h1M441 134h1M242 123h1M108 230h1M214 38h1M235 55h1M235 114h1M101 224h1M115 166h1M445 161h1M486 83h1M411 241h1M161 165h1M389 407h1M458 94h1M103 347h1M99 231h1M505 53h1M75 382h1M246 342h1M379 65h1M85 313h1M422 241h1M483 193h1M140 312h1M433 254h1M190 237h1M294 281h1M97 307h1M163 168h1M381 114h1M242 126h1M456 353h1M400 257h1M506 223h1M146 104h1M233 176h1M339 33h1M72 156h1M120 243h1M184 381h1M473 322h1M479 0h1M412 36h1M37 266h1M442 96h1M27 269h1M129 103h1M352 211h1M333 107h1M366 332h1M197 277h1M269 103h1M4 127h1M328 381h1M512 29h1M37 341h1M306 7h1M111 12h1M399 268h1M431 382h1M448 182h1M16 325h1M462 72h1M475 160h1M273 392h1M479 10h1M294 174h1M357 9h1M69 394h1M74 226h1M4 268h1M427 57h1M491 414h1M93 405h1M123 137h1M13 199h1M95 272h1M240 202h1M226 61h1M332 311h1M1 352h1M424 355h1M169 271h1M8 42h1M180 384h1M238 115h1M178 166h1M349 200h1M61 177h1M445 340h1M131 256h1M508 101h1M311 266h1M7 392h1M207 172h1M423 105h1M461 359h1M237 158h1M42 173h1M397 293h1M235 208h1M394 39h1M93 49h1M108 159h1M126 248h1M49 367h1M89 374h1M32 105h1M37 369h1M128 422h1M232 317h1M430 202h1M244 137h1M353 76h1M347 323h1M468 88h1M459 135h1M521 238h1M60 154h1M223 276h1M232 246h1M308 295h1M375 332h1M0 375h1M129 37h1M164 253h1M164 3h1M265 187h1M391 419h1M210 247h1M2 416h1M266 351h1M249 166h1M138 212h1M269 184h1M334 165h1M150 9h1M517 428h1M316 377h1M504 339h1M2 332h1M238 41h1M483 234h1M210 426h1M495 69h1M125 256h1M464 287h1M120 2h1M327 94h1M194 321h1M387 271h1M70 336h1M16 100h1M304 38h1M118 87h1M454 177h1M118 102h1M390 142h1M202 133h1M414 293h1M118 344h1M426 119h1M259 195h1M420 51h1M434 407h1M188 83h1M139 142h1M153 327h1M145 268h1M214 252h1M173 105h1M247 94h1M150 200h1M78 240h1M358 355h1M326 335h1M89 112h1M65 302h1M18 13h1M96 294h1M82 53h1M378 123h1M431 271h1M348 191h1M405 289h1M433 286h1M166 394h1M45 153h1M209 110h1M168 291h1M407 225h1M236 220h1M480 113h1M73 250h1M437 211h1M274 371h1M308 223h1M270 363h1M507 356h1M44 228h1M509 183h1M512 13h1M481 83h1M315 152h1" stroke="#161616"/><path d="M107 250h1M495 38h1M72 87h1M449 227h1M356 244h1M512 141h1M346 198h1M136 234h1M18 320h1M88 187h1M288 76h1M360 398h1M327 164h1M422 252h1M5 76h1M135 105h1M377 115h1M409 169h1M394 66h1M449 299h1M41 328h1M241 171h1M36 368h1M146 273h1M68 381h1M426 329h1M501 145h1M384 258h1M377 103h1M282 264h1M238 113h1M496 138h1M182 249h1M118 107h1M480 407h1M76 212h1M517 400h1M261 406h1M72 60h1M102 182h1M504 416h1M229 241h1M80 244h1M377 131h1M154 254h1M129 25h1M167 357h1M206 293h1M509 308h1M154 114h1M491 136h1M479 3h1M110 203h1M269 369h1M240 260h1M291 54h1M298 304h1M51 128h1M168 122h1M140 315h1M524 298h1M471 68h1M481 4h1M144 107h1M352 158h1M292 426h1M52 162h1M474 35h1M235 198h1M260 230h1M159 131h1M116 70h1M252 259h1M221 230h1M171 53h1M321 233h1M331 265h1M387 402h1M185 95h1M156 143h1M412 6h1M494 48h1M66 384h1M85 216h1M164 114h1M107 116h1M240 24h1M331 44h1M77 395h1M397 266h1M363 50h1M35 419h1M128 276h1M520 50h1M485 296h1M456 428h1M335 47h1M335 353h1M88 61h1M409 54h1M345 26h1M241 134h1M48 170h1M361 63h1M484 124h1M500 60h1M219 110h1M132 2h1M137 319h1M10 5h1M79 89h1M268 293h1M270 107h1M114 48h1M344 122h1M6 92h1M200 314h1M431 394h1M519 264h1M37 58h1M103 113h1M182 334h1M50 40h1M109 147h1M256 374h1M387 279h1M408 182h1M487 16h1M244 35h1M462 29h1M377 347h1M444 237h1M390 308h1M433 92h1M53 298h1M329 298h1M484 6h1M153 10h1M519 133h1M321 273h1M510 420h1M478 322h1M94 147h1M117 131h1M133 261h1M29 272h1M228 197h1M511 122h1M364 168h1M259 69h1M380 126h1M316 36h1M25 13h1M307 172h1M452 134h1M305 82h1M387 186h1M235 402h1M91 348h1M471 299h1M105 59h1M222 264h1M262 16h1M309 327h1M500 248h1M431 240h1M18 264h1M360 144h1M32 237h1M54 249h1M402 1h1M329 181h1M202 44h1M19 260h1M487 183h1M255 390h1M164 44h1M400 15h1M382 358h1M390 305h1M104 334h1M512 22h1M36 196h1M462 266h1M18 308h1M150 22h1M353 63h1M91 279h1M168 98h1M89 137h1M474 414h1M421 174h1M147 93h1M367 3h1M121 32h1M451 53h1M335 93h1M339 76h1M474 363h1M47 336h1M221 72h1M107 38h1M387 184h1M503 41h1M328 360h1M177 403h1M146 252h1M334 130h1M306 363h1M227 235h1M282 215h1M314 365h1M161 151h1M495 186h1M388 34h1M277 244h1M60 136h1M312 54h1M87 48h1M328 24h1M438 246h1M212 267h1M187 37h1M482 65h1M317 149h1M117 290h1M523 427h1M131 196h1M22 345h1M359 195h1M40 131h1M521 36h1M378 81h1M500 123h1M289 224h1M116 333h1M162 309h1M273 150h1M228 130h1M11 210h1M378 185h1M78 391h1M272 250h1M445 279h1M522 230h1M71 27h1M366 37h1M149 273h1M63 254h1M264 114h1M347 141h1M526 103h1M367 148h1M76 276h1M513 62h1M474 390h1M248 186h1M282 26h1M250 35h1M218 199h1M435 158h1M378 269h1M373 279h1M334 108h1M8 402h1M76 252h1M77 96h1M372 256h1M484 7h1M199 295h1M212 31h1M326 287h1M526 378h1M161 66h1M378 422h1M138 181h1M192 280h1M478 422h1M182 173h1M70 166h1M204 148h1M492 275h1M60 26h1M63 237h1M335 373h1M79 296h1M179 183h1M397 187h1M70 272h1M215 322h1M471 419h1M283 334h1M490 72h1M210 74h1M518 43h1M415 221h1M44 30h1M417 70h1M46 332h1M149 133h1M514 215h1M111 386h1M474 222h1M428 167h1M412 410h1M525 97h1M135 399h1M359 99h1M355 20h1M355 346h1M373 92h1M307 221h1M219 162h1M123 143h1M503 210h1M338 149h1M229 233h1M362 367h1M439 215h1M87 151h1M114 246h1M150 178h1M188 313h1M187 338h1M349 119h1M239 409h1M251 427h1M187 237h1M147 358h1M257 42h1M74 345h1M505 219h1M451 378h1M93 186h1M487 191h1M119 327h1M75 45h1M409 396h1M64 191h1M318 190h1M525 129h1M21 107h1M131 33h1M521 121h1M383 233h1M170 429h1M443 12h1M132 98h1M383 146h1M275 317h1M321 223h1M141 217h1M149 341h1M505 140h1M207 62h1M287 219h1M301 423h1M283 21h1M76 107h1M159 284h1M333 29h1M81 79h1M498 267h1M208 192h1M189 262h1M312 99h1M49 118h1M222 324h1M141 16h1M523 42h1M508 183h1M115 263h1M484 163h1M400 360h1M38 215h1M44 197h1M355 22h1M291 95h1M387 308h1M55 282h1M205 276h1M34 68h1M166 289h1M517 8h1M398 11h1M168 113h1M115 287h1M446 267h1M180 6h1M419 404h1M500 21h1M219 427h1M487 42h1M221 62h1M415 406h1M76 300h1M474 112h1M43 359h1M466 88h1M399 353h1M493 316h1M84 364h1M437 294h1M302 239h1M44 203h1M377 256h1M244 133h1M505 31h1M120 74h1M346 271h1M15 347h1M497 429h1M465 202h1M298 407h1M221 16h1M13 123h1M475 309h1M99 271h1M130 45h1M37 302h1M230 47h1M137 191h1M420 404h1M26 283h1M368 375h1M519 56h1M426 236h1M191 210h1M188 353h1M114 399h1M453 321h1M95 278h1M495 180h1M381 49h1M94 269h1M187 185h1M478 413h1M206 245h1M148 240h1M191 105h1M343 312h1M526 372h1M247 229h1M424 154h1M509 200h1M13 214h1M408 114h1M494 222h1M481 185h1M505 394h1M12 109h1M356 147h1M295 84h1M211 32h1M94 105h1M364 78h1M92 264h1M147 21h1M278 261h1M331 89h1M313 96h1M455 286h1M238 427h1M113 57h1M10 331h1M90 411h1M456 158h1M185 398h1M187 210h1M189 43h1M154 32h1M426 19h1M289 239h1M523 286h1M21 391h1M284 35h1M384 135h1M485 38h1M155 86h1M489 429h1M164 5h1M320 373h1M375 286h1M38 412h1M132 102h1M75 17h1M198 385h1M270 3h1M126 108h1M366 160h1M86 258h1M482 66h1M354 227h1M114 252h1M523 37h1M175 253h1M66 120h1M160 87h1M222 164h1M126 112h1M200 171h1M24 166h1M69 393h1M377 293h1M370 44h1M368 146h1M519 180h1M244 356h1M415 303h1M268 71h1M230 153h1M16 76h1M273 365h1M84 168h1M6 244h1M526 244h1M74 261h1M159 132h1M265 249h1M211 82h1M237 238h1M372 382h1M3 376h1M275 136h1M8 373h1M507 240h1M296 260h1M456 37h1M174 419h1M509 66h1M311 135h1M113 204h1M21 36h1M261 127h1M32 410h1M199 238h1M403 411h1M331 293h1M171 376h1M409 316h1M510 265h1M520 275h1M220 133h1M507 81h1M347 357h1M282 352h1M79 261h1M185 341h1M7 227h1M303 223h1M210 179h1M478 31h1M79 146h1M261 232h1M153 16h1M305 408h1M421 65h1M263 263h1M445 190h1M461 340h1M354 348h1M10 56h1M89 2h1M270 211h1M108 39h1M255 286h1M196 385h1M325 427h1M77 371h1M42 403h1M87 297h1M250 353h1M348 116h1M130 166h1M449 288h1M181 68h1M94 123h1M486 40h1M14 285h1M45 59h1M460 341h1M137 136h1M131 176h1M323 385h1M53 315h1M396 261h1M317 336h1M431 161h1M122 93h1M518 54h1M295 306h1M377 402h1M364 344h1M64 54h1M489 137h1M406 166h1M466 67h1M289 140h1M188 325h1M115 276h1M28 123h1M128 360h1M368 8h1M327 147h1M310 255h1M68 127h1M222 257h1M15 307h1M259 242h1M158 421h1M126 260h1M338 46h1M140 62h1M105 409h1M43 305h1M504 121h1M307 56h1M410 41h1M483 23h1M123 186h1M226 64h1M47 299h1M96 217h1M149 384h1M302 344h1M496 118h1M409 244h1M217 197h1M176 31h1M344 317h1M527 106h1M504 380h1M271 142h1M218 234h1M5 200h1M153 107h1M520 360h1M62 235h1M521 352h1M468 3h1M8 401h1M44 348h1M438 61h1M265 210h1M321 146h1M362 110h1M502 150h1M474 125h1M512 162h1M163 394h1M299 425h1M112 411h1M327 355h1M147 242h1M425 224h1M358 185h1M474 389h1M424 200h1M514 392h1M368 90h1M378 71h1M7 28h1M205 162h1M348 90h1M487 252h1M134 365h1M420 115h1M252 162h1M7 167h1M283 12h1M214 386h1M300 135h1M255 356h1M414 74h1M1 334h1M20 280h1M235 26h1M83 145h1M433 324h1M148 316h1M79 394h1M233 382h1M161 92h1M255 123h1M75 20h1M83 108h1M192 89h1M38 404h1M89 146h1M156 34h1M163 340h1M143 44h1M390 318h1M309 50h1M1 278h1M293 408h1M344 383h1M43 19h1M101 281h1M129 259h1M203 192h1M285 352h1M216 410h1M117 79h1M128 371h1M39 302h1M477 373h1M263 81h1M24 101h1M259 21h1M485 327h1M370 355h1M463 4h1M167 429h1M369 265h1M132 333h1M427 332h1M468 393h1M501 16h1M212 171h1M403 15h1M226 159h1M220 347h1M467 114h1M526 64h1M87 264h1M221 381h1M100 399h1M396 231h1M171 360h1M509 334h1M94 177h1M115 15h1M187 207h1M311 339h1M149 386h1M137 415h1M148 297h1M135 97h1M93 135h1M260 249h1M311 327h1M410 45h1M305 396h1M56 6h1M324 273h1M75 144h1M428 370h1M84 418h1M78 260h1M119 325h1M350 269h1M213 412h1M148 90h1M224 214h1M146 362h1M359 285h1M185 195h1M437 376h1M0 40h1M428 31h1M23 59h1M135 414h1M191 58h1M306 294h1M331 268h1M245 15h1M113 98h1M198 207h1M41 47h1M490 365h1M381 408h1M49 308h1M184 40h1M76 301h1M27 398h1M402 57h1M246 276h1M527 183h1M258 361h1M25 309h1M479 131h1M447 153h1M387 28h1M403 46h1M430 67h1M108 204h1M518 294h1M286 415h1M406 377h1M11 195h1M59 364h1M204 124h1M236 8h1M197 89h1M316 180h1M121 10h1M93 50h1M358 314h1M68 309h1M458 14h1M35 96h1M334 397h1M327 76h1M10 42h1M12 267h1M405 310h1M428 91h1M259 95h1M341 385h1M450 214h1M478 319h1M127 119h1M76 291h1M286 400h1M177 244h1M370 281h1M495 288h1M459 252h1M249 2h1M319 105h1M43 205h1M347 134h1M430 376h1M151 269h1M365 214h1M149 269h1M367 101h1M497 171h1M423 319h1M347 355h1M37 281h1M217 67h1M470 340h1M63 46h1M184 194h1M138 222h1M370 30h1M222 120h1M332 406h1M13 279h1M107 249h1M431 170h1M11 357h1M360 208h1M501 171h1M197 174h1M185 415h1M234 406h1M328 251h1M370 255h1M120 214h1M230 420h1M13 348h1M503 59h1M464 325h1M415 284h1M507 36h1M107 356h1M365 265h1M171 314h1M43 223h1M197 139h1M488 187h1M272 399h1M323 172h1M336 9h1M243 45h1M317 347h1M334 52h1M200 345h1M252 412h1M51 389h1M494 215h1M223 92h1M124 227h1M248 214h1M133 48h1M292 68h1M67 369h1M483 12h1M155 229h1M211 356h1M260 97h1M310 321h1M477 304h1M202 271h1M51 161h1M4 25h1M497 54h1M142 316h1M181 220h1M24 429h1M61 342h1M258 99h1M505 411h1M346 176h1M105 140h1M349 32h1M61 338h1M524 310h1M243 381h1M61 305h1M366 113h1M155 40h1M296 231h1M480 63h1M9 286h1M115 135h1M461 134h1M348 183h1M447 130h1M462 363h1M442 117h1M366 172h1M63 198h1M305 393h1M220 103h1M8 89h1M282 397h1M158 168h1M471 32h1M328 332h1M143 250h1M133 222h1M280 333h1M386 336h1M154 269h1M301 52h1M61 388h1M95 203h1M458 8h1M144 66h1M18 127h1M277 267h1M173 116h1M485 1h1M498 18h1M497 311h1M71 204h1M520 171h1M236 408h1M146 349h1M443 59h1M157 421h1M121 163h1M274 212h1M400 28h1M227 400h1M59 164h1M33 367h1M350 292h1M325 195h1M307 349h1M15 189h1M167 269h1M495 195h1M276 385h1M292 201h1M401 315h1M482 79h1M351 117h1M515 48h1M155 211h1M27 136h1M394 325h1M92 149h1M210 300h1M470 162h1M29 35h1M252 352h1M345 332h1M151 89h1M233 248h1M139 138h1M330 352h1M326 265h1M144 384h1M283 318h1M85 213h1M495 275h1M317 197h1M360 329h1M21 117h1M503 332h1M5 253h1M168 228h1M465 369h1M509 190h1M113 117h1M473 354h1M218 321h1M339 27h1M300 138h1M400 317h1M289 243h1M300 36h1M46 190h1M161 202h1M132 187h1M230 193h1M175 257h1M455 145h1M73 347h1M26 9h1M114 223h1M317 247h1M137 72h1M442 118h1M372 237h1M72 215h1M135 241h1M155 10h1M288 71h1M170 77h1M42 390h1M68 378h1M302 11h1M110 377h1M307 406h1M329 162h1M2 149h1M95 358h1M302 187h1M336 113h1M402 186h1M226 101h1M437 303h1M453 240h1M318 413h1M154 429h1M269 216h1M368 386h1M382 360h1M144 373h1M397 92h1M7 175h1M317 181h1M38 157h1M468 148h1M16 361h1M368 404h1M8 344h1M347 249h1M93 79h1M489 386h1M164 411h1M434 253h1M321 243h1M496 347h1M490 171h1M386 2h1M109 195h1M359 221h1M34 386h1M290 265h1M65 406h1M219 185h1M414 368h1M45 385h1M459 215h1M120 99h1M159 369h1M222 310h1M511 236h1M526 186h1M501 412h1M468 219h1M498 320h1M243 368h1M181 122h1M42 195h1M334 153h1M199 189h1M505 299h1M107 143h1M235 2h1M317 10h1M77 330h1M228 425h1M395 249h1M399 199h1M457 372h1M250 185h1M429 147h1M375 175h1M157 210h1M209 341h1M62 93h1M81 404h1M520 328h1M306 391h1M138 414h1M391 255h1M224 391h1M256 63h1M512 228h1M189 1h1M365 360h1M287 94h1M49 277h1M53 166h1M268 308h1M369 380h1M194 383h1M384 100h1M32 299h1M78 282h1M424 350h1M433 4h1M429 315h1M417 180h1M242 209h1M179 4h1M163 211h1M134 245h1M219 159h1M199 128h1M109 19h1M109 155h1M274 162h1M176 231h1M295 32h1M381 38h1M324 181h1M153 149h1M44 217h1M510 370h1M107 68h1M49 163h1M343 33h1M280 79h1M100 82h1M412 209h1M57 44h1M360 17h1M464 299h1M323 261h1M517 335h1M508 203h1M308 207h1M353 176h1M344 221h1M411 107h1M84 181h1M192 332h1M488 112h1M290 56h1M249 59h1M498 329h1M192 122h1M226 247h1M236 286h1M310 168h1M286 201h1M468 369h1M206 372h1M471 320h1M501 46h1M403 270h1M200 391h1M308 268h1M499 296h1M53 96h1M526 203h1M510 381h1M269 253h1M256 145h1M50 368h1M255 252h1M370 39h1M101 351h1M481 384h1M467 210h1M104 312h1M329 105h1M90 230h1M104 419h1M258 229h1M516 26h1M16 117h1M193 229h1M162 46h1M127 284h1M118 378h1M219 318h1M57 38h1M341 83h1M391 112h1M28 51h1M139 89h1M348 237h1M518 6h1M259 187h1M93 420h1M58 2h1M154 205h1M170 237h1M167 59h1M526 165h1M73 43h1M143 332h1M494 75h1M446 16h1M524 250h1M135 194h1M51 130h1M101 16h1M261 104h1M526 71h1M173 158h1M214 180h1M235 353h1M86 222h1M107 380h1M374 145h1M297 388h1M146 215h1M515 138h1M48 322h1M303 38h1M136 304h1M55 145h1M372 427h1M439 60h1M329 285h1M289 54h1M385 284h1M119 372h1M458 335h1M23 352h1M406 390h1M179 99h1M97 203h1M69 156h1M108 161h1M390 212h1M216 395h1M438 10h1M186 218h1M354 308h1M332 23h1M23 340h1M307 351h1M39 331h1M158 320h1M284 64h1M96 161h1M172 328h1M93 156h1M285 208h1M497 304h1M515 233h1M55 155h1M489 291h1M305 103h1M44 112h1M32 333h1M435 59h1M154 329h1M355 81h1M396 6h1M408 425h1M79 228h1M517 274h1M118 349h1M80 289h1M46 376h1M119 367h1M369 100h1M467 351h1M114 84h1M143 341h1M294 242h1M435 356h1M85 259h1M381 209h1M78 85h1M467 72h1M485 278h1M101 170h1M40 109h1M446 373h1M109 75h1M200 101h1M400 315h1M189 317h1M488 202h1M249 414h1M342 199h1M54 301h1M489 268h1M525 220h1M2 54h1M465 365h1M298 206h1M462 252h1M53 216h1M83 424h1M406 388h1M329 100h1M325 72h1M78 132h1M325 177h1M518 99h1M329 369h1M44 302h1M137 359h1M499 66h1M401 386h1M55 312h1M56 388h1M282 208h1M191 284h1M519 305h1M310 60h1M13 171h1M74 188h1M427 377h1M346 400h1M340 355h1M96 92h1M472 407h1M262 89h1M148 178h1M25 188h1M472 62h1M98 306h1M436 162h1M431 386h1M475 212h1M155 390h1M162 381h1M51 125h1M153 413h1M272 376h1M321 345h1M88 376h1M379 132h1M469 168h1M268 412h1M426 67h1M186 110h1M432 266h1M148 87h1M180 148h1M13 24h1M497 202h1M337 10h1M163 283h1M367 69h1M110 305h1M151 193h1M352 344h1M496 424h1M83 289h1M204 204h1M360 249h1M387 142h1M336 268h1M316 50h1M258 305h1M111 303h1M10 208h1M390 315h1M415 366h1M455 226h1M101 365h1M89 9h1M344 154h1M198 73h1M65 207h1M82 115h1M12 116h1M438 110h1M55 77h1M11 294h1M294 109h1M262 239h1M413 88h1M426 301h1M185 145h1M363 224h1M515 364h1M242 389h1M439 134h1M516 93h1M57 90h1M357 291h1M48 118h1M396 240h1M36 186h1M159 33h1M272 119h1M97 413h1M198 209h1M206 381h1M326 411h1M204 37h1M357 199h1M475 165h1M244 155h1M164 204h1M351 343h1M477 259h1M464 56h1M337 243h1M72 152h1M504 95h1M430 137h1M409 364h1M491 218h1M423 348h1M66 175h1M180 131h1M448 250h1M453 227h1M31 116h1M24 383h1M414 235h1M317 413h1M517 286h1M2 156h1M410 290h1M449 27h1M40 78h1M153 53h1M277 265h1M390 382h1M476 148h1M450 87h1M451 341h1M82 6h1M433 54h1M228 5h1M288 1h1M373 380h1M502 176h1M103 52h1M95 319h1M263 277h1M363 34h1M455 192h1M101 245h1M273 35h1M214 183h1M224 418h1M289 222h1M400 374h1M105 20h1M130 351h1M115 107h1M427 342h1M333 134h1M42 271h1M353 177h1M419 200h1M376 176h1M240 317h1M453 171h1M172 238h1M515 187h1M376 345h1M181 219h1M456 138h1M375 260h1M168 290h1M386 174h1M205 282h1M89 420h1M228 422h1M228 290h1M404 316h1M136 71h1M92 425h1M46 155h1M444 390h1M238 269h1M328 188h1M516 395h1M124 396h1M49 196h1M336 7h1M416 343h1M445 306h1M512 152h1M46 188h1M211 425h1M354 304h1M477 216h1M136 10h1M256 221h1M362 151h1M413 210h1M2 58h1M130 6h1M455 427h1M488 239h1M452 149h1M30 52h1M0 245h1M48 250h1M329 359h1M484 30h1M227 380h1M305 327h1M243 220h1M95 151h1M105 222h1M296 119h1M218 426h1M31 345h1M287 140h1M171 407h1M25 341h1M55 237h1M435 54h1M84 273h1M77 180h1M334 253h1M482 305h1M191 344h1M85 427h1M478 334h1M30 5h1M180 207h1M422 392h1M473 67h1M517 236h1M438 169h1M152 8h1M185 85h1M43 268h1M296 370h1M114 258h1M36 382h1M339 94h1M387 85h1M96 357h1M233 209h1M448 59h1M478 54h1M155 374h1M370 170h1M226 74h1M271 63h1M449 123h1M195 225h1M113 102h1M69 68h1M226 24h1M125 298h1M83 71h1M273 280h1M439 30h1M394 335h1M519 124h1M297 289h1M62 232h1M524 56h1M466 176h1M385 22h1M143 401h1M308 279h1M159 331h1M504 88h1M501 407h1M396 402h1M293 128h1M444 108h1M213 145h1M430 424h1M239 157h1M280 260h1M418 183h1M480 126h1M329 421h1M380 150h1M162 224h1M26 341h1M450 268h1M251 349h1M267 276h1M411 122h1M66 201h1M422 384h1M355 161h1M189 275h1M479 330h1M112 309h1M442 136h1M234 79h1M516 214h1M454 389h1M134 152h1M459 54h1M313 267h1M35 331h1M342 68h1M366 215h1M341 425h1M390 372h1M399 98h1M151 161h1M372 228h1M333 362h1M14 234h1M474 268h1M491 101h1M21 34h1M128 290h1M41 374h1M458 260h1M439 162h1M192 208h1M430 175h1M444 186h1M222 236h1M371 262h1M365 379h1M505 297h1M236 215h1M105 371h1M248 390h1M239 130h1M288 143h1M33 11h1M248 268h1M250 158h1M314 421h1M187 379h1M518 91h1M420 35h1M180 118h1M357 206h1M90 390h1M302 372h1M376 352h1M188 74h1M437 311h1M235 331h1M307 121h1M245 71h1M13 283h1M162 256h1M493 109h1M236 374h1M215 314h1M387 53h1M223 366h1M330 222h1M109 117h1M352 251h1M195 272h1M249 92h1M501 226h1M147 147h1M242 14h1M19 220h1M218 208h1M413 132h1M494 109h1M146 8h1M104 165h1M375 391h1M302 218h1M378 204h1M226 71h1M72 210h1M281 418h1M426 118h1M197 26h1M231 66h1M409 333h1M378 116h1M27 112h1M461 213h1M55 71h1M174 94h1M174 389h1M447 232h1M59 104h1M142 163h1M468 189h1M30 288h1M43 188h1M272 210h1M166 61h1M427 221h1M156 15h1M157 177h1M234 125h1M160 286h1M478 398h1M128 15h1M190 366h1M446 215h1M447 170h1M96 86h1M268 326h1M221 145h1M284 30h1M143 216h1M183 426h1M318 136h1M250 256h1M21 263h1M106 108h1M426 132h1M258 88h1M57 402h1M430 403h1M133 250h1M302 354h1M107 42h1M405 138h1M472 126h1M425 39h1M360 312h1M226 238h1M40 156h1M96 277h1M44 60h1M388 212h1M151 367h1M507 303h1M298 165h1M419 59h1M120 296h1M403 423h1M268 281h1M312 222h1M164 308h1M492 56h1M429 298h1M357 190h1M19 289h1M436 316h1M424 395h1M239 258h1M25 220h1M195 349h1M187 289h1M335 69h1M324 266h1M57 214h1M388 308h1M183 403h1M206 367h1M47 176h1M359 330h1M405 302h1M405 183h1M292 296h1M368 145h1M502 130h1M481 153h1M31 98h1M452 358h1M15 186h1M120 47h1M345 375h1M55 335h1M1 57h1M46 172h1M283 258h1M89 364h1M228 324h1M436 243h1M70 158h1M479 46h1M6 29h1M458 369h1M383 179h1M255 303h1M119 140h1M136 395h1M218 200h1M471 394h1M350 221h1M348 229h1M276 85h1M380 140h1M283 133h1M179 411h1M74 291h1M443 154h1M327 0h1M120 306h1M460 147h1M20 143h1M450 266h1M376 346h1M299 419h1M304 146h1M109 173h1M187 52h1M269 360h1M196 292h1M411 161h1M220 188h1M3 411h1M9 314h1M30 93h1M429 13h1M196 240h1M333 316h1M15 276h1M483 110h1M503 429h1M468 83h1M42 240h1M376 42h1M227 211h1M86 86h1M231 162h1M461 278h1M195 171h1M340 2h1M397 406h1M98 395h1M217 307h1M273 167h1M386 74h1M425 173h1M326 373h1M368 348h1M437 345h1M195 196h1M72 366h1M432 180h1M379 119h1M102 36h1M40 87h1M337 144h1M284 152h1M65 190h1M426 396h1M511 269h1M410 5h1M492 416h1M189 356h1M218 67h1M91 35h1M291 16h1M41 279h1M425 44h1M117 123h1M514 231h1M297 319h1M22 220h1M312 347h1M123 280h1M271 71h1M396 189h1M229 186h1M34 340h1M458 60h1M257 340h1M395 26h1M420 155h1M443 162h1M255 247h1M326 384h1M86 115h1M220 167h1M5 270h1M275 318h1M148 81h1M101 127h1M274 176h1M423 204h1M73 84h1M57 370h1M222 416h1M59 413h1M514 302h1M2 146h1M294 12h1M423 300h1M350 376h1M497 222h1M223 173h1M93 320h1M257 235h1M72 299h1M490 340h1M372 246h1M240 156h1M367 253h1M236 283h1M311 151h1M182 330h1M425 218h1M176 221h1M129 131h1M492 287h1M90 52h1M199 391h1M254 29h1M39 87h1M482 19h1M514 210h1M21 301h1M73 309h1M45 70h1M54 412h1M519 289h1M361 361h1M456 357h1M265 173h1M135 269h1M402 171h1M87 169h1M283 114h1M5 204h1M245 134h1M399 85h1M24 40h1M209 199h1M412 146h1M404 246h1M351 12h1M43 84h1M188 16h1M228 292h1M522 340h1M58 91h1M318 120h1M426 317h1M222 181h1M69 81h1M342 341h1M306 129h1M481 354h1M147 5h1M124 119h1M115 159h1M392 259h1M204 164h1M397 179h1M447 261h1M501 259h1M512 404h1M441 63h1M284 408h1M290 261h1M168 110h1M262 397h1M198 35h1M109 332h1M300 262h1M327 258h1M175 381h1M451 253h1M524 65h1M372 123h1M352 67h1M365 337h1M318 123h1M167 121h1M437 298h1M72 92h1M199 111h1M499 426h1M113 412h1M64 116h1M494 374h1M11 260h1M249 206h1M457 141h1M189 270h1M354 113h1M87 19h1M429 395h1M308 222h1M129 423h1M486 354h1M327 413h1M233 20h1M206 415h1M463 398h1M100 300h1M91 383h1M337 173h1M247 192h1M443 139h1M366 152h1M435 379h1M189 407h1M118 392h1M306 315h1M288 232h1M475 226h1M292 70h1M313 381h1M516 204h1M404 401h1M235 0h1M287 196h1M285 23h1M339 219h1M24 201h1M157 27h1M507 9h1M283 48h1M320 388h1M384 305h1M165 127h1M134 345h1M527 239h1M363 106h1M115 319h1M91 174h1M124 332h1M425 78h1M104 96h1M474 334h1M219 324h1M482 121h1M427 305h1M402 333h1M393 298h1M216 237h1M215 146h1M183 159h1M236 53h1M395 350h1M463 129h1M408 197h1M412 337h1M445 369h1M347 234h1M407 113h1M230 344h1M156 236h1M483 112h1M522 54h1M487 56h1M177 282h1M515 176h1M265 340h1M89 400h1M414 168h1M391 314h1M80 229h1M216 318h1M350 413h1M141 303h1M417 225h1M374 217h1M337 342h1M375 369h1M447 207h1M457 59h1M12 240h1M405 150h1M171 40h1M526 269h1M510 244h1M431 399h1M219 115h1M8 368h1M391 184h1M408 238h1M351 125h1M248 33h1M349 20h1M285 204h1M446 235h1M8 67h1M288 164h1M386 134h1M352 56h1M333 414h1M89 55h1M179 201h1M304 27h1M518 44h1M100 155h1M527 107h1M461 380h1M231 70h1M123 197h1M91 237h1M320 390h1M232 188h1M309 179h1M279 96h1M388 323h1M46 415h1M160 266h1M454 168h1M31 3h1M386 327h1M147 278h1M61 428h1M65 179h1M351 172h1M2 408h1M151 44h1M127 255h1M451 339h1M73 325h1M448 403h1M441 114h1M415 9h1M314 119h1M282 70h1M296 150h1M461 310h1M460 197h1M310 341h1M28 338h1M66 190h1M425 71h1M43 256h1M190 145h1M56 86h1M87 125h1M278 336h1M297 146h1M340 106h1M434 55h1M0 411h1M214 196h1M267 96h1M455 2h1M270 328h1M235 398h1M126 292h1M125 233h1M442 179h1M524 147h1M520 211h1M56 264h1M396 165h1M128 306h1M457 135h1M81 254h1M317 123h1M458 334h1M4 50h1M88 120h1M84 203h1M55 18h1M211 174h1M444 310h1M436 309h1M175 45h1M518 383h1M325 404h1M131 89h1M419 118h1M521 400h1M41 28h1M88 52h1M99 136h1M357 83h1M127 317h1M280 239h1M64 193h1M106 112h1M414 305h1M403 347h1M238 339h1M275 83h1M439 386h1M382 26h1M152 239h1M231 116h1M260 412h1M351 37h1M88 71h1M371 12h1M150 81h1M349 335h1M312 149h1M132 410h1M444 296h1M251 126h1M235 352h1M424 120h1M145 218h1M249 110h1M437 88h1M383 190h1M219 131h1M238 48h1M257 150h1M494 94h1M8 61h1M211 299h1M138 295h1M511 294h1M188 5h1M376 189h1M76 40h1M280 403h1M135 262h1M527 93h1M299 250h1M497 273h1M312 243h1M136 102h1M476 307h1M122 172h1M474 235h1M261 425h1M380 276h1M242 250h1M15 32h1M424 250h1M243 202h1M395 112h1M140 8h1M252 408h1M445 345h1M165 358h1M432 129h1M0 175h1M152 185h1M174 224h1M281 356h1M489 34h1M338 111h1M440 234h1M177 258h1M103 325h1M171 178h1M476 256h1M314 55h1M343 181h1M517 111h1M86 1h1M513 192h1M387 302h1M132 308h1M508 42h1M85 72h1M9 158h1M421 90h1M362 142h1M123 98h1M148 111h1M167 412h1M460 125h1M67 170h1M108 419h1M355 351h1M79 44h1M144 246h1M329 93h1M495 267h1M333 46h1M55 30h1M461 143h1M401 392h1M157 326h1M193 57h1M507 413h1M145 101h1M271 343h1M519 396h1M339 87h1M0 336h1M113 276h1M506 259h1M282 389h1M410 393h1M128 316h1M168 30h1M31 360h1M18 159h1M35 382h1M112 20h1M24 46h1M395 21h1M237 190h1M271 66h1M84 103h1M212 226h1M461 128h1M123 210h1M365 98h1M425 220h1M143 211h1M23 284h1M426 59h1M387 230h1M39 113h1M281 215h1M12 412h1M227 265h1M155 290h1M523 366h1M13 307h1M184 371h1M209 386h1M453 99h1M293 247h1M350 124h1M165 196h1M146 153h1M184 339h1M334 53h1M60 429h1M196 389h1M336 132h1M361 21h1M375 155h1M62 122h1M186 245h1M409 100h1M348 390h1M344 64h1M281 119h1M440 34h1M237 346h1M263 168h1M29 120h1M287 380h1M61 263h1M454 194h1M205 14h1M5 178h1M189 36h1M425 30h1M244 145h1M49 88h1M273 83h1M258 142h1M360 409h1M167 329h1M506 309h1M372 71h1M191 129h1M88 116h1M262 379h1M40 162h1M287 268h1M35 370h1M349 157h1M475 15h1M423 201h1M441 107h1M503 51h1M32 25h1M188 170h1M40 14h1M218 209h1M505 7h1M198 335h1M71 66h1M141 278h1M462 28h1M163 98h1M373 246h1M157 170h1M73 172h1M182 131h1M21 370h1M140 145h1M432 309h1M107 424h1M143 361h1M177 108h1M94 119h1M508 380h1M5 372h1M360 289h1M266 345h1M341 108h1M450 226h1M308 350h1M4 113h1M409 410h1M49 400h1M108 72h1M120 421h1M121 348h1M73 340h1M288 429h1M165 166h1M241 308h1M87 285h1M113 287h1M401 291h1M299 288h1M441 424h1M314 137h1M286 98h1M10 101h1M479 33h1M282 112h1M209 333h1M7 254h1M26 297h1M366 386h1M75 31h1M24 19h1M211 191h1M353 40h1M219 271h1M92 168h1M39 76h1M317 58h1M251 19h1M182 114h1M336 136h1M49 250h1M333 256h1M462 135h1M119 355h1M429 92h1M141 280h1M290 400h1M519 130h1M306 247h1M527 230h1M323 317h1M527 114h1M514 180h1M468 67h1M451 90h1M249 367h1M98 358h1M400 284h1M310 408h1M390 232h1M177 115h1M126 215h1M415 75h1M29 246h1M434 294h1M435 420h1M207 154h1M489 31h1M313 131h1M204 395h1M357 115h1M310 62h1M116 399h1M173 396h1M94 360h1M0 312h1M178 124h1M513 7h1M336 401h1M174 230h1M56 78h1M18 134h1M259 83h1M409 358h1M258 126h1M23 139h1M333 127h1M125 207h1M337 48h1M105 7h1M139 251h1M186 29h1M371 150h1M250 106h1M209 366h1M277 139h1M140 166h1M259 145h1M265 366h1M231 239h1M134 92h1M527 204h1M457 188h1M168 280h1M125 372h1M30 324h1M525 55h1M201 63h1M469 220h1M267 85h1M385 285h1M415 226h1M2 63h1M3 139h1M8 119h1M476 155h1M31 202h1M399 208h1M95 79h1M2 323h1M447 405h1M404 364h1M263 68h1M90 363h1M408 125h1M37 178h1M305 242h1M330 426h1M207 73h1M170 127h1M176 131h1M309 211h1M427 282h1M392 416h1M471 18h1M350 162h1M55 226h1M493 347h1M449 334h1M491 252h1M21 30h1M372 403h1M339 144h1M134 231h1M257 239h1M130 310h1M166 293h1M57 263h1M77 249h1M329 212h1M352 413h1M464 36h1M485 44h1M151 72h1M16 270h1M52 289h1M389 48h1M461 0h1M140 278h1M328 334h1M27 174h1M396 406h1M51 59h1M151 405h1M304 104h1M167 202h1M369 398h1M254 127h1M216 106h1M186 354h1M208 121h1M146 324h1M230 213h1M36 121h1M452 339h1M158 122h1M490 136h1M441 214h1M223 86h1M356 26h1M329 46h1M486 2h1M217 345h1M263 25h1M316 245h1M204 388h1M313 408h1M411 278h1M328 268h1M55 177h1M160 92h1M146 267h1M212 211h1M338 199h1M105 315h1M169 102h1M93 261h1M492 354h1M509 347h1M278 229h1M328 108h1M276 21h1M163 354h1M370 188h1M297 133h1M85 101h1M184 306h1M256 241h1M239 21h1M451 127h1M181 115h1M174 403h1M242 17h1M476 139h1M434 45h1M430 335h1M287 114h1M49 197h1M22 106h1M142 407h1M243 345h1M415 140h1M183 306h1M278 125h1M360 424h1M493 225h1M190 411h1M495 278h1M371 386h1M237 380h1M525 279h1M181 313h1M470 374h1M200 372h1M519 111h1M229 292h1M366 406h1M382 413h1M309 226h1M391 354h1M499 225h1M516 266h1M387 128h1M376 362h1M246 198h1M478 192h1M262 104h1M281 363h1M6 133h1M111 393h1M145 419h1M265 396h1M352 112h1M81 193h1M412 314h1M74 220h1M454 138h1M355 155h1M237 373h1M390 204h1M234 151h1M286 343h1M8 231h1M157 387h1M101 74h1M193 7h1M395 367h1M500 302h1M149 192h1M147 143h1M37 294h1M513 88h1M282 345h1M387 164h1M306 52h1M342 7h1M263 334h1M301 325h1M227 24h1M34 375h1M25 94h1M432 302h1M285 147h1M411 342h1M479 381h1M178 400h1M256 124h1M120 107h1M120 277h1M349 110h1M313 150h1M24 158h1M181 50h1M361 101h1M67 267h1M10 156h1M64 391h1M342 172h1M247 228h1M499 304h1M381 85h1M347 146h1M48 46h1M465 15h1M100 226h1M199 426h1M157 89h1M66 417h1M210 43h1M254 364h1M51 154h1M206 91h1M202 40h1M150 404h1M489 35h1M191 309h1M487 87h1M446 263h1M153 172h1M93 85h1M496 195h1M302 297h1M3 152h1M363 36h1M470 282h1M135 84h1M339 229h1M206 389h1M339 45h1M99 176h1M206 18h1M359 304h1M171 267h1M201 55h1M512 104h1M326 259h1M14 330h1M26 295h1M438 103h1M170 51h1M481 174h1M201 358h1M341 98h1M181 256h1M150 259h1M103 60h1M135 57h1M124 123h1M370 163h1M425 244h1M439 74h1M258 210h1M392 415h1M271 126h1M5 198h1M261 377h1M296 409h1M86 225h1M1 210h1M193 362h1M248 284h1M413 195h1M190 252h1M417 150h1M427 21h1M440 295h1M414 147h1M466 190h1M227 310h1M139 254h1M493 288h1M12 274h1M471 324h1M470 7h1M216 77h1M164 255h1M485 335h1M310 20h1M55 422h1M331 46h1M356 53h1M131 306h1M130 112h1M198 272h1M279 363h1M80 7h1M509 188h1M410 353h1M244 339h1M229 317h1M477 386h1M49 413h1M217 182h1M171 253h1M48 7h1M37 46h1M224 230h1M437 307h1M123 259h1M288 139h1M511 237h1M126 126h1M398 293h1M317 264h1M19 314h1M170 111h1M474 23h1M252 165h1M467 409h1M251 331h1M371 316h1M509 161h1M419 161h1M358 350h1M500 80h1M307 409h1M396 260h1M118 127h1M17 186h1M470 183h1M119 10h1M102 217h1M128 278h1M128 393h1M265 293h1M416 316h1M2 134h1M513 78h1M413 166h1M327 17h1M91 103h1M229 253h1M399 389h1M341 72h1M80 105h1M321 129h1M211 169h1M128 171h1M372 194h1M405 408h1M470 122h1M348 342h1M290 106h1M484 19h1M404 397h1M323 145h1M35 235h1M215 296h1M476 399h1M409 116h1M225 94h1M176 168h1M419 390h1M300 395h1M65 133h1M525 38h1M4 233h1M174 295h1M272 82h1M217 262h1M428 260h1M271 387h1M477 36h1M458 373h1M385 298h1M190 6h1M392 58h1M198 69h1M328 372h1M205 98h1M494 287h1M354 17h1M352 58h1M118 120h1M485 315h1M64 332h1M50 269h1M457 309h1M337 285h1M439 117h1M352 88h1M406 205h1M423 116h1M506 245h1M262 1h1M59 411h1M213 295h1M262 238h1M272 57h1M74 214h1M458 165h1M392 59h1M155 363h1M366 393h1M402 78h1M122 104h1M519 326h1M323 66h1M440 27h1M267 145h1M415 392h1M12 176h1M460 332h1M152 307h1M225 383h1M232 308h1M318 373h1M109 285h1M435 113h1M226 224h1M341 153h1M196 344h1M379 165h1M300 306h1M103 29h1M317 54h1M114 268h1M505 66h1M290 161h1M126 344h1M455 35h1M264 133h1M30 273h1M240 20h1M29 247h1M118 274h1M253 307h1M93 119h1M442 10h1M385 358h1M520 196h1M378 254h1M287 236h1M163 308h1M78 210h1M255 96h1M454 271h1M166 40h1M309 161h1M22 77h1M513 68h1M83 16h1M216 65h1M206 144h1M361 35h1M26 18h1M14 70h1M408 54h1M356 241h1M459 166h1M8 414h1M166 5h1M398 264h1M77 22h1M428 65h1M282 243h1M234 286h1M470 383h1M366 326h1M11 358h1M223 136h1M190 269h1M93 365h1M55 7h1M75 357h1M114 425h1M523 107h1M141 364h1M389 286h1M243 391h1M306 269h1M228 268h1M264 6h1M427 335h1M358 47h1M435 281h1M19 244h1M456 400h1M29 98h1M494 299h1M11 337h1M450 141h1M118 152h1M273 305h1M256 257h1M117 113h1M498 377h1M54 169h1M304 387h1M297 33h1M436 313h1M194 230h1M434 39h1M429 383h1M464 61h1M381 91h1M393 179h1M133 335h1M52 228h1M451 193h1M286 148h1M222 99h1M125 332h1M376 272h1M383 326h1M409 348h1M10 338h1M372 322h1M114 322h1M204 336h1M225 334h1M358 18h1M132 257h1M263 250h1M9 232h1M505 354h1M265 277h1M520 61h1M65 211h1M347 115h1M237 116h1M498 270h1M158 150h1M501 186h1M230 187h1M258 378h1M173 376h1M368 100h1M111 261h1M13 145h1M97 188h1M188 137h1M450 384h1M445 237h1M8 398h1M244 277h1M229 121h1M341 68h1M159 184h1M326 134h1M240 349h1M105 12h1M306 23h1M324 424h1M7 122h1M514 399h1M519 408h1M162 166h1M212 244h1M57 86h1M96 83h1M153 104h1M135 364h1M321 280h1M383 360h1M120 37h1M481 44h1M119 374h1M334 234h1M178 262h1M188 380h1M459 323h1M408 248h1M433 236h1M208 301h1M322 158h1M347 128h1M15 46h1M204 197h1M273 376h1M100 16h1M196 104h1M328 92h1M161 7h1M466 418h1M53 102h1M78 73h1M97 123h1M292 344h1M148 168h1M525 413h1M38 284h1M333 63h1M387 46h1M168 323h1M82 119h1M306 78h1M370 371h1M344 261h1M340 273h1M480 37h1M431 227h1M261 410h1M312 212h1M76 187h1M228 393h1M511 321h1M89 375h1M386 152h1M523 28h1M507 246h1M118 168h1M436 275h1M325 226h1M319 269h1M33 24h1M152 393h1M329 109h1M129 381h1M179 1h1M156 114h1M198 353h1M326 248h1M38 171h1M165 61h1M273 29h1M270 255h1M511 31h1M437 253h1M65 8h1M517 103h1M158 105h1M405 178h1M64 281h1M326 164h1M179 73h1M106 193h1M203 62h1M356 7h1M317 210h1M66 407h1M442 98h1M516 364h1M445 77h1M55 220h1M171 207h1M473 259h1M19 90h1M40 277h1M80 67h1M486 215h1M255 322h1M110 378h1M300 76h1M55 245h1M171 66h1M474 75h1M13 253h1M53 188h1M232 254h1M274 414h1M473 128h1M55 206h1M482 365h1M222 175h1M501 286h1M343 161h1M179 383h1M120 369h1M171 52h1M216 365h1M100 276h1M70 45h1M103 183h1M360 355h1M254 77h1M495 116h1M181 225h1M266 311h1M149 427h1M524 380h1M331 365h1M363 161h1M424 281h1M172 78h1M334 415h1M239 383h1M402 413h1M526 7h1M436 368h1M232 190h1M485 77h1M308 250h1M389 421h1M214 165h1M149 364h1M382 303h1M377 11h1M522 129h1M309 331h1M472 327h1M117 19h1M435 279h1M202 239h1M301 250h1M276 335h1M407 8h1M234 168h1M516 129h1M444 330h1M19 323h1M218 364h1M112 38h1M348 28h1M214 282h1M182 271h1M153 273h1M321 240h1M361 223h1M272 103h1M82 275h1M433 332h1M254 24h1M83 95h1M298 65h1M262 419h1M277 239h1M198 80h1M410 308h1M500 137h1M53 178h1M498 205h1M33 203h1M387 317h1M143 18h1M314 265h1M265 220h1M21 384h1M514 154h1M165 137h1M127 286h1M464 381h1M312 183h1M483 392h1M260 303h1M128 279h1M214 247h1M78 421h1M110 302h1M108 151h1M279 219h1M495 300h1M36 9h1M113 39h1M204 119h1M89 185h1M166 227h1M169 126h1M501 42h1M99 397h1M42 363h1M299 237h1M329 284h1M325 291h1M58 33h1M238 267h1M100 396h1M514 203h1M193 385h1M442 177h1M518 385h1M375 82h1M294 17h1M224 95h1M195 126h1M75 125h1M114 27h1M143 268h1M70 372h1M110 73h1M60 320h1M17 305h1M20 298h1M2 6h1M510 76h1M80 24h1M416 26h1M329 98h1M107 20h1M371 73h1M56 66h1M201 365h1M272 230h1M146 338h1M20 390h1M119 400h1M442 299h1M394 204h1M64 152h1M343 377h1M245 11h1M392 297h1M505 194h1M171 32h1M468 232h1M485 71h1M156 361h1M15 349h1M60 71h1M176 288h1M71 144h1M62 413h1M211 262h1M234 95h1M421 257h1M201 292h1M273 371h1M245 76h1M109 217h1M9 53h1M414 296h1M475 283h1M192 107h1M25 299h1M413 255h1M517 239h1M380 380h1M62 110h1M502 27h1M206 101h1M508 96h1M393 226h1M162 95h1M307 315h1M311 36h1M377 325h1M324 279h1M108 241h1M210 329h1M437 396h1M44 230h1M142 299h1M229 213h1M59 154h1M184 110h1M476 171h1M429 31h1M166 19h1M421 170h1M390 294h1M442 174h1" stroke="#222"/><path d="M255 238h1M490 213h1M271 89h1M231 415h1M170 152h1M361 411h1M371 268h1M368 396h1M132 67h1M414 120h1M34 238h1M459 248h1M264 237h1M313 34h1M140 427h1M439 269h1M373 373h1M21 342h1M110 219h1M50 243h1M480 218h1M275 329h1M195 305h1M230 348h1M526 219h1M116 403h1M243 257h1M38 136h1M165 250h1M312 404h1M481 67h1M218 191h1M303 317h1M199 386h1M94 138h1M505 97h1M297 310h1M162 305h1M347 196h1M314 121h1M41 349h1M259 137h1M1 313h1M523 264h1M207 400h1M260 232h1M7 233h1M373 96h1M410 103h1M465 153h1M53 79h1M496 52h1M46 244h1M306 85h1M520 72h1M202 84h1M361 427h1M461 306h1M428 80h1M35 276h1M1 139h1M162 331h1M233 59h1M505 262h1M187 8h1M197 49h1M73 164h1M27 343h1M247 154h1M177 250h1M373 33h1M48 351h1M188 160h1M409 113h1M307 358h1M49 131h1M432 425h1M388 368h1M13 138h1M140 227h1M463 386h1M26 299h1M8 409h1M230 330h1M263 247h1M403 321h1M51 325h1M149 6h1M261 29h1M194 386h1M429 148h1M383 171h1M322 321h1M172 207h1M423 296h1M8 226h1M355 291h1M184 146h1M56 13h1M438 353h1M341 193h1M451 338h1M449 348h1M495 168h1M199 273h1M471 24h1M165 112h1M441 368h1M92 268h1M404 187h1M302 39h1M68 305h1M222 418h1M170 119h1M226 426h1M334 292h1M240 119h1M163 199h1M260 120h1M513 415h1M403 395h1M40 164h1M328 326h1M272 336h1M7 320h1M137 130h1M487 155h1M382 407h1M194 217h1M78 414h1M483 28h1M409 120h1M143 26h1M118 232h1M137 87h1M326 25h1M302 195h1M247 323h1M521 8h1M375 15h1M498 72h1M118 51h1M478 325h1M217 149h1M31 162h1M185 409h1M315 30h1M352 119h1M410 289h1M120 317h1M66 84h1M487 380h1M165 28h1M328 154h1M60 153h1M440 378h1M523 304h1M117 353h1M31 27h1M410 129h1M243 299h1M59 12h1M430 168h1M526 374h1M384 358h1M171 384h1M94 324h1M428 165h1M16 420h1M120 311h1M498 241h1M179 152h1M418 139h1M329 191h1M94 305h1M285 389h1M353 96h1M116 245h1M413 347h1M180 328h1M377 422h1M423 270h1M512 81h1M202 351h1M484 23h1M129 9h1M469 226h1M325 180h1M92 203h1M5 41h1M467 116h1M196 270h1M292 285h1M502 356h1M104 331h1M82 158h1M349 235h1M13 219h1M275 193h1M314 149h1M212 307h1M505 306h1M153 141h1M333 162h1M107 235h1M194 270h1M327 167h1M15 54h1M60 97h1M422 350h1M300 118h1M59 360h1M302 427h1M451 248h1M172 132h1M242 194h1M327 31h1M107 228h1M367 402h1M245 247h1M495 191h1M490 371h1M26 40h1M248 274h1M246 343h1M207 422h1M326 62h1M308 115h1M199 230h1M527 134h1M319 268h1M458 250h1M417 364h1M62 242h1M142 295h1M315 153h1M156 79h1M228 81h1M18 350h1M523 265h1M351 214h1M72 420h1M178 190h1M390 79h1M272 420h1M245 172h1M331 404h1M433 389h1M454 74h1M449 79h1M325 333h1M33 321h1M369 61h1M187 99h1M284 280h1M81 367h1M234 203h1M87 51h1M189 302h1M504 66h1M366 185h1M27 146h1M149 248h1M277 96h1M521 219h1M275 197h1M378 64h1M42 376h1M314 185h1M5 392h1M34 173h1M317 243h1M91 2h1M159 238h1M93 158h1M439 315h1M274 146h1M266 44h1M263 104h1M474 342h1M508 197h1M445 13h1M451 200h1M132 152h1M370 309h1M154 246h1M214 16h1M497 114h1M170 188h1M34 188h1M210 111h1M296 423h1M285 367h1M52 124h1M36 2h1M436 6h1M341 396h1M143 173h1M447 238h1M154 348h1M206 222h1M405 88h1M155 256h1M226 304h1M11 57h1M65 293h1M186 210h1M376 15h1M257 91h1M19 33h1M470 146h1M314 178h1M142 318h1M133 404h1M483 189h1M320 413h1M326 71h1M519 191h1M424 22h1M137 190h1M331 274h1M442 55h1M62 298h1M255 28h1M232 65h1M359 270h1M325 80h1M310 368h1M46 22h1M77 74h1M233 90h1M77 331h1M358 113h1M48 371h1M236 201h1M202 182h1M355 72h1M468 275h1M87 42h1M94 403h1M436 218h1M212 173h1M297 252h1M502 271h1M189 429h1M383 153h1M401 95h1M289 294h1M182 151h1M159 74h1M85 163h1M92 359h1M475 181h1M378 372h1M68 23h1M131 368h1M476 185h1M303 90h1M413 98h1M312 120h1M227 398h1M481 221h1M149 34h1M402 315h1M460 422h1M391 41h1M115 178h1M63 5h1M177 253h1M508 207h1M251 303h1M267 14h1M309 369h1M410 263h1M111 301h1M190 395h1M144 117h1M46 21h1M52 355h1M305 383h1M205 32h1M335 327h1M230 199h1M58 167h1M169 221h1M235 197h1M259 36h1M99 36h1M316 119h1M444 303h1M396 120h1M336 208h1M247 10h1M294 142h1M288 171h1M123 375h1M258 133h1M431 31h1M414 374h1M268 200h1M427 189h1M439 169h1M94 153h1M101 18h1M3 375h1M56 319h1M251 146h1M423 40h1M418 186h1M33 96h1M451 13h1M265 307h1M486 108h1M222 204h1M318 207h1M428 297h1M417 106h1M520 159h1M88 102h1M291 217h1M338 88h1M67 150h1M335 217h1M414 59h1M383 294h1M287 132h1M206 45h1M32 240h1M482 413h1M443 342h1M262 155h1M132 238h1M195 39h1M225 302h1M491 173h1M49 230h1M326 8h1M11 236h1M158 180h1M411 267h1M412 83h1M392 309h1M14 10h1M52 40h1M330 16h1M352 113h1M403 222h1M160 120h1M4 71h1M376 356h1M109 70h1M289 421h1M392 279h1M310 359h1M126 179h1M363 171h1M320 158h1M82 269h1M527 391h1M203 4h1M525 62h1M23 71h1M285 85h1M36 115h1M326 106h1M506 134h1M8 155h1M231 382h1M261 190h1M52 167h1M128 96h1M465 416h1M88 77h1M147 267h1M124 109h1M117 92h1M300 267h1M455 418h1M493 210h1M144 200h1M12 293h1M174 78h1M338 194h1M315 403h1M142 211h1M472 365h1M87 21h1M230 273h1M457 364h1M124 340h1M158 337h1M232 45h1M85 204h1M431 74h1M517 144h1M94 226h1M81 68h1M476 275h1M379 207h1M483 203h1M212 212h1M175 415h1M488 20h1M459 105h1M437 97h1M82 304h1M495 51h1M526 294h1M189 351h1M354 37h1M276 157h1M394 297h1M127 103h1M39 316h1M527 307h1M112 103h1M410 40h1M0 30h1M398 209h1M42 391h1M429 16h1M264 186h1M462 192h1M256 370h1M317 333h1M121 197h1M363 1h1M26 191h1M283 354h1M452 210h1M389 18h1M22 36h1M225 15h1M6 116h1M321 74h1M75 393h1M50 278h1M411 409h1M233 385h1M200 351h1M392 240h1M462 383h1M202 228h1M12 384h1M411 147h1M231 177h1M290 201h1M404 60h1M67 397h1M130 41h1M365 100h1M389 304h1M219 234h1M398 368h1M293 235h1M386 40h1M413 327h1M277 65h1M498 338h1M62 288h1M372 90h1M82 143h1M420 249h1M190 302h1M459 45h1M358 235h1M474 333h1M336 354h1M226 196h1M398 49h1M311 92h1M508 125h1M214 128h1M293 414h1M251 33h1M430 266h1M228 64h1M162 29h1M64 159h1M328 183h1M255 16h1M423 79h1M242 354h1M226 118h1M352 313h1M218 357h1M196 56h1M168 324h1M333 207h1M238 381h1M60 8h1M280 405h1M0 151h1M230 0h1M123 353h1M89 325h1M266 87h1M13 114h1M448 258h1M407 287h1M326 274h1M36 356h1M370 306h1M268 51h1M512 96h1M104 176h1M428 214h1M204 45h1M319 236h1M360 238h1M518 124h1M353 109h1M302 324h1M137 231h1M89 219h1M410 46h1M175 294h1M93 204h1M215 393h1M85 43h1M448 189h1M83 80h1M219 248h1M156 164h1M224 118h1M422 31h1M192 168h1M35 190h1M1 23h1M118 9h1M331 233h1M510 248h1M59 44h1M297 74h1M317 383h1M240 248h1M353 398h1M447 364h1M443 164h1M289 233h1M158 13h1M433 331h1M188 194h1M97 351h1M211 278h1M115 271h1M2 49h1M341 93h1M185 119h1M493 276h1M200 61h1M458 299h1M458 327h1M311 370h1M139 65h1M453 286h1M193 337h1M194 141h1M472 77h1M431 211h1M387 319h1M255 262h1M103 316h1M99 145h1M411 108h1M212 250h1M17 151h1M281 300h1M283 23h1M487 254h1M296 401h1M260 46h1M205 195h1M491 229h1M318 54h1M234 65h1M496 406h1M29 38h1M389 363h1M172 215h1M254 36h1M508 261h1M201 349h1M472 205h1M7 187h1M23 38h1M367 397h1M279 236h1M205 272h1M130 128h1M311 110h1M328 66h1M60 375h1M50 424h1M492 25h1M151 182h1M295 178h1M29 230h1M509 389h1M515 305h1M311 185h1M325 136h1M477 312h1M127 171h1M504 370h1M498 198h1M508 420h1M94 103h1M72 303h1M513 209h1M305 3h1M509 119h1M182 329h1M253 58h1M457 277h1M56 153h1M376 49h1M468 421h1M352 9h1M306 383h1M229 168h1M375 74h1M347 342h1M343 124h1M312 244h1M46 136h1M92 302h1M228 135h1M84 121h1M224 18h1M162 397h1M426 191h1M460 278h1M73 282h1M249 349h1M149 314h1M481 130h1M144 302h1M281 427h1M12 194h1M444 215h1M417 152h1M372 287h1M128 323h1M339 351h1M285 397h1M425 419h1M370 301h1M24 133h1M393 211h1M480 214h1M353 429h1M508 402h1M307 372h1M95 412h1M57 331h1M53 353h1M289 69h1M334 186h1M465 261h1M109 210h1M155 189h1M468 51h1M13 406h1M458 142h1M307 128h1M323 306h1M115 366h1M440 69h1M405 293h1M391 415h1M395 391h1M412 12h1M414 179h1M1 83h1M351 9h1M155 426h1M189 247h1M372 388h1M449 324h1M527 339h1M41 317h1M446 218h1M125 254h1M355 422h1M32 279h1M23 356h1M219 419h1M501 232h1M438 240h1M499 159h1M285 20h1M163 411h1M264 219h1M124 149h1M258 406h1M169 369h1M16 367h1M522 293h1M48 70h1M332 205h1M93 178h1M314 218h1M164 350h1M97 14h1M42 328h1M248 154h1M184 255h1M107 49h1M438 282h1M143 365h1M343 404h1M22 411h1M31 102h1M482 207h1M290 170h1M314 294h1M283 269h1M414 283h1M363 205h1M498 259h1M176 178h1M207 306h1M409 259h1M413 19h1M160 194h1M486 322h1M204 46h1M254 402h1M261 203h1M433 402h1M190 335h1M279 122h1M59 395h1M137 332h1M349 267h1M268 345h1M264 268h1M202 85h1M273 372h1M282 148h1M50 139h1M446 180h1M79 398h1M237 326h1M335 196h1M211 349h1M413 100h1M347 2h1M340 325h1M197 109h1M479 18h1M16 124h1M400 181h1M459 3h1M516 253h1M116 368h1M289 307h1M85 357h1M473 7h1M132 149h1M469 45h1M172 100h1M455 108h1M140 136h1M104 107h1M454 34h1M132 192h1M380 122h1M84 324h1M440 382h1M36 184h1M318 204h1M63 214h1M414 272h1M392 95h1M98 301h1M396 61h1M240 85h1M133 214h1M301 2h1M392 30h1M148 298h1M151 241h1M1 19h1M126 16h1M255 327h1M393 37h1M344 387h1M329 69h1M476 126h1M228 414h1M393 342h1M515 227h1M9 181h1M525 411h1M235 172h1M345 181h1M113 133h1M284 290h1M148 329h1M157 83h1M240 328h1M375 43h1M150 312h1M221 164h1M380 71h1M11 46h1M474 120h1M228 426h1M218 36h1M174 36h1M97 75h1M372 376h1M523 22h1M286 92h1M230 82h1M329 397h1M252 414h1M229 393h1M352 226h1M357 143h1M365 13h1M320 269h1M215 172h1M418 371h1M44 262h1M345 358h1M315 222h1M51 368h1M16 43h1M116 241h1M407 307h1M388 382h1M84 30h1M434 80h1M132 253h1M308 343h1M53 413h1M416 47h1M330 124h1M60 150h1M92 296h1M315 325h1M356 381h1M251 389h1M190 245h1M267 164h1M218 151h1M462 53h1M10 114h1M393 394h1M285 65h1M512 161h1M168 285h1M35 74h1M519 267h1M241 260h1M440 152h1M218 422h1M197 252h1M15 128h1M24 386h1M511 18h1M136 397h1M451 10h1M230 353h1M464 114h1M217 72h1M485 299h1M349 10h1M290 186h1M302 313h1M37 336h1M286 213h1M376 373h1M210 34h1M253 385h1M208 91h1M53 229h1M324 140h1M182 165h1M421 102h1M163 195h1M482 425h1M258 62h1M396 382h1M234 175h1M274 308h1M86 294h1M420 167h1M204 391h1M328 294h1M326 342h1M127 62h1M158 247h1M221 357h1M369 121h1M217 202h1M379 169h1M203 322h1M363 324h1M456 331h1M77 190h1M466 239h1M107 56h1M7 54h1M481 347h1M35 394h1M260 312h1M204 72h1M21 401h1M103 93h1M75 348h1M304 391h1M451 100h1M327 352h1M513 388h1M382 279h1M484 407h1M325 100h1M140 126h1M66 183h1M11 112h1M117 227h1M191 71h1M118 141h1M397 168h1M400 300h1M492 247h1M471 332h1M172 415h1M41 97h1M425 276h1M320 138h1M292 95h1M223 14h1M21 221h1M423 89h1M267 90h1M418 157h1M380 264h1M258 251h1M414 320h1M181 350h1M379 92h1M450 326h1M67 25h1M313 365h1M443 136h1M74 174h1M136 79h1M440 2h1M331 189h1M75 163h1M117 394h1M25 321h1M224 17h1M280 346h1M383 38h1M448 12h1M190 113h1M518 11h1M411 404h1M120 247h1M239 75h1M19 429h1M233 213h1M519 115h1M61 21h1M157 279h1M244 99h1M220 370h1M358 183h1M510 261h1M3 341h1M447 169h1M503 383h1M451 384h1M444 118h1M149 250h1M177 391h1M303 202h1M60 384h1M318 126h1M150 274h1M205 421h1M430 32h1M523 182h1M76 200h1M446 327h1M338 145h1M197 24h1M61 332h1M432 95h1M40 315h1M239 199h1M57 180h1M151 404h1M96 198h1M3 133h1M350 281h1M249 371h1M135 376h1M521 166h1M116 337h1M128 225h1M227 197h1M232 165h1M32 332h1M183 56h1M180 198h1M485 254h1M285 110h1M144 22h1M43 219h1M137 14h1M132 48h1M152 176h1M524 412h1M45 186h1M54 334h1M152 364h1M491 192h1M359 232h1M69 181h1M426 324h1M77 256h1M277 291h1M263 164h1M306 266h1M95 120h1M268 299h1M424 255h1M253 166h1M182 353h1M186 256h1M515 209h1M417 214h1M349 265h1M480 388h1M132 87h1M121 94h1M499 82h1M16 126h1M445 421h1M203 196h1M374 183h1M267 313h1M286 401h1M522 134h1M2 183h1M450 159h1M295 413h1M319 7h1M17 307h1M526 327h1M389 21h1M455 45h1M447 366h1M227 298h1M143 51h1M464 192h1M455 97h1M26 395h1M23 343h1M139 367h1M391 192h1M375 420h1M21 214h1M7 104h1M31 54h1M470 184h1M267 307h1M270 204h1M70 107h1M266 93h1M86 48h1M464 226h1M413 71h1M295 408h1M105 111h1M74 134h1M367 84h1M236 381h1M392 202h1M511 2h1M331 370h1M191 98h1M492 321h1M164 178h1M128 346h1M43 190h1M154 261h1M463 116h1M337 123h1M377 421h1M191 214h1M452 93h1M345 185h1M343 354h1M313 315h1M237 310h1M0 372h1M339 302h1M371 419h1M521 407h1M257 164h1M93 350h1M188 94h1M489 169h1M67 76h1M484 355h1M438 154h1M37 113h1M317 145h1M314 102h1M405 249h1M489 289h1M499 367h1M348 94h1M146 407h1M139 166h1M52 204h1M402 378h1M374 372h1M277 406h1M7 216h1M401 177h1M337 267h1M178 337h1M226 243h1M423 273h1M472 369h1M255 187h1M212 160h1M525 109h1M239 291h1M82 384h1M509 391h1M488 287h1M348 414h1M317 337h1M340 260h1M455 376h1M525 342h1M324 260h1M70 230h1M470 422h1M241 292h1M513 38h1M490 247h1M354 196h1M314 23h1M343 244h1M425 164h1M259 54h1M26 332h1M2 56h1M285 99h1M103 166h1M49 344h1M162 133h1M339 177h1M369 360h1M471 47h1M264 23h1M362 78h1M178 284h1M406 139h1M249 217h1M124 188h1M321 325h1M309 183h1M371 137h1M317 257h1M509 426h1M331 178h1M219 329h1M416 139h1M61 88h1M188 120h1M377 354h1M159 84h1M137 404h1M356 279h1M266 427h1M508 72h1M402 227h1M311 357h1M442 391h1M391 275h1M236 149h1M278 300h1M476 24h1M303 369h1M217 233h1M503 237h1M8 194h1M287 109h1M464 249h1M122 382h1M314 310h1M124 135h1M128 59h1M19 64h1M199 417h1M305 259h1M273 94h1M453 344h1M265 45h1M293 59h1M358 49h1M458 359h1M391 212h1M372 186h1M76 213h1M9 312h1M338 211h1M401 408h1M74 106h1M330 385h1M27 113h1M36 127h1M426 212h1M227 119h1M265 191h1M505 108h1M400 17h1M156 374h1M387 246h1M108 103h1M280 213h1M365 216h1M456 257h1M408 312h1M69 362h1M0 61h1M279 43h1M87 256h1M494 185h1M91 255h1M114 172h1M252 369h1M1 24h1M22 390h1M515 2h1M516 227h1M17 133h1M63 176h1M333 22h1M160 412h1M280 388h1M233 398h1M390 139h1M350 7h1M494 117h1M141 229h1M478 42h1M70 198h1M192 143h1M428 345h1M426 286h1M46 126h1M158 55h1M246 78h1M436 89h1M57 81h1M499 16h1M302 15h1M473 86h1M278 161h1M353 415h1M349 408h1M140 155h1M479 333h1M281 68h1M372 334h1M387 333h1M3 156h1M443 53h1M319 131h1M207 115h1M404 75h1M344 300h1M523 76h1M347 314h1M277 66h1M402 125h1M176 386h1M245 278h1M97 283h1M7 47h1M242 405h1M392 248h1M443 124h1M138 249h1M357 225h1M459 114h1M351 334h1M238 64h1M61 416h1M493 157h1M348 175h1M185 131h1M187 426h1M466 42h1M120 284h1M229 63h1M346 182h1M272 91h1M201 40h1M398 413h1M35 82h1M457 225h1M383 227h1M315 156h1M252 133h1M130 329h1M510 362h1M470 213h1M441 378h1M102 144h1M319 209h1M34 28h1M85 214h1M113 58h1M135 170h1M184 166h1M436 111h1M256 410h1M234 213h1M465 194h1M435 163h1M481 306h1M331 0h1M31 379h1M439 159h1M181 396h1M375 402h1M190 100h1M187 296h1M154 38h1M58 417h1M1 257h1M335 326h1M106 343h1M154 245h1M307 291h1M512 378h1M245 220h1M160 181h1M47 147h1M119 220h1M33 378h1M318 117h1M360 261h1M520 290h1M225 213h1M326 175h1M375 207h1M167 323h1M233 317h1M470 199h1M185 13h1M64 292h1M37 123h1M137 422h1M288 23h1M522 61h1M202 197h1M114 242h1M228 347h1M452 406h1M343 31h1M428 319h1M516 292h1M422 18h1M133 157h1M473 219h1M46 187h1M101 341h1M451 56h1M244 269h1M312 200h1M506 136h1M467 181h1M284 223h1M471 264h1M130 20h1M168 266h1M187 265h1M356 382h1M396 417h1M525 309h1M391 265h1M377 156h1M12 82h1M386 24h1M82 356h1M346 104h1M281 201h1M207 237h1M281 114h1M400 74h1M508 97h1M74 87h1M55 10h1M414 32h1M208 182h1M505 239h1M18 22h1M117 93h1M8 321h1M397 402h1M150 321h1M443 329h1M267 10h1M442 220h1M111 241h1M249 361h1M412 235h1M315 161h1M217 220h1M41 147h1M500 330h1M415 135h1M423 209h1M509 2h1M497 336h1M194 258h1M429 388h1M233 154h1M322 71h1M462 111h1M133 363h1M70 293h1M149 88h1M3 385h1M229 98h1M163 264h1M355 213h1M107 326h1M155 165h1M278 92h1M486 10h1M406 367h1M193 56h1M393 300h1M280 425h1M123 370h1M250 13h1M315 159h1M257 26h1M523 187h1M129 28h1M91 208h1M112 256h1M514 225h1M27 428h1M185 125h1M69 121h1M397 395h1M321 284h1M110 282h1M369 196h1M24 374h1M466 380h1M237 26h1M308 254h1M347 295h1M396 42h1M91 254h1M307 222h1M275 425h1M134 5h1M185 426h1M182 115h1M264 391h1M388 186h1M219 11h1M149 89h1M339 412h1M305 302h1M396 300h1M217 161h1M492 345h1M157 253h1M25 388h1M288 53h1M7 290h1M448 130h1M91 350h1M25 320h1M166 419h1M169 248h1M119 64h1M235 248h1M212 185h1M495 161h1M513 40h1M83 233h1M60 34h1M106 203h1M345 324h1M120 221h1M457 409h1M165 26h1M527 225h1M273 198h1M169 120h1M138 307h1M337 263h1M482 128h1M351 101h1M58 34h1M483 325h1M143 68h1M198 83h1M327 120h1M34 314h1M350 84h1M288 215h1M334 428h1M77 157h1M71 353h1M380 417h1M393 50h1M391 289h1M475 219h1M486 210h1M380 172h1M98 199h1M175 300h1M193 3h1M284 271h1M50 353h1M173 302h1M444 347h1M306 317h1M499 165h1M369 2h1M363 125h1M96 359h1M27 107h1M274 321h1M36 89h1M156 363h1M370 46h1M406 229h1M316 311h1M154 260h1M423 188h1M517 384h1M270 390h1M107 128h1M469 420h1M12 272h1M443 211h1M199 411h1M419 158h1M313 279h1M341 261h1M429 270h1M259 56h1M323 406h1M69 339h1M300 258h1M284 253h1M94 2h1M148 302h1M213 406h1M260 122h1M159 108h1M522 260h1M127 163h1M372 118h1M268 331h1M32 345h1M244 373h1M155 428h1M131 253h1M35 249h1M201 391h1M216 62h1M475 216h1M510 356h1M213 73h1M427 301h1M200 385h1M396 361h1M54 52h1M214 288h1M494 251h1M282 8h1M234 418h1M310 85h1M154 100h1M179 374h1M26 381h1M481 396h1M127 292h1M381 178h1M497 309h1M484 121h1M420 197h1M366 429h1M299 254h1M158 298h1M460 26h1M341 380h1M157 171h1M311 286h1M168 229h1M120 113h1M293 96h1M187 370h1M438 238h1M236 192h1M257 377h1M22 364h1M63 315h1M473 243h1M297 17h1M13 342h1M2 202h1M314 309h1M292 45h1M431 145h1M396 98h1M226 114h1M37 251h1M444 110h1M53 388h1M35 385h1M89 99h1M24 323h1M369 89h1M281 141h1M458 68h1M302 53h1M3 299h1M347 77h1M451 276h1M225 374h1M108 237h1M111 218h1M10 249h1M303 397h1M389 99h1M183 323h1M56 262h1M41 167h1M496 153h1M388 420h1M446 159h1M353 408h1M378 49h1M159 128h1M14 428h1M358 407h1M6 110h1M426 71h1M329 157h1M114 29h1M447 164h1M154 21h1M177 12h1M470 322h1M297 226h1M121 270h1M467 37h1M419 122h1M499 202h1M426 271h1M158 242h1M407 118h1M331 4h1M356 142h1M497 364h1M390 120h1M463 256h1M96 392h1M106 264h1M45 128h1M292 120h1M419 335h1M95 281h1M410 317h1M379 332h1M222 93h1" stroke="#323232"/><path d="M232 302h1M273 206h1M303 425h1M41 375h1M323 309h1M441 422h1M26 35h1M223 54h1M198 152h1M234 424h1M342 81h1M210 12h1M136 287h1M124 224h1M368 262h1M47 373h1M325 264h1M155 294h1M32 99h1M299 189h1M84 367h1M357 106h1M119 402h1M195 425h1M249 175h1M257 394h1M116 346h1M48 399h1M70 131h1M55 19h1M457 276h1M200 297h1M161 388h1M363 62h1M359 53h1M341 224h1M331 17h1M72 89h1M187 251h1M109 313h1M42 166h1M445 7h1M392 31h1M255 223h1M427 143h1M58 344h1M507 354h1M85 324h1M526 404h1M124 6h1M216 389h1M162 207h1M155 208h1M230 209h1M499 26h1M68 407h1M241 375h1M27 366h1M244 383h1M203 236h1M363 303h1M222 199h1M419 419h1M125 389h1M8 300h1M375 86h1M133 79h1M349 222h1M158 119h1M284 163h1M143 111h1M380 162h1M50 96h1M441 190h1M11 311h1M124 184h1M361 279h1M264 392h1M177 2h1M240 102h1M475 405h1M246 355h1M351 61h1M187 136h1M243 38h1M358 289h1M489 256h1M267 274h1M154 3h1M168 71h1M446 340h1M305 395h1M336 385h1M368 398h1M79 259h1M55 242h1M181 19h1M510 277h1M354 31h1M470 398h1M201 84h1M169 88h1M138 398h1M419 360h1M331 168h1M500 61h1M365 252h1M188 19h1M294 303h1M327 312h1M476 17h1M173 356h1M381 294h1M302 402h1M183 153h1M235 239h1M471 352h1M422 254h1M5 233h1M474 238h1M171 145h1M336 218h1M176 103h1M458 382h1M66 13h1M308 155h1M482 111h1M293 242h1M143 300h1M229 40h1M32 383h1M285 170h1M19 316h1M259 258h1M447 312h1M349 91h1M18 305h1M308 110h1M432 47h1M483 4h1M481 220h1M208 52h1M420 425h1M485 420h1M434 155h1M238 224h1M489 428h1M216 22h1M76 318h1M5 5h1M67 261h1M265 226h1M9 268h1M310 249h1M190 347h1M87 340h1M473 246h1M168 359h1M133 159h1M334 204h1M232 75h1M335 176h1M21 16h1M478 242h1M153 13h1M61 429h1M297 355h1M272 310h1M392 147h1M489 353h1M92 357h1M117 336h1M224 64h1M520 340h1M505 264h1M218 52h1M24 88h1M87 354h1M468 403h1M29 190h1M464 80h1M72 252h1M268 156h1M493 392h1M220 353h1M282 118h1M427 359h1M273 38h1M393 379h1M116 153h1M518 69h1M304 274h1M271 273h1M480 338h1M364 215h1M400 22h1M396 404h1M420 136h1M106 391h1M294 171h1M395 370h1M70 70h1M33 214h1M67 389h1M324 183h1M327 162h1M186 257h1M138 272h1M265 272h1M199 406h1M328 90h1M28 141h1M357 202h1M425 69h1M13 158h1M334 11h1M419 285h1M172 164h1M405 203h1M452 187h1M73 391h1M451 176h1M264 284h1M78 122h1M361 132h1M444 293h1M220 326h1M376 406h1M481 352h1M268 48h1M194 340h1M27 153h1M123 71h1M48 140h1M485 133h1M88 273h1M322 98h1M395 253h1M233 30h1M86 377h1M518 223h1M154 413h1M74 17h1M233 152h1M323 339h1M433 426h1M145 252h1M466 135h1M86 145h1M205 118h1M64 164h1M302 172h1M525 80h1M252 230h1M358 269h1M396 119h1M374 49h1M46 395h1M384 155h1M270 382h1M357 403h1M261 55h1M319 108h1M465 146h1M314 195h1M253 269h1M328 185h1M160 424h1M197 409h1M67 429h1M490 74h1M309 347h1M217 17h1M399 385h1M221 157h1M347 75h1M284 180h1M327 161h1M167 30h1M371 367h1M361 204h1M442 410h1M505 358h1M222 79h1M488 375h1M406 93h1M217 41h1M342 332h1M383 332h1M499 235h1M501 405h1M148 204h1M220 393h1M37 305h1M90 17h1M322 259h1M365 297h1M344 28h1M26 103h1M478 308h1M225 59h1M66 152h1M506 384h1M121 268h1M189 417h1M264 171h1M399 229h1M320 111h1M242 393h1M273 303h1M395 363h1M514 334h1M104 132h1M162 336h1M281 32h1M343 353h1M521 251h1M419 368h1M270 299h1M175 212h1M318 29h1M452 144h1M129 32h1M193 172h1M508 383h1M329 362h1M350 49h1M133 119h1M372 328h1M276 120h1M60 19h1M228 380h1M43 375h1M258 250h1M14 360h1M439 301h1M248 326h1M165 21h1M208 339h1M344 33h1M483 235h1M248 69h1M127 155h1M104 328h1M351 207h1M288 115h1M386 64h1M316 421h1M75 309h1M184 414h1M20 260h1M349 396h1M470 234h1M315 22h1M500 281h1M369 188h1M162 18h1M202 263h1M224 260h1M155 198h1M123 312h1M346 227h1M511 205h1M252 217h1M44 283h1M311 195h1M203 397h1M419 60h1M219 160h1M194 90h1M497 403h1M183 85h1M509 288h1M517 50h1M59 269h1M463 147h1M187 247h1M470 83h1M343 278h1M526 40h1M97 352h1M41 146h1M508 273h1M373 184h1M319 329h1M296 132h1M180 273h1M418 338h1M386 133h1M9 39h1M385 186h1M355 220h1M455 271h1M55 24h1M410 204h1M129 276h1M79 279h1M508 282h1M387 367h1M426 415h1M176 380h1M327 135h1M89 354h1M385 117h1M225 149h1M519 5h1M244 120h1M4 86h1M69 138h1M522 227h1M2 175h1M194 327h1M358 198h1M425 49h1M232 89h1M36 215h1M461 241h1M81 373h1M54 177h1M309 45h1M12 420h1M319 196h1M256 316h1M268 97h1M439 244h1M69 345h1M454 346h1M331 12h1M484 123h1M38 214h1M10 352h1M475 351h1M41 418h1M260 27h1M264 180h1M20 385h1M247 285h1M269 293h1M95 24h1M186 65h1M339 50h1M213 84h1M358 14h1M465 40h1M481 43h1M347 15h1M110 58h1M21 369h1M422 168h1M492 265h1M489 207h1M403 301h1M6 391h1M452 12h1M29 63h1M466 164h1M187 48h1M159 427h1M205 280h1M141 213h1M211 291h1M443 235h1M503 62h1M75 151h1M51 51h1M135 30h1M188 114h1M174 103h1M402 124h1M324 369h1M391 380h1M241 382h1M186 282h1M405 87h1M91 65h1M278 113h1M92 80h1M71 398h1M516 279h1M375 316h1M187 163h1M396 375h1M236 101h1M225 381h1M298 103h1M34 181h1M469 258h1M232 393h1M229 122h1M523 381h1M470 215h1M425 264h1M186 107h1M11 108h1M360 207h1M76 229h1M309 300h1M123 340h1M492 131h1M406 407h1M363 191h1M358 43h1M271 31h1M255 419h1M89 188h1M242 176h1M215 151h1M222 160h1M225 285h1M143 123h1M316 122h1M428 285h1M117 371h1M511 40h1M77 38h1M322 388h1M46 118h1M53 279h1M340 274h1M275 267h1M361 92h1M410 235h1M321 70h1M286 317h1M304 143h1M470 344h1M303 334h1M307 424h1M218 395h1M49 111h1M285 2h1M126 149h1M87 369h1M492 8h1M416 209h1M27 182h1M292 123h1M113 346h1M306 380h1M230 215h1M135 113h1M172 178h1M146 251h1M180 334h1M20 284h1M436 26h1M223 22h1M415 278h1M393 220h1M331 118h1M356 128h1M126 334h1M524 410h1M20 51h1M394 362h1M194 393h1M168 198h1M461 248h1M116 100h1M109 429h1M436 311h1M439 86h1M355 275h1M377 336h1M424 413h1M377 272h1M31 16h1M238 206h1M84 340h1M504 330h1M30 371h1M269 83h1M253 8h1M214 99h1M197 322h1M399 348h1M349 231h1M320 237h1M321 98h1M439 310h1M110 136h1M172 74h1M417 375h1M273 418h1M170 94h1M287 412h1M13 375h1M231 426h1M281 60h1M204 109h1M503 255h1M293 370h1M10 371h1M307 330h1M182 226h1M119 373h1M285 403h1M464 343h1M440 180h1M138 253h1M249 336h1M476 224h1M98 390h1M354 10h1M70 326h1M397 228h1M430 23h1M501 147h1M521 3h1M218 217h1M182 279h1M64 137h1M49 351h1M78 346h1M221 421h1M398 344h1M308 4h1M507 65h1M35 363h1M442 383h1M323 205h1M125 236h1M270 277h1M253 294h1M401 257h1M469 287h1M350 177h1M408 40h1M181 374h1M357 204h1M478 69h1M410 423h1M236 211h1M77 135h1M436 356h1M249 84h1M218 222h1M272 298h1M439 121h1M102 281h1M372 5h1M379 249h1M502 255h1M460 48h1M359 134h1M470 231h1M326 85h1M153 20h1M327 129h1M314 141h1M365 110h1M282 99h1M375 143h1M109 119h1M386 188h1M301 163h1M408 334h1M312 257h1M290 365h1M104 192h1M232 77h1M191 119h1M111 39h1M347 164h1M291 8h1M454 184h1M45 129h1M488 106h1M115 264h1M235 47h1M92 339h1M161 176h1M280 38h1M184 266h1M523 239h1M222 167h1M358 184h1M130 70h1M489 164h1M225 402h1M227 199h1M288 367h1M259 163h1" stroke="#4a4a4a"/><path d="M226 269h1M459 369h1M435 317h1M86 287h1M408 226h1M371 26h1M130 155h1M150 338h1M187 177h1M73 195h1M49 330h1M346 133h1M131 411h1M59 74h1M202 103h1M159 382h1M64 124h1M122 82h1M174 219h1M199 139h1M484 256h1M321 207h1M266 98h1M133 193h1M447 201h1M202 246h1M356 235h1M453 82h1M270 427h1M305 389h1M463 211h1M341 400h1M122 156h1M118 289h1M402 293h1M10 92h1M340 314h1M398 338h1M170 413h1M45 278h1M192 19h1M492 104h1M385 85h1M137 37h1M206 216h1M200 296h1M238 87h1M257 333h1M24 235h1M356 145h1M304 28h1M29 303h1M298 363h1M21 377h1M401 5h1M204 246h1M498 173h1M148 271h1M78 107h1M288 92h1M170 42h1M196 146h1M252 38h1M318 130h1M258 231h1M402 254h1M314 186h1M466 409h1M34 142h1M40 204h1M57 147h1M359 240h1M317 132h1M94 185h1M409 210h1M369 152h1M129 110h1M224 130h1M216 276h1M434 339h1M285 373h1M200 99h1M188 278h1M447 144h1M229 382h1M110 65h1M139 413h1M224 329h1M23 396h1M45 356h1M269 421h1M38 365h1M106 184h1M260 352h1M273 359h1M463 128h1M114 349h1M428 351h1M383 413h1M45 125h1M493 21h1M341 388h1M37 306h1M288 122h1M79 196h1M252 234h1M73 283h1M89 128h1M202 108h1M362 145h1M214 375h1M350 342h1M315 32h1M491 325h1M411 143h1M307 244h1M11 81h1M455 178h1M112 91h1M383 49h1M201 416h1M107 135h1M311 251h1M12 77h1M157 264h1M215 348h1M335 222h1M216 19h1M253 317h1M55 428h1M240 182h1M282 76h1M193 119h1M375 140h1M47 184h1M261 11h1M474 393h1M322 400h1M429 135h1M193 155h1M324 144h1M315 73h1M178 86h1M353 11h1M467 332h1M163 271h1M230 315h1M399 120h1M401 231h1M123 111h1M100 325h1M450 335h1M49 403h1M344 324h1M307 255h1M315 155h1M281 361h1M239 210h1M414 176h1M9 94h1M232 265h1M325 362h1M325 99h1M342 402h1M84 210h1M490 184h1M94 428h1M18 332h1M421 344h1M499 273h1M247 199h1M264 313h1M179 361h1M510 165h1M512 38h1M56 88h1M46 285h1M23 24h1M414 11h1M247 91h1M500 392h1M142 97h1M345 108h1M175 178h1M71 312h1M511 186h1M395 359h1M149 101h1M432 151h1M36 117h1M349 168h1M361 413h1M494 188h1M331 255h1M440 71h1M179 197h1M40 168h1M186 263h1M465 180h1M376 266h1M178 277h1M388 176h1M106 122h1M439 133h1M461 55h1M467 59h1M234 189h1M270 343h1M30 427h1M390 166h1" stroke="#707070"/><path d="M27 402h1M436 52h1M5 155h1M505 91h1M466 236h1M480 191h1M423 95h1M183 275h1M477 68h1M314 125h1M246 230h1M418 90h1M1 252h1M489 4h1M42 262h1M436 331h1M161 336h1M408 118h1M505 88h1M332 302h1M191 298h1M55 236h1M1 208h1M2 265h1M29 143h1M29 274h1M344 199h1M61 133h1M153 275h1M495 346h1M124 334h1M455 301h1M94 101h1M241 104h1M334 305h1M50 358h1M114 310h1M305 369h1M121 53h1M287 205h1M162 363h1M4 167h1M40 373h1" stroke="#c0c0c0"/></g><g shape-rendering="auto"><circle cx="175.5" cy="179.5" r="3" fill="url(#f)"/><circle cx="11.5" cy="313.5" r="3" fill="url(#f)"/><circle cx="391.5" cy="362.5" r="3" fill="url(#f)"/><circle cx="186.5" cy="422.5" r="3" fill="url(#f)"/><circle cx="155.5" cy="213.5" r="6" fill="url(#g)"/><ellipse cx="155.5" cy="213.5" rx="2.6" ry="3" fill="#fff"/><circle cx="280.5" cy="299.5" r="6" fill="url(#g)"/><ellipse cx="280.5" cy="299.5" rx="2.6" ry="3" fill="#fff"/><g transform="translate(0,.5)" stroke-width="1" fill="none" shape-rendering="crispEdges"><path d="M165 176h1M165 177h1M165 178h1M165 179h1M165 180h1M165 181h1M165 182h1M166 174h1M166 175h1M166 183h1M166 184h1M167 173h1M167 185h1M168 172h1M168 186h1M169 171h1M169 187h1M170 170h1M170 188h1M171 170h1M171 188h1M172 169h1M172 189h1M173 169h1M173 189h1M174 169h1M174 189h1M175 169h1M175 189h1M176 169h1M176 189h1M177 169h1M177 189h1M178 169h1M178 189h1M179 170h1M179 188h1M180 170h1M180 188h1M181 171h1M181 187h1M182 172h1M182 186h1M183 173h1M183 185h1M184 174h1M184 175h1M184 183h1M184 184h1M185 176h1M185 177h1M185 178h1M185 179h1M185 180h1M185 181h1M185 182h1" stroke="#00a400"/><path d="M145 210h1M145 211h1M145 212h1M145 213h1M145 214h1M145 215h1M145 216h1M146 208h1M146 209h1M146 217h1M146 218h1M147 207h1M147 219h1M148 206h1M148 220h1M149 205h1M149 221h1M150 204h1M150 222h1M151 204h1M151 222h1M152 203h1M152 223h1M153 203h1M153 223h1M154 203h1M154 223h1M155 203h1M155 223h1M156 203h1M156 223h1M157 203h1M157 223h1M158 203h1M158 223h1M159 204h1M159 222h1M160 204h1M160 222h1M161 205h1M161 221h1M162 206h1M162 220h1M163 207h1M163 219h1M164 208h1M164 209h1M164 217h1M164 218h1M165 210h1M165 211h1M165 212h1M165 213h1M165 214h1M165 215h1M165 216h1" stroke="#00a400"/><path d="M270 296h1M270 297h1M270 298h1M270 299h1M270 300h1M270 301h1M270 302h1M271 294h1M271 295h1M271 303h1M271 304h1M272 293h1M272 305h1M273 292h1M273 306h1M274 291h1M274 307h1M275 290h1M275 308h1M276 290h1M276 308h1M277 289h1M277 309h1M278 289h1M278 309h1M279 289h1M279 309h1M280 289h1M280 309h1M281 289h1M281 309h1M282 289h1M282 309h1M283 289h1M283 309h1M284 290h1M284 308h1M285 290h1M285 308h1M286 291h1M286 307h1M287 292h1M287 306h1M288 293h1M288 305h1M289 294h1M289 295h1M289 303h1M289 304h1M290 296h1M290 297h1M290 298h1M290 299h1M290 300h1M290 301h1M290 302h1" stroke="#00a400"/><path d="M1 310h1M1 311h1M1 312h1M1 313h1M1 314h1M1 315h1M1 316h1M2 308h1M2 309h1M2 317h1M2 318h1M3 307h1M3 319h1M4 306h1M4 320h1M5 305h1M5 321h1M6 304h1M6 322h1M7 304h1M7 322h1M8 303h1M8 323h1M9 303h1M9 323h1M10 303h1M10 323h1M11 303h1M11 323h1M12 303h1M12 323h1M13 303h1M13 323h1M14 303h1M14 323h1M15 304h1M15 322h1M16 304h1M16 322h1M17 305h1M17 321h1M18 306h1M18 320h1M19 307h1M19 319h1M20 308h1M20 309h1M20 317h1M20 318h1M21 310h1M21 311h1M21 312h1M21 313h1M21 314h1M21 315h1M21 316h1" stroke="#00a400"/><path d="M381 359h1M381 360h1M381 361h1M381 362h1M381 363h1M381 364h1M381 365h1M382 357h1M382 358h1M382 366h1M382 367h1M383 356h1M383 368h1M384 355h1M384 369h1M385 354h1M385 370h1M386 353h1M386 371h1M387 353h1M387 371h1M388 352h1M388 372h1M389 352h1M389 372h1M390 352h1M390 372h1M391 352h1M391 372h1M392 352h1M392 372h1M393 352h1M393 372h1M394 352h1M394 372h1M395 353h1M395 371h1M396 353h1M396 371h1M397 354h1M397 370h1M398 355h1M398 369h1M399 356h1M399 368h1M400 357h1M400 358h1M400 366h1M400 367h1M401 359h1M401 360h1M401 361h1M401 362h1M401 363h1M401 364h1M401 365h1" stroke="#00a400"/><path d="M176 419h1M176 420h1M176 421h1M176 422h1M176 423h1M176 424h1M176 425h1M177 417h1M177 418h1M177 426h1M177 427h1M178 416h1M178 428h1M179 415h1M179 429h1M180 414h1M181 413h1M182 413h1M183 412h1M184 412h1M185 412h1M186 412h1M187 412h1M188 412h1M189 412h1M190 413h1M191 413h1M192 414h1M193 415h1M193 429h1M194 416h1M194 428h1M195 417h1M195 418h1M195 426h1M195 427h1M196 419h1M196 420h1M196 421h1M196 422h1M196 423h1M196 424h1M196 425h1" stroke="#00a400"/></g></g></svg>
<div class="a track" style="left:536px;top:30px;width:17px;height:430px;"></div>
<div class="a sbb" style="left:536px;top:30px;width:17px;height:17px;"></div>
<div class="a sbb" style="left:536px;top:443px;width:17px;height:17px;"></div>
<div class="a " style="left:544px;top:36px;width:1px;height:1px;background:#000"></div>
<div class="a " style="left:543px;top:37px;width:3px;height:1px;background:#000"></div>
<div class="a " style="left:542px;top:38px;width:5px;height:1px;background:#000"></div>
<div class="a " style="left:541px;top:39px;width:7px;height:1px;background:#000"></div>
<div class="a " style="left:541px;top:450px;width:7px;height:1px;background:#000"></div>
<div class="a " style="left:542px;top:451px;width:5px;height:1px;background:#000"></div>
<div class="a " style="left:543px;top:452px;width:3px;height:1px;background:#000"></div>
<div class="a " style="left:544px;top:453px;width:1px;height:1px;background:#000"></div>
<div class="a sbb" style="left:536px;top:123px;width:17px;height:163px;"></div>
<div class="a track" style="left:8px;top:460px;width:528px;height:17px;"></div>
<div class="a sbb" style="left:8px;top:460px;width:17px;height:17px;"></div>
<div class="a sbb" style="left:519px;top:460px;width:17px;height:17px;"></div>
<div class="a " style="left:14px;top:468px;width:1px;height:1px;background:#000"></div>
<div class="a " style="left:15px;top:467px;width:1px;height:3px;background:#000"></div>
<div class="a " style="left:16px;top:466px;width:1px;height:5px;background:#000"></div>
<div class="a " style="left:17px;top:465px;width:1px;height:7px;background:#000"></div>
<div class="a " style="left:525px;top:465px;width:1px;height:7px;background:#000"></div>
<div class="a " style="left:526px;top:466px;width:1px;height:5px;background:#000"></div>
<div class="a " style="left:527px;top:467px;width:1px;height:3px;background:#000"></div>
<div class="a " style="left:528px;top:468px;width:1px;height:1px;background:#000"></div>
<div class="a sbb" style="left:189px;top:460px;width:187px;height:17px;"></div>
<div class="a " style="left:536px;top:460px;width:17px;height:17px;background:#f0f0f0"></div>
<div class="a " style="left:8px;top:477px;width:545px;height:1px;background:#fff"></div>
<div class="a " style="left:8px;top:478px;width:545px;height:3px;background:#f0f0f0"></div>
<div class="a " style="left:8px;top:481px;width:545px;height:1px;background:#a0a0a0"></div>
<div class="a " style="left:8px;top:482px;width:545px;height:1px;background:#696969"></div>
<div class="a " style="left:552px;top:477px;width:1px;height:6px;background:#696969"></div>
<div class="a " style="left:8px;top:477px;width:1px;height:5px;background:#fff"></div>
<div class="a " style="left:8px;top:483px;width:545px;height:108px;background:#f0f0f0"></div>
<div class="a " style="left:8px;top:483px;width:88px;height:1px;background:#fff"></div>
<div class="a " style="left:8px;top:483px;width:1px;height:108px;background:#fff"></div>
<div class="a " style="left:96px;top:483px;width:457px;height:108px;background:#fff"></div>
<div class="a " style="left:96px;top:483px;width:456px;height:107px;background:#989898"></div>
<svg class="a" style="left:98px;top:485px;background:#000" width="453" height="104" viewBox="0 0 453 104" shape-rendering="crispEdges"><rect x="0" y="52" width="453" height="1" fill="#008a00"/><path d="M56.5 0V104" stroke="#009a00" stroke-width="1" stroke-dasharray="3 3"/><path d="M113.5 0V104" stroke="#009a00" stroke-width="1" stroke-dasharray="3 3"/><path d="M169.5 0V104" stroke="#009a00" stroke-width="1" stroke-dasharray="3 3"/><path d="M226.5 0V104" stroke="#009a00" stroke-width="1" stroke-dasharray="3 3"/><path d="M283.5 0V104" stroke="#009a00" stroke-width="1" stroke-dasharray="3 3"/><path d="M339.5 0V104" stroke="#009a00" stroke-width="1" stroke-dasharray="3 3"/><path d="M396.5 0V104" stroke="#009a00" stroke-width="1" stroke-dasharray="3 3"/></svg>
<div class="t " style="left:16px;top:487px;font-size:13px;color:#000;transform:scaleX(0.9512);"><u>H</u>istory [s]:</div>
<div class="a sunk" style="left:16px;top:507px;width:72px;height:22px;"></div>
<div class="a sbtn" style="left:69px;top:509px;width:17px;height:9px;"></div>
<div class="a sbtn" style="left:69px;top:518px;width:17px;height:9px;"></div>
<div class="a " style="left:77px;top:512px;width:1px;height:1px;background:#000"></div>
<div class="a " style="left:76px;top:513px;width:3px;height:1px;background:#000"></div>
<div class="a " style="left:76px;top:521px;width:3px;height:1px;background:#000"></div>
<div class="a " style="left:77px;top:522px;width:1px;height:1px;background:#000"></div>
<div class="t " style="left:19.5px;top:510px;font-size:13px;color:#000;transform:scaleX(0.8650);">480</div>
<div class="t " style="left:16px;top:531px;font-size:13px;color:#000;transform:scaleX(0.9050);"><u>R</u>ange [px]:</div>
<div class="a sunk" style="left:16px;top:551px;width:72px;height:22px;"></div>
<div class="a sbtn" style="left:69px;top:553px;width:17px;height:9px;"></div>
<div class="a sbtn" style="left:69px;top:562px;width:17px;height:9px;"></div>
<div class="a " style="left:77px;top:556px;width:1px;height:1px;background:#000"></div>
<div class="a " style="left:76px;top:557px;width:3px;height:1px;background:#000"></div>
<div class="a " style="left:76px;top:565px;width:3px;height:1px;background:#000"></div>
<div class="a " style="left:77px;top:566px;width:1px;height:1px;background:#000"></div>
<div class="t " style="left:19.5px;top:554px;font-size:13px;color:#000;transform:scaleX(0.8650);">1</div>
<div class="a " style="left:16px;top:582px;width:9px;height:1px;background:#f00"></div>
<div class="t " style="left:28px;top:575px;font-size:13px;color:#000;transform:scaleX(0.9050);">R.A.</div>
<div class="a " style="left:50px;top:582px;width:9px;height:1px;background:#00f"></div>
<div class="t " style="left:62px;top:575px;font-size:13px;color:#000;transform:scaleX(0.9050);">Dec.</div>
<div class="a " style="left:8px;top:591px;width:545px;height:1px;background:#fff"></div>
<div class="a " style="left:8px;top:592px;width:545px;height:3px;background:#f0f0f0"></div>
<div class="a " style="left:8px;top:595px;width:545px;height:1px;background:#a0a0a0"></div>
<div class="a " style="left:8px;top:596px;width:545px;height:1px;background:#696969"></div>
<div class="a " style="left:552px;top:591px;width:1px;height:6px;background:#696969"></div>
<div class="a " style="left:8px;top:597px;width:528px;height:176px;background:#fff"></div>
<div class="t mono" style="left:17px;top:598px;font-size:13px;line-height:13px;letter-spacing:0.2px;color:#2a2a2a;will-change:transform">[22:06:28] Exposing guider light frame...</div>
<div class="t mono" style="left:17px;top:611px;font-size:13px;line-height:13px;letter-spacing:0.2px;color:#2a2a2a;will-change:transform">[22:06:34] Guider image exposed.</div>
<div class="t mono" style="left:17px;top:624px;font-size:13px;line-height:13px;letter-spacing:0.2px;color:#2a2a2a;will-change:transform">[22:06:34] Exposing guider light frame...</div>
<div class="t mono" style="left:17px;top:637px;font-size:13px;line-height:13px;letter-spacing:0.2px;color:#2a2a2a;will-change:transform">[22:06:39] Guider image exposed.</div>
<div class="t mono" style="left:17px;top:650px;font-size:13px;line-height:13px;letter-spacing:0.2px;color:#2a2a2a;will-change:transform">[22:06:40] Exposing guider light frame...</div>
<div class="a track" style="left:536px;top:597px;width:17px;height:176px;"></div>
<div class="a sbb" style="left:536px;top:597px;width:17px;height:17px;"></div>
<div class="a sbb" style="left:536px;top:756px;width:17px;height:17px;"></div>
<div class="a " style="left:545px;top:604px;width:1px;height:1px;background:#fff"></div>
<div class="a " style="left:544px;top:603px;width:1px;height:1px;background:#a0a0a0"></div>
<div class="a " style="left:544px;top:605px;width:3px;height:1px;background:#fff"></div>
<div class="a " style="left:543px;top:604px;width:3px;height:1px;background:#a0a0a0"></div>
<div class="a " style="left:543px;top:606px;width:5px;height:1px;background:#fff"></div>
<div class="a " style="left:542px;top:605px;width:5px;height:1px;background:#a0a0a0"></div>
<div class="a " style="left:542px;top:607px;width:7px;height:1px;background:#fff"></div>
<div class="a " style="left:541px;top:606px;width:7px;height:1px;background:#a0a0a0"></div>
<div class="a " style="left:542px;top:764px;width:7px;height:1px;background:#fff"></div>
<div class="a " style="left:541px;top:763px;width:7px;height:1px;background:#a0a0a0"></div>
<div class="a " style="left:543px;top:765px;width:5px;height:1px;background:#fff"></div>
<div class="a " style="left:542px;top:764px;width:5px;height:1px;background:#a0a0a0"></div>
<div class="a " style="left:544px;top:766px;width:3px;height:1px;background:#fff"></div>
<div class="a " style="left:543px;top:765px;width:3px;height:1px;background:#a0a0a0"></div>
<div class="a " style="left:545px;top:767px;width:1px;height:1px;background:#fff"></div>
<div class="a " style="left:544px;top:766px;width:1px;height:1px;background:#a0a0a0"></div>
<div class="a sbb" style="left:536px;top:614px;width:17px;height:142px;"></div>
<div class="a track" style="left:8px;top:773px;width:528px;height:17px;"></div>
<div class="a sbb" style="left:8px;top:773px;width:17px;height:17px;"></div>
<div class="a sbb" style="left:519px;top:773px;width:17px;height:17px;"></div>
<div class="a " style="left:15px;top:782px;width:1px;height:1px;background:#fff"></div>
<div class="a " style="left:14px;top:781px;width:1px;height:1px;background:#a0a0a0"></div>
<div class="a " style="left:16px;top:781px;width:1px;height:3px;background:#fff"></div>
<div class="a " style="left:15px;top:780px;width:1px;height:3px;background:#a0a0a0"></div>
<div class="a " style="left:17px;top:780px;width:1px;height:5px;background:#fff"></div>
<div class="a " style="left:16px;top:779px;width:1px;height:5px;background:#a0a0a0"></div>
<div class="a " style="left:18px;top:779px;width:1px;height:7px;background:#fff"></div>
<div class="a " style="left:17px;top:778px;width:1px;height:7px;background:#a0a0a0"></div>
<div class="a " style="left:525px;top:778px;width:1px;height:7px;background:#000"></div>
<div class="a " style="left:526px;top:779px;width:1px;height:5px;background:#000"></div>
<div class="a " style="left:527px;top:780px;width:1px;height:3px;background:#000"></div>
<div class="a " style="left:528px;top:781px;width:1px;height:1px;background:#000"></div>
<div class="a sbb" style="left:25px;top:773px;width:254px;height:17px;"></div>
<div class="a " style="left:536px;top:773px;width:17px;height:17px;background:#f0f0f0"></div>
<div class="a " style="left:0px;top:20px;width:476px;height:181px;border-radius:9px;background:rgba(0,0,0,.10)"></div>
<div class="a " style="left:1px;top:22px;width:473px;height:177px;border-radius:8px;background:rgba(0,0,0,.14)"></div>
<div class="a " style="left:2px;top:24px;width:470px;height:173px;border-radius:8px;background:rgba(0,0,0,.22)"></div>
<div class="a " style="left:3px;top:25px;width:468px;height:170px;border-radius:7px;background:#1c2b45"></div>
<div class="a " style="left:4px;top:26px;width:466px;height:168px;border-radius:6px;background:#e8f0fb"></div>
<div class="a " style="left:5px;top:27px;width:464px;height:166px;border-radius:5px;background:linear-gradient(180deg,#5f8dd2 0,#7ea1d9 26px,#84a6db 34px,#6c93d0 100px,#4a7bc3 160px)"></div>
<div class="a " style="left:5px;top:27px;width:464px;height:27px;border-radius:5px 5px 0 0;background:linear-gradient(90deg,#7da1da 0,#6892d3 38%,#4777c5 50%,#4273c3 58%,#6a94d4 68%,#7fa3da 85%,#8eaee0 100%)"></div>
<div class="a " style="left:5px;top:27px;width:464px;height:27px;border-radius:5px 5px 0 0;background:linear-gradient(180deg,rgba(40,80,160,.18) 0,rgba(255,255,255,0) 40%,rgba(255,255,255,.12) 100%)"></div>
<div class="a " style="left:-20px;top:24px;width:260px;height:34px;border-radius:50%;background:radial-gradient(ellipse closest-side,rgba(255,255,255,.78) 0,rgba(255,255,255,.62) 45%,rgba(255,255,255,0) 100%)"></div>
<div class="t " style="left:11px;top:32px;font-size:13px;color:#000;transform:scaleX(0.9161);">Star search parameters for Guiding</div>
<div class="a " style="left:417px;top:26px;width:47px;height:19px;border:1px solid #5a1c14;border-top:none;border-radius:0 0 5px 5px;background:linear-gradient(180deg,#e9b1ab 0,#dc8e85 48%,#c43b2b 52%,#c84a36 75%,#dc8066 100%);box-shadow:inset 0 0 0 1px rgba(255,255,255,.4)"></div>
<svg class="a" style="left:435px;top:29px" width="13" height="11.3" viewBox="0 0 15 13"><path d="M2 1.5h3.2L7.5 4.3l2.3-2.8H13L9.3 6.5 13 11.5H9.8L7.5 8.7l-2.3 2.8H2L5.7 6.5z" fill="#fff" stroke="#4a5166" stroke-width="1.1" stroke-linejoin="round"/></svg>
<div class="a " style="left:9px;top:53px;width:456px;height:136px;background:rgba(235,243,255,.75)"></div>
<div class="a " style="left:10px;top:54px;width:454px;height:134px;background:#2b4168"></div>
<div class="a " style="left:11px;top:55px;width:452px;height:132px;background:#f0f0f0"></div>
<div class="t " style="left:19px;top:65px;font-size:13px;color:#000;transform:scaleX(0.9050);"><u>A</u>perture:</div>
<div class="a sunk" style="left:111px;top:63px;width:48px;height:22px;"></div>
<div class="a sbtn" style="left:140px;top:65px;width:17px;height:9px;"></div>
<div class="a sbtn" style="left:140px;top:74px;width:17px;height:9px;"></div>
<div class="a " style="left:148px;top:68px;width:1px;height:1px;background:#000"></div>
<div class="a " style="left:147px;top:69px;width:3px;height:1px;background:#000"></div>
<div class="a " style="left:147px;top:77px;width:3px;height:1px;background:#000"></div>
<div class="a " style="left:148px;top:78px;width:1px;height:1px;background:#000"></div>
<div class="a " style="left:115px;top:66px;width:11px;height:15px;background:#3399ff"></div>
<div class="t " style="left:115px;top:66px;font-size:13px;color:#fff;transform:scaleX(0.7953);">21</div>
<div class="a " style="left:126px;top:66px;width:1px;height:15px;background:#000"></div>
<div class="t " style="left:167px;top:65px;font-size:13px;color:#000;transform:scaleX(0.9050);"><u>S</u>td. dev. count:</div>
<div class="a sunk" style="left:259px;top:63px;width:48px;height:22px;"></div>
<div class="a sbtn" style="left:288px;top:65px;width:17px;height:9px;"></div>
<div class="a sbtn" style="left:288px;top:74px;width:17px;height:9px;"></div>
<div class="a " style="left:296px;top:68px;width:1px;height:1px;background:#000"></div>
<div class="a " style="left:295px;top:69px;width:3px;height:1px;background:#000"></div>
<div class="a " style="left:295px;top:77px;width:3px;height:1px;background:#000"></div>
<div class="a " style="left:296px;top:78px;width:1px;height:1px;background:#000"></div>
<div class="t " style="left:262.5px;top:66px;font-size:13px;color:#000;transform:scaleX(0.8650);">3</div>
<div class="t " style="left:315px;top:65px;font-size:13px;color:#000;transform:scaleX(0.9145);"><u>N</u>umber of pixels:</div>
<div class="a sunk" style="left:407px;top:63px;width:48px;height:22px;"></div>
<div class="a sbtn" style="left:436px;top:65px;width:17px;height:9px;"></div>
<div class="a sbtn" style="left:436px;top:74px;width:17px;height:9px;"></div>
<div class="a " style="left:444px;top:68px;width:1px;height:1px;background:#000"></div>
<div class="a " style="left:443px;top:69px;width:3px;height:1px;background:#000"></div>
<div class="a " style="left:443px;top:77px;width:3px;height:1px;background:#000"></div>
<div class="a " style="left:444px;top:78px;width:1px;height:1px;background:#000"></div>
<div class="t " style="left:410.5px;top:66px;font-size:13px;color:#000;transform:scaleX(0.8650);">3</div>
<div class="t " style="left:19px;top:87px;font-size:13px;color:#000;transform:scaleX(0.9294);">Aperture (in pixels), within</div>
<div class="t " style="left:19px;top:102px;font-size:13px;color:#000;transform:scaleX(0.9396);">which a centroid of star</div>
<div class="t " style="left:19px;top:117px;font-size:13px;color:#000;transform:scaleX(0.8982);">image is searched.</div>
<div class="t " style="left:167px;top:87px;font-size:13px;color:#000;transform:scaleX(0.9290);">Aperture mean plus</div>
<div class="t " style="left:167px;top:102px;font-size:13px;color:#000;transform:scaleX(0.9572);">multiply of standard</div>
<div class="t " style="left:167px;top:117px;font-size:13px;color:#000;transform:scaleX(0.9315);">deviation of aperture</div>
<div class="t " style="left:167px;top:132px;font-size:13px;color:#000;transform:scaleX(0.9296);">defines threshold for star</div>
<div class="t " style="left:167px;top:147px;font-size:13px;color:#000;transform:scaleX(0.9119);">pixels.</div>
<div class="t " style="left:315px;top:87px;font-size:13px;color:#000;transform:scaleX(0.9402);">Number of required</div>
<div class="t " style="left:315px;top:102px;font-size:13px;color:#000;transform:scaleX(0.9269);">neighboring pixels above</div>
<div class="t " style="left:315px;top:117px;font-size:13px;color:#000;transform:scaleX(0.9177);">threshold to treat pixel as</div>
<div class="t " style="left:315px;top:132px;font-size:13px;color:#000;transform:scaleX(0.9348);">belonging to star image.</div>
<div class="a " style="left:283px;top:155px;width:80px;height:25px;background:#000"></div>
<div class="a btn" style="left:284px;top:156px;width:78px;height:23px;"></div>
<div class="t " style="left:315px;top:158px;font-size:13px;color:#000;transform:scaleX(0.9050);"><u>O</u>K</div>
<div class="a btn" style="left:373px;top:155px;width:80px;height:25px;"></div>
<div class="t " style="left:395px;top:158px;font-size:13px;color:#000;transform:scaleX(0.9050);"><u>C</u>ancel</div>
</body></html>
